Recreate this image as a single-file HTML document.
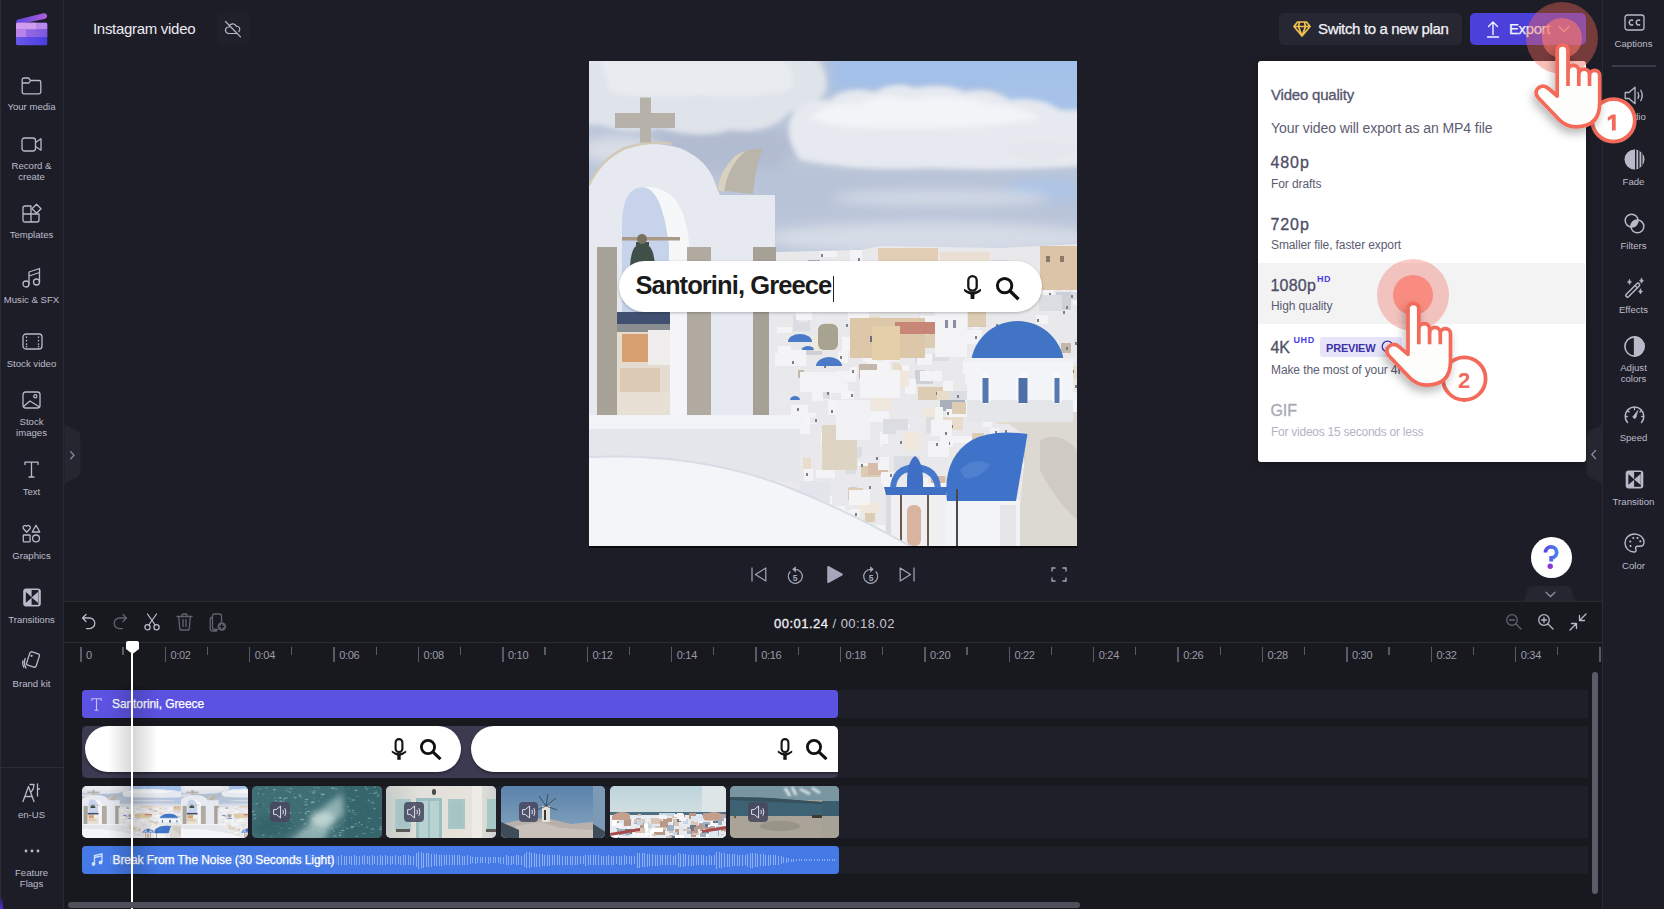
<!DOCTYPE html>
<html><head><meta charset="utf-8">
<style>
*{margin:0;padding:0;box-sizing:border-box}
html,body{width:1664px;height:909px;overflow:hidden}
body{background:#1d1d27;font-family:"Liberation Sans",sans-serif;position:relative;color:#fff}
.a{position:absolute}
.lbl{position:absolute;left:0;width:63px;text-align:center;font-size:9.6px;line-height:10.5px;color:#bcbccb;white-space:nowrap}
.rlbl{position:absolute;left:1603px;width:61px;text-align:center;font-size:9.6px;line-height:10.5px;color:#bcbccb;white-space:nowrap}
svg{position:absolute;overflow:visible}
.ic{fill:none;stroke:#b9b9c9;stroke-width:1.3;stroke-linecap:round;stroke-linejoin:round}
.tick{position:absolute;width:1px;background:#5a5a66}
.wv i{position:absolute;width:1.1px;background:rgba(190,212,255,0.6)}
.rl{position:absolute;top:647px;font-size:11px;color:#9a9aa8;letter-spacing:-0.3px;line-height:13px}
</style></head><body>

<!-- LEFT SIDEBAR -->
<div class="a" style="left:0;top:0;width:1px;height:909px;background:#2c2c38;z-index:1"></div>
<div class="a" style="left:0;top:896px;width:3px;height:13px;background:linear-gradient(180deg,rgba(80,40,220,0),#5028d8);z-index:1"></div>
<div class="a" style="left:0;top:0;width:64px;height:909px;background:#1d1d27;border-right:1px solid #2a2a36"></div>
<div class="a" style="left:0;top:767px;width:63px;height:1px;background:#2c2c38"></div>

<!-- RIGHT SIDEBAR -->
<div class="a" style="left:1602px;top:0;width:62px;height:909px;background:#1d1d27;border-left:1px solid #2a2a36"></div>
<div class="a" style="left:1612px;top:65px;width:44px;height:2px;background:#3a3a48"></div>

<!-- TIMELINE PANEL -->
<div class="a" style="left:64px;top:601px;width:1538px;height:308px;background:#18181f;border-top:1px solid #2b2b36"></div>
<div class="a" style="left:64px;top:642px;width:1538px;height:1px;background:#2b2b36"></div>



<!-- LEFT SIDEBAR ITEMS -->
<svg style="left:21px;top:77px" width="21" height="18" viewBox="0 0 21 18" class="ic">
  <path d="M1.2 3 Q1.2 1 3 1 H7.5 L9.5 3.5 H18 Q19.8 3.5 19.8 5.3 V15 Q19.8 16.8 18 16.8 H3 Q1.2 16.8 1.2 15 Z M1.2 6 H8 L9.5 3.5"/>
</svg>
<div class="lbl" style="top:102.4px">Your media</div>

<svg style="left:21px;top:137px" width="21" height="15" viewBox="0 0 21 15" class="ic">
  <rect x="1" y="1" width="13.5" height="13" rx="2.5"/>
  <path d="M14.5 5.5 L20 1.8 V13.2 L14.5 9.5"/>
</svg>
<div class="lbl" style="top:161px">Record &amp;<br>create</div>

<svg style="left:22px;top:203px" width="20" height="20" viewBox="0 0 20 20" class="ic">
  <path d="M1 5 Q1 3 3 3 H9 V19 H3 Q1 19 1 17 Z M1 11 H17 V17 Q17 19 15 19 H9"/>
  <path d="M14.5 1.2 L19 5.7 L14.5 10.2 L10 5.7 Z"/>
</svg>
<div class="lbl" style="top:230.4px">Templates</div>

<svg style="left:22px;top:267px" width="19" height="21" viewBox="0 0 19 21" class="ic">
  <circle cx="4" cy="17" r="3"/><circle cx="14.5" cy="15" r="3"/>
  <path d="M7 17 V5 L17.5 1.5 V15 M7 9 L17.5 5.5"/>
</svg>
<div class="lbl" style="top:294.7px">Music &amp; SFX</div>

<svg style="left:21.5px;top:333px" width="21" height="17" viewBox="0 0 21 17" class="ic">
  <rect x="1" y="1" width="19" height="15" rx="3"/>
  <path d="M4.5 4 V4.2 M4.5 7.5 V7.7 M4.5 11 V11.2 M4.5 13.5 V13.7 M16.5 4 V4.2 M16.5 7.5 V7.7 M16.5 11 V11.2 M16.5 13.5 V13.7" style="stroke-width:1.5"/>
</svg>
<div class="lbl" style="top:358.5px">Stock video</div>

<svg style="left:22px;top:391px" width="19" height="18" viewBox="0 0 19 18" class="ic">
  <rect x="1" y="1" width="17" height="16" rx="2.5"/>
  <path d="M1.5 15.5 L8 10 L17.5 16"/><circle cx="13.3" cy="5.3" r="1.6"/>
</svg>
<div class="lbl" style="top:417.4px">Stock<br>images</div>

<svg style="left:24px;top:461px" width="15" height="17" viewBox="0 0 15 17" class="ic">
  <path d="M1 3.5 V1.2 H14 V3.5 M7.5 1.2 V16 M5 16 H10"/>
</svg>
<div class="lbl" style="top:486.6px">Text</div>

<svg style="left:22px;top:524px" width="19" height="19" viewBox="0 0 19 19" class="ic">
  <path d="M4.7 8.2 L1.5 4.8 A1.9 1.9 0 0 1 4.7 2.3 A1.9 1.9 0 0 1 7.9 4.8 Z"/>
  <path d="M14 1.2 L17.8 8 H10.2 Z"/>
  <rect x="1.3" y="11" width="6.8" height="6.8" rx="0.6"/>
  <circle cx="14" cy="14.4" r="3.4"/>
</svg>
<div class="lbl" style="top:550.5px">Graphics</div>

<svg style="left:22.5px;top:588px" width="18" height="19" viewBox="0 0 18 19">
  <rect x="0.2" y="0.4" width="17.6" height="18" rx="3" fill="#b9b9c9"/>
  <path d="M2.8 4 L9 9.4 L2.8 14.8 Z" fill="#1d1d27"/>
  <path d="M9 9.4 L15.2 4 V14.8 Z" fill="#1d1d27" opacity="0.35"/>
  <rect x="8.6" y="2" width="6.8" height="14.8" fill="#1d1d27"/>
  <path d="M8.6 9.4 L15.2 3.8 V15 Z" fill="#b9b9c9"/>
</svg>
<div class="lbl" style="top:614.7px">Transitions</div>

<svg style="left:21px;top:651px" width="20" height="20" viewBox="0 0 20 20" class="ic">
  <rect x="7" y="1.5" width="10" height="14" rx="1.8" transform="rotate(18 12 8.5)"/>
  <path d="M4.2 7.5 Q2.2 12 5 17 M1.8 10 Q1 13 2.8 16.3"/>
  <circle cx="10.6" cy="4.8" r="0.5" style="fill:#b9b9c9"/>
</svg>
<div class="lbl" style="top:678.7px">Brand kit</div>

<svg style="left:22px;top:783px" width="19" height="20" viewBox="0 0 19 20" class="ic">
  <path d="M1 18.5 L6.5 3.5 L12 18.5 M3 13.5 H10"/>
  <path d="M8 1.5 H12 Q12 6 9.5 8.5 M15.5 0.8 V13 M15.5 6 H17.5"/>
</svg>
<div class="lbl" style="top:809.5px">en-US</div>

<svg style="left:24px;top:849px" width="16" height="4" viewBox="0 0 16 4">
  <circle cx="2" cy="2" r="1.4" fill="#b9b9c9"/><circle cx="8" cy="2" r="1.4" fill="#b9b9c9"/><circle cx="14" cy="2" r="1.4" fill="#b9b9c9"/>
</svg>
<div class="lbl" style="top:868.1px">Feature<br>Flags</div>

<!-- RIGHT SIDEBAR ITEMS -->
<svg style="left:1624px;top:13.5px" width="21" height="17" viewBox="0 0 21 17" class="ic">
  <rect x="1" y="1" width="19" height="15" rx="2.5"/>
  <path d="M8.6 6.3 A2.4 2.4 0 1 0 8.6 10.7 M15.6 6.3 A2.4 2.4 0 1 0 15.6 10.7" style="stroke-width:1.5"/>
</svg>
<div class="rlbl" style="top:38.9px">Captions</div>

<svg style="left:1624px;top:86px" width="21" height="19" viewBox="0 0 21 19" class="ic">
  <path d="M1.2 6.5 H5 L11 1.3 V17.7 L5 12.5 H1.2 Z"/>
  <path d="M14 6.5 Q15.5 9.5 14 12.5 M16.8 4.2 Q19.6 9.5 16.8 14.8"/>
</svg>
<div class="rlbl" style="top:112.2px">Audio</div>

<svg style="left:1624px;top:149px" width="21" height="21" viewBox="0 0 21 21">
  <defs><clipPath id="fc"><circle cx="10.5" cy="10.5" r="10"/></clipPath></defs>
  <circle cx="10.5" cy="10.5" r="10" fill="#b9b9c9"/>
  <g clip-path="url(#fc)">
   <rect x="11" y="0" width="1.4" height="21" fill="#1d1d27"/>
   <rect x="14.2" y="0" width="1.3" height="21" fill="#1d1d27"/>
   <rect x="17.3" y="0" width="1.2" height="21" fill="#1d1d27"/>
  </g>
</svg>
<div class="rlbl" style="top:176.6px">Fade</div>

<svg style="left:1624px;top:213px" width="21" height="21" viewBox="0 0 21 21" class="ic">
  <defs><clipPath id="fl1"><circle cx="7.6" cy="7.6" r="6.4"/></clipPath></defs>
  <circle cx="13.4" cy="13.4" r="6.4" clip-path="url(#fl1)" style="fill:#b9b9c9;stroke:none"/>
  <circle cx="7.6" cy="7.6" r="6.4" style="stroke-width:1.5"/><circle cx="13.4" cy="13.4" r="6.4" style="stroke-width:1.5"/>
</svg>
<div class="rlbl" style="top:240.5px">Filters</div>

<svg style="left:1624px;top:278px" width="21" height="20" viewBox="0 0 21 20" class="ic">
  <path d="M2.3 16.2 L12.8 5.7 Q14 4.5 15.2 5.7 Q16.4 6.9 15.2 8.1 L4.7 18.6 Q3.5 19.8 2.3 18.6 Q1.1 17.4 2.3 16.2 Z" style="stroke-width:1.4"/>
  <path d="M11 7.5 L13.4 9.9" style="stroke-width:1.3"/>
  <path d="M5.5 1.5 Q5.9 3.6 7.6 4 Q5.9 4.4 5.5 6.5 Q5.1 4.4 3.4 4 Q5.1 3.6 5.5 1.5 Z M17.5 0.3 Q17.9 2.4 19.6 2.8 Q17.9 3.2 17.5 5.3 Q17.1 3.2 15.4 2.8 Q17.1 2.4 17.5 0.3 Z M16.5 11 Q16.9 13.1 18.6 13.5 Q16.9 13.9 16.5 16 Q16.1 13.9 14.4 13.5 Q16.1 13.1 16.5 11 Z" style="fill:#b9b9c9;stroke-width:0.6"/>
</svg>
<div class="rlbl" style="top:304.7px">Effects</div>

<svg style="left:1624px;top:335.5px" width="21" height="21" viewBox="0 0 21 21" class="ic">
  <circle cx="10.5" cy="10.5" r="9.6" style="stroke-width:1.6"/>
  <path d="M10.5 0.9 A9.6 9.6 0 0 1 10.5 20.1 Z" style="fill:#b9b9c9"/>
</svg>
<div class="rlbl" style="top:363.2px">Adjust<br>colors</div>

<svg style="left:1624px;top:405px" width="21" height="19" viewBox="0 0 21 19" class="ic">
  <path d="M3.5 17.5 A9.3 9.3 0 1 1 17.5 17.5" style="stroke-width:1.5"/>
  <path d="M10.5 3 V4.5 M4 6 L5 7 M17 6 L16 7 M2 11.5 H3.3 M19 11.5 H17.7" style="stroke-width:1.3"/>
  <path d="M9.2 11.5 L13.8 5.5 L11.8 12.8 Q10.5 14 9.4 12.8 Q8.8 12.1 9.2 11.5 Z" style="fill:#b9b9c9;stroke-width:0.8"/>
</svg>
<div class="rlbl" style="top:432.6px">Speed</div>

<svg style="left:1625px;top:470px" width="19" height="19" viewBox="0 0 18 19">
  <rect x="0.2" y="0.4" width="17.6" height="18" rx="3" fill="#b9b9c9"/>
  <rect x="8.6" y="2" width="6.8" height="14.8" fill="#1d1d27"/>
  <path d="M2.8 4 L9 9.4 L2.8 14.8 Z" fill="#1d1d27"/>
  <path d="M8.6 9.4 L15.2 3.8 V15 Z" fill="#b9b9c9"/>
</svg>
<div class="rlbl" style="top:496.8px">Transition</div>

<svg style="left:1624px;top:533px" width="21" height="20" viewBox="0 0 21 20" class="ic">
  <path d="M10.5 1 C4.5 1 1 5.5 1 10 C1 15 5 19 10 19 C12 19 12.5 17.5 11.8 16.2 C11 14.8 12 13.2 13.6 13.2 H16 C18.5 13.2 20 11.5 20 9.2 C20 4.5 15.5 1 10.5 1 Z" style="stroke-width:1.4"/>
  <circle cx="6.3" cy="8.5" r="1.1" style="fill:#b9b9c9;stroke:none"/>
  <circle cx="9.3" cy="5" r="1.1" style="fill:#b9b9c9;stroke:none"/>
  <circle cx="13.5" cy="5" r="1.1" style="fill:#b9b9c9;stroke:none"/>
  <circle cx="16.3" cy="8.3" r="1.1" style="fill:#b9b9c9;stroke:none"/>
  <circle cx="6.5" cy="13" r="1.1" style="fill:#b9b9c9;stroke:none"/>
</svg>
<div class="rlbl" style="top:560.7px">Color</div>

<!-- HEADER -->
<svg style="left:16px;top:13px" width="32" height="33" viewBox="0 0 32 33">
  <defs>
    <linearGradient id="lg1" x1="0" y1="0" x2="1" y2="0"><stop offset="0" stop-color="#5a44dc"/><stop offset="1" stop-color="#b060dc"/></linearGradient>
    <linearGradient id="lg3" x1="0" y1="0" x2="1" y2="0"><stop offset="0" stop-color="#6a58e8"/><stop offset="1" stop-color="#4a3ce2"/></linearGradient>
    <linearGradient id="lg4" x1="0" y1="0" x2="1" y2="0"><stop offset="0" stop-color="#a070e6"/><stop offset="1" stop-color="#7c58e0"/></linearGradient>
    <clipPath id="lc"><rect x="0" y="9.5" width="31.5" height="23" rx="2"/></clipPath>
  </defs>
  <path d="M1.8 6.5 L27.5 0.2 Q30.5 -0.3 31 2.6 Q31.4 5.2 28.6 5.9 L2 11.5 Q0 11.5 0 9.5 Q0 7 1.8 6.5 Z" fill="url(#lg1)"/>
  <g clip-path="url(#lc)">
    <rect x="0" y="9.5" width="31.5" height="23" fill="url(#lg3)"/>
    <rect x="0" y="9.5" width="31.5" height="7" fill="#b888ea"/>
    <rect x="0" y="9.5" width="20" height="7" fill="#d09cee"/>
    <rect x="0" y="16.5" width="31.5" height="7.5" fill="url(#lg4)"/>
    <rect x="0" y="16.5" width="10" height="7.5" fill="#b884ea"/>
  </g>
</svg>
<div class="a" style="left:93px;top:19px;font-size:15px;line-height:20px;color:#ececf2;letter-spacing:-0.3px;white-space:nowrap">Instagram video</div>
<div class="a" style="left:217px;top:13px;width:32px;height:32px;border-radius:4px;background:#20202a"></div>
<svg style="left:224px;top:20px" width="18" height="18" viewBox="0 0 18 18" class="ic">
  <path d="M5 7.2 A3.8 3.8 0 0 1 12.3 6.3 A3 3 0 0 1 14.8 11.5 M12.6 13.5 H4.5 A3.2 3.2 0 0 1 3.6 7.3" class="ic" style="stroke-width:1.2"/>
  <path d="M1.5 1.5 L16.5 16.8" class="ic" style="stroke-width:1.2"/>
</svg>

<div class="a" style="left:1279px;top:13px;width:183px;height:32px;border-radius:5px;background:#272734"></div>
<svg style="left:1293px;top:21px" width="18" height="16" viewBox="0 0 18 16">
  <path d="M4.5 1 H13.5 L17 5.5 L9 15 L1 5.5 Z M1 5.5 H17 M6.5 1 L5.5 5.5 L9 15 L12.5 5.5 L11.5 1" fill="none" stroke="#f2c14e" stroke-width="1.7" stroke-linejoin="round"/>
</svg>
<div class="a" style="left:1318px;top:19px;font-size:15px;line-height:20px;color:#f2f2f6;-webkit-text-stroke:0.25px #f2f2f6;letter-spacing:-0.35px;white-space:nowrap">Switch to a new plan</div>

<div class="a" style="left:1470px;top:13px;width:116px;height:32px;border-radius:5px;background:#4b40d9"></div>
<svg style="left:1485px;top:20px" width="16" height="18" viewBox="0 0 16 18">
  <path d="M8 14.5 V2 M3.5 6.5 L8 2 L12.5 6.5 M2.5 17 H13.5" fill="none" stroke="#f4f4ff" stroke-width="1.4" stroke-linecap="round" stroke-linejoin="round"/>
</svg>
<div class="a" style="left:1509px;top:19px;font-size:15px;line-height:20px;color:#f4f4ff;-webkit-text-stroke:0.25px #f4f4ff;letter-spacing:-0.4px;white-space:nowrap">Export</div>
<svg style="left:1558px;top:25px" width="12" height="8" viewBox="0 0 12 8">
  <path d="M1 1.5 L6 6.5 L11 1.5" fill="none" stroke="#dcdcf5" stroke-width="1.3" stroke-linecap="round" stroke-linejoin="round"/>
</svg>


<!-- TIMELINE TOOLBAR -->
<svg style="left:1518px;top:585px" width="63" height="17" viewBox="0 0 63 17"><path d="M0 16.5 Q7 16.5 8 11 L9 5 Q10 1 15 1 H48 Q53 1 54 5 L55 11 Q56 16.5 63 16.5 Z" fill="#262631"/></svg>
<svg style="left:1545px;top:591px" width="11" height="7" viewBox="0 0 11 7"><path d="M1 1.2 L5.5 5.5 L10 1.2" fill="none" stroke="#8c8ca2" stroke-width="1.3" stroke-linecap="round"/></svg>
<svg style="left:81px;top:613px" width="15" height="17" viewBox="0 0 15 17" class="ic">
  <path d="M5 1.5 L1.5 5 L5 8.5 M1.5 5 H8.5 A5.3 5.3 0 0 1 8.5 15.6 H5.5"/>
</svg>
<svg style="left:113px;top:613px" width="15" height="17" viewBox="0 0 15 17" class="ic" style="stroke:#6c6c7c">
  <path d="M10 1.5 L13.5 5 L10 8.5 M13.5 5 H6.5 A5.3 5.3 0 0 0 6.5 15.6 H9.5" style="stroke:#62626f"/>
</svg>
<svg style="left:144px;top:613px" width="16" height="18" viewBox="0 0 16 18" class="ic">
  <circle cx="3.5" cy="14.3" r="2.6"/><circle cx="12.5" cy="14.3" r="2.6"/>
  <path d="M4.8 12 L12.5 1 M11.2 12 L3.5 1"/>
</svg>
<svg style="left:175.5px;top:613px" width="17" height="18" viewBox="0 0 17 18" class="ic">
  <path d="M1 3.5 H16 M6 3.5 V2 Q6 1 7 1 H10 Q11 1 11 2 V3.5 M2.6 3.5 L3.8 16 Q4 17 5 17 H12 Q13 17 13.2 16 L14.4 3.5 M7 6.5 V13.5 M10 6.5 V13.5" style="stroke:#62626f"/>
</svg>
<svg style="left:209px;top:613px" width="18" height="19" viewBox="0 0 18 19">
  <path d="M5.5 1 H10.5 Q12.5 1 12.5 3 V9 M9 16.5 H5.5 Q3.5 16.5 3.5 14.5 V3 Q3.5 1 5.5 1 M3.5 4 Q1.2 4.5 1.2 6.5 V15.5 Q1.2 18 3.7 18 H8" fill="none" stroke="#62626f" stroke-width="1.3"/>
  <circle cx="12.8" cy="13.5" r="4.3" fill="#62626f"/>
  <path d="M12.8 11 V16 M10.3 13.5 H15.3" stroke="#18181f" stroke-width="1.3"/>
</svg>

<div class="a" style="left:774px;top:617px;font-size:13px;line-height:13px;color:#f0f0f5;letter-spacing:0.47px;white-space:nowrap"><span style="-webkit-text-stroke:0.3px #f0f0f5">00:01.24</span> <span style="color:#c8c8d4">/ 00:18.02</span></div>

<svg style="left:1506px;top:614px" width="16" height="16" viewBox="0 0 16 16" class="ic" >
  <circle cx="6" cy="6" r="5.3" style="stroke:#62626f"/><path d="M3.5 6 H8.5 M10 10 L15 15" style="stroke:#62626f"/>
</svg>
<svg style="left:1538px;top:614px" width="16" height="16" viewBox="0 0 16 16" class="ic">
  <circle cx="6" cy="6" r="5.3"/><path d="M3.5 6 H8.5 M6 3.5 V8.5 M10 10 L15 15"/>
</svg>
<svg style="left:1569px;top:613px" width="18" height="18" viewBox="0 0 18 18" class="ic">
  <path d="M17 1 L10.5 7.5 M10.5 2.5 V7.5 H15.5 M1 17 L7.5 10.5 M2.5 10.5 H7.5 V15.5"/>
</svg>

<!-- RULER -->
<div class="tick" style="left:80.1px;top:647px;height:15px;width:1.5px"></div>
<div class="tick" style="left:122.4px;top:647px;height:7.5px;width:1.3px"></div>
<div class="rl" style="left:86.0px;top:648.9px">0</div>
<div class="tick" style="left:164.5px;top:647px;height:15px;width:1.5px"></div>
<div class="tick" style="left:206.8px;top:647px;height:7.5px;width:1.3px"></div>
<div class="rl" style="left:170.4px;top:648.9px">0:02</div>
<div class="tick" style="left:248.9px;top:647px;height:15px;width:1.5px"></div>
<div class="tick" style="left:291.2px;top:647px;height:7.5px;width:1.3px"></div>
<div class="rl" style="left:254.8px;top:648.9px">0:04</div>
<div class="tick" style="left:333.3px;top:647px;height:15px;width:1.5px"></div>
<div class="tick" style="left:375.6px;top:647px;height:7.5px;width:1.3px"></div>
<div class="rl" style="left:339.2px;top:648.9px">0:06</div>
<div class="tick" style="left:417.7px;top:647px;height:15px;width:1.5px"></div>
<div class="tick" style="left:460.0px;top:647px;height:7.5px;width:1.3px"></div>
<div class="rl" style="left:423.6px;top:648.9px">0:08</div>
<div class="tick" style="left:502.1px;top:647px;height:15px;width:1.5px"></div>
<div class="tick" style="left:544.4px;top:647px;height:7.5px;width:1.3px"></div>
<div class="rl" style="left:508.0px;top:648.9px">0:10</div>
<div class="tick" style="left:586.5px;top:647px;height:15px;width:1.5px"></div>
<div class="tick" style="left:628.8px;top:647px;height:7.5px;width:1.3px"></div>
<div class="rl" style="left:592.4px;top:648.9px">0:12</div>
<div class="tick" style="left:670.9px;top:647px;height:15px;width:1.5px"></div>
<div class="tick" style="left:713.2px;top:647px;height:7.5px;width:1.3px"></div>
<div class="rl" style="left:676.8px;top:648.9px">0:14</div>
<div class="tick" style="left:755.3px;top:647px;height:15px;width:1.5px"></div>
<div class="tick" style="left:797.6px;top:647px;height:7.5px;width:1.3px"></div>
<div class="rl" style="left:761.2px;top:648.9px">0:16</div>
<div class="tick" style="left:839.7px;top:647px;height:15px;width:1.5px"></div>
<div class="tick" style="left:882.0px;top:647px;height:7.5px;width:1.3px"></div>
<div class="rl" style="left:845.6px;top:648.9px">0:18</div>
<div class="tick" style="left:924.1px;top:647px;height:15px;width:1.5px"></div>
<div class="tick" style="left:966.4px;top:647px;height:7.5px;width:1.3px"></div>
<div class="rl" style="left:930.0px;top:648.9px">0:20</div>
<div class="tick" style="left:1008.5px;top:647px;height:15px;width:1.5px"></div>
<div class="tick" style="left:1050.8px;top:647px;height:7.5px;width:1.3px"></div>
<div class="rl" style="left:1014.4px;top:648.9px">0:22</div>
<div class="tick" style="left:1092.9px;top:647px;height:15px;width:1.5px"></div>
<div class="tick" style="left:1135.2px;top:647px;height:7.5px;width:1.3px"></div>
<div class="rl" style="left:1098.8px;top:648.9px">0:24</div>
<div class="tick" style="left:1177.3px;top:647px;height:15px;width:1.5px"></div>
<div class="tick" style="left:1219.6px;top:647px;height:7.5px;width:1.3px"></div>
<div class="rl" style="left:1183.2px;top:648.9px">0:26</div>
<div class="tick" style="left:1261.7px;top:647px;height:15px;width:1.5px"></div>
<div class="tick" style="left:1304.0px;top:647px;height:7.5px;width:1.3px"></div>
<div class="rl" style="left:1267.6px;top:648.9px">0:28</div>
<div class="tick" style="left:1346.1px;top:647px;height:15px;width:1.5px"></div>
<div class="tick" style="left:1388.4px;top:647px;height:7.5px;width:1.3px"></div>
<div class="rl" style="left:1352.0px;top:648.9px">0:30</div>
<div class="tick" style="left:1430.5px;top:647px;height:15px;width:1.5px"></div>
<div class="tick" style="left:1472.8px;top:647px;height:7.5px;width:1.3px"></div>
<div class="rl" style="left:1436.4px;top:648.9px">0:32</div>
<div class="tick" style="left:1514.9px;top:647px;height:15px;width:1.5px"></div>
<div class="tick" style="left:1557.2px;top:647px;height:7.5px;width:1.3px"></div>
<div class="rl" style="left:1520.8px;top:648.9px">0:34</div>
<div class="tick" style="left:1599.3px;top:647px;height:15px;width:1.5px"></div>

<!-- TRACK ROWS -->
<div class="a" style="left:82px;top:690px;width:1506px;height:28px;background:#1f1f29"></div>
<div class="a" style="left:82px;top:726px;width:1506px;height:52px;background:#1f1f29"></div>
<div class="a" style="left:82px;top:786px;width:1506px;height:52px;background:#1f1f29"></div>
<div class="a" style="left:82px;top:846px;width:1506px;height:28px;background:#1f1f29"></div>

<!-- TEXT CLIP -->
<div class="a" style="left:82px;top:690px;width:756px;height:28px;background:#5c52e2;border-radius:4px"></div>
<svg style="left:91px;top:697.5px" width="11" height="13" viewBox="0 0 11 13"><path d="M0.8 2.8 V0.8 H10.2 V2.8 M5.5 0.8 V12.2 M3.5 12.2 H7.5" fill="none" stroke="#c7c2f5" stroke-width="1.1"/></svg>
<div class="a" style="left:112px;top:697px;font-size:12px;line-height:15px;color:#fff;-webkit-text-stroke:0.25px #fff;letter-spacing:-0.08px;white-space:nowrap">Santorini, Greece</div>

<!-- SHAPES CLIP -->
<div class="a" style="left:82px;top:726px;width:756px;height:52px;background:#3c3a50;border-radius:5px;overflow:hidden">
  <div class="a" style="left:3px;top:0;width:376px;height:46px;background:#fff;border-radius:23px;box-shadow:0 1.5px 2.5px rgba(0,0,0,0.4)"></div>
  <div class="a" style="left:389px;top:0;width:400px;height:46px;background:#fff;border-radius:23px;box-shadow:0 1.5px 2.5px rgba(0,0,0,0.4)"></div>
</div>
<svg style="left:391px;top:738px" width="16" height="23" viewBox="0 0 16 23">
  <rect x="4.6" y="1.1" width="6.8" height="13" rx="3.4" fill="none" stroke="#151515" stroke-width="2.1"/>
  <path d="M0.8 12.6 Q8 17.8 15.2 12.6 L15.2 14.6 Q8 21 0.8 14.6 Z" fill="#151515"/>
  <rect x="6.3" y="17" width="3.4" height="4.8" fill="#151515"/>
</svg>
<svg style="left:419px;top:738px" width="24" height="23" viewBox="0 0 24 23">
  <circle cx="9" cy="9" r="6.6" fill="none" stroke="#111" stroke-width="2.8"/>
  <path d="M13.8 13.8 L21.5 21.2" stroke="#111" stroke-width="3" stroke-linecap="butt"/>
</svg>
<svg style="left:777px;top:738px" width="16" height="23" viewBox="0 0 16 23">
  <rect x="4.6" y="1.1" width="6.8" height="13" rx="3.4" fill="none" stroke="#151515" stroke-width="2.1"/>
  <path d="M0.8 12.6 Q8 17.8 15.2 12.6 L15.2 14.6 Q8 21 0.8 14.6 Z" fill="#151515"/>
  <rect x="6.3" y="17" width="3.4" height="4.8" fill="#151515"/>
</svg>
<svg style="left:805px;top:738px" width="24" height="23" viewBox="0 0 24 23">
  <circle cx="9" cy="9" r="6.6" fill="none" stroke="#111" stroke-width="2.8"/>
  <path d="M13.8 13.8 L21.5 21.2" stroke="#111" stroke-width="3" stroke-linecap="butt"/>
</svg>

<!-- VIDEO CLIPS -->

<div class="a" style="left:82px;top:786px;width:165.5px;height:52px;border-radius:5px;overflow:hidden;background:#dfe3ea"><div class="a" style="left:0px;top:0;width:488px;height:485px;transform-origin:0 0;transform:scale(0.2029,0.1072);overflow:hidden;background:linear-gradient(180deg,#c2cfe4 0%,#c9d4e6 40%,#d6dde9 60%)">
  <svg class="a" style="left:0;top:0" width="488" height="200" viewBox="589 61 488 200">
    <defs><filter id="bl" x="-30%" y="-30%" width="160%" height="160%"><feGaussianBlur stdDeviation="6"/></filter>
    <filter id="bl2" x="-30%" y="-30%" width="160%" height="160%"><feGaussianBlur stdDeviation="2.5"/></filter></defs>
    <rect x="589" y="61" width="488" height="200" fill="#bac5d9"/>
    <g filter="url(#bl)">
      <rect x="830" y="30" width="280" height="62" fill="#a3c0e8"/>
      <rect x="1000" y="80" width="100" height="36" fill="#a6c2e8"/>
      <ellipse cx="720" cy="150" rx="110" ry="22" fill="#b2bcd0"/>
      <ellipse cx="620" cy="150" rx="40" ry="14" fill="#d8dde6"/>
      <ellipse cx="940" cy="160" rx="160" ry="14" fill="#bcc6d8"/>
      <rect x="760" y="175" width="330" height="35" fill="#b7c3d7"/>
      <ellipse cx="1045" cy="190" rx="40" ry="12" fill="#aec5e6"/>
      <ellipse cx="940" cy="198" rx="110" ry="8" fill="#d2d9e6"/>
      <ellipse cx="930" cy="238" rx="170" ry="16" fill="#d6dce6"/>
      <ellipse cx="700" cy="238" rx="80" ry="14" fill="#cad3e2"/>
    </g>
    <g filter="url(#bl2)">
      <path d="M570 50 H800 Q830 60 826 90 Q815 110 790 112 Q770 135 730 130 Q700 140 660 128 Q630 135 600 125 L570 125 Z" fill="#dfe3ea"/>
      <path d="M600 60 H780 Q800 70 790 90 Q740 100 700 95 Q650 100 610 92 Z" fill="#e8ebf0"/>
      <path d="M790 120 Q800 98 830 100 Q845 85 875 92 Q895 80 915 88 Q945 82 965 92 Q990 86 1010 100 Q1040 96 1060 110 L1090 110 L1090 165 Q1000 172 930 168 Q860 172 800 160 Q785 140 790 120 Z" fill="#e6e9ef"/>
      <path d="M810 118 Q830 100 860 104 Q880 92 910 100 Q950 92 990 104 Q1020 106 1040 118 Q980 130 900 128 Q840 130 810 118 Z" fill="#f2f4f7"/>
      <ellipse cx="1040" cy="150" rx="40" ry="10" fill="#e4e8ee"/>
    </g>
  </svg>
  <svg class="a" style="left:0;top:0" width="488" height="485" viewBox="589 61 488 485">
  <defs><clipPath id="dc1"><rect x="960" y="300" width="120" height="61"/></clipPath><clipPath id="dc2"><rect x="930" y="420" width="110" height="81.5"/></clipPath><filter id="tb"><feGaussianBlur stdDeviation="0.6"/></filter></defs>
  <path d="M775 252 L860 250 L880 246 L1000 248 L1040 246 L1077 244 L1077 546 L775 546 Z" fill="#e9e8ea"/>
  <g filter="url(#tb)">
   <rect x="910" y="414" width="24" height="11" fill="#eaeaee"/>
   <rect x="828" y="400" width="19" height="15" fill="#f4f4f6"/>
   <rect x="831" y="410" width="2" height="3" fill="#7c8088"/>
   <rect x="983" y="260" width="26" height="18" fill="#dcdde2"/>
   <rect x="820" y="251" width="17" height="6" fill="#f4f4f6"/>
   <rect x="821" y="254" width="2" height="3" fill="#7c8088"/>
   <rect x="906" y="499" width="16" height="13" fill="#eaeaee"/>
   <rect x="911" y="330" width="26" height="18" fill="#dcccb4"/>
   <rect x="868" y="316" width="12" height="6" fill="#e8dccb"/>
   <rect x="1030" y="363" width="25" height="16" fill="#f4f4f6"/>
   <rect x="1050" y="369" width="2" height="3" fill="#7c8088"/>
   <rect x="1071" y="366" width="7" height="13" fill="#e8dccb"/>
   <rect x="1072" y="370" width="2" height="3" fill="#7c8088"/>
   <rect x="1066" y="474" width="8" height="8" fill="#f4f4f6"/>
   <rect x="1071" y="476" width="2" height="3" fill="#7c8088"/>
   <rect x="943" y="381" width="10" height="15" fill="#f4f4f6"/>
   <rect x="808" y="373" width="10" height="9" fill="#c4b8aa"/>
   <rect x="865" y="512" width="10" height="10" fill="#dcccb4"/>
   <rect x="803" y="543" width="10" height="8" fill="#e8dccb"/>
   <rect x="805" y="545" width="2" height="3" fill="#7c8088"/>
   <rect x="799" y="421" width="11" height="13" fill="#f4f4f6"/>
   <rect x="1065" y="392" width="17" height="16" fill="#f4f4f6"/>
   <rect x="1078" y="402" width="2" height="3" fill="#7c8088"/>
   <rect x="848" y="304" width="21" height="17" fill="#f4f4f6"/>
   <rect x="1041" y="427" width="14" height="6" fill="#f4f4f6"/>
   <rect x="845" y="458" width="11" height="16" fill="#dcdde2"/>
   <rect x="847" y="467" width="2" height="3" fill="#7c8088"/>
   <rect x="793" y="315" width="17" height="16" fill="#dcdde2"/>
   <rect x="806" y="319" width="2" height="3" fill="#7c8088"/>
   <rect x="777" y="327" width="15" height="6" fill="#f4f4f6"/>
   <rect x="947" y="286" width="13" height="17" fill="#c4b8aa"/>
   <rect x="983" y="422" width="9" height="5" fill="#f4f4f6"/>
   <rect x="986" y="535" width="6" height="13" fill="#eaeaee"/>
   <rect x="869" y="546" width="8" height="12" fill="#cdd0d6"/>
   <rect x="997" y="457" width="22" height="17" fill="#f4f4f6"/>
   <rect x="1047" y="507" width="14" height="15" fill="#dcccb4"/>
   <rect x="963" y="361" width="18" height="13" fill="#f4f4f6"/>
   <rect x="1075" y="510" width="21" height="10" fill="#cdd0d6"/>
   <rect x="906" y="498" width="8" height="15" fill="#f4f4f6"/>
   <rect x="919" y="316" width="20" height="11" fill="#dcdde2"/>
   <rect x="850" y="250" width="12" height="14" fill="#f4f4f6"/>
   <rect x="858" y="258" width="2" height="3" fill="#7c8088"/>
   <rect x="907" y="514" width="13" height="14" fill="#f4f4f6"/>
   <rect x="1018" y="520" width="24" height="10" fill="#eaeaee"/>
   <rect x="1021" y="524" width="2" height="3" fill="#7c8088"/>
   <rect x="1027" y="501" width="20" height="17" fill="#f4f4f6"/>
   <rect x="1036" y="506" width="2" height="3" fill="#7c8088"/>
   <rect x="837" y="371" width="19" height="11" fill="#f4f4f6"/>
   <rect x="1072" y="382" width="7" height="5" fill="#f0e8dc"/>
   <rect x="1075" y="385" width="2" height="3" fill="#7c8088"/>
   <rect x="866" y="484" width="6" height="7" fill="#eaeaee"/>
   <rect x="869" y="486" width="2" height="3" fill="#7c8088"/>
   <rect x="815" y="261" width="19" height="11" fill="#dcdde2"/>
   <rect x="1018" y="534" width="20" height="8" fill="#eaeaee"/>
   <rect x="1019" y="536" width="2" height="3" fill="#7c8088"/>
   <rect x="990" y="301" width="11" height="9" fill="#dcdde2"/>
   <rect x="959" y="473" width="14" height="15" fill="#f0e8dc"/>
   <rect x="970" y="482" width="2" height="3" fill="#7c8088"/>
   <rect x="812" y="383" width="19" height="17" fill="#f4f4f6"/>
   <rect x="1040" y="485" width="25" height="11" fill="#dcdde2"/>
   <rect x="1056" y="491" width="2" height="3" fill="#7c8088"/>
   <rect x="968" y="462" width="10" height="17" fill="#c4b8aa"/>
   <rect x="936" y="483" width="12" height="17" fill="#dcccb4"/>
   <rect x="937" y="490" width="2" height="3" fill="#7c8088"/>
   <rect x="940" y="477" width="16" height="5" fill="#e8dccb"/>
   <rect x="950" y="479" width="2" height="3" fill="#7c8088"/>
   <rect x="874" y="483" width="9" height="7" fill="#eaeaee"/>
   <rect x="1028" y="453" width="25" height="11" fill="#f0e8dc"/>
   <rect x="1034" y="458" width="2" height="3" fill="#7c8088"/>
   <rect x="861" y="465" width="19" height="12" fill="#dcccb4"/>
   <rect x="867" y="361" width="23" height="17" fill="#f4f4f6"/>
   <rect x="1067" y="404" width="17" height="8" fill="#eaeaee"/>
   <rect x="957" y="255" width="25" height="12" fill="#eaeaee"/>
   <rect x="944" y="394" width="20" height="6" fill="#eaeaee"/>
   <rect x="1064" y="523" width="11" height="11" fill="#f4f4f6"/>
   <rect x="1021" y="516" width="16" height="9" fill="#f4f4f6"/>
   <rect x="1054" y="286" width="22" height="5" fill="#f4f4f6"/>
   <rect x="1067" y="288" width="2" height="3" fill="#7c8088"/>
   <rect x="880" y="432" width="8" height="15" fill="#f4f4f6"/>
   <rect x="848" y="306" width="17" height="11" fill="#f4f4f6"/>
   <rect x="933" y="295" width="10" height="13" fill="#dcdde2"/>
   <rect x="1032" y="430" width="23" height="8" fill="#cdd0d6"/>
   <rect x="1047" y="341" width="12" height="17" fill="#f4f4f6"/>
   <rect x="1043" y="287" width="11" height="14" fill="#f4f4f6"/>
   <rect x="1049" y="293" width="2" height="3" fill="#7c8088"/>
   <rect x="1013" y="285" width="14" height="14" fill="#f4f4f6"/>
   <rect x="1021" y="294" width="2" height="3" fill="#7c8088"/>
   <rect x="1067" y="282" width="16" height="15" fill="#eaeaee"/>
   <rect x="830" y="268" width="8" height="5" fill="#eaeaee"/>
   <rect x="945" y="291" width="10" height="8" fill="#dcccb4"/>
   <rect x="1055" y="275" width="7" height="17" fill="#eaeaee"/>
   <rect x="872" y="387" width="16" height="11" fill="#dcdde2"/>
   <rect x="881" y="392" width="2" height="3" fill="#7c8088"/>
   <rect x="827" y="383" width="21" height="10" fill="#f4f4f6"/>
   <rect x="837" y="385" width="2" height="3" fill="#7c8088"/>
   <rect x="1044" y="487" width="20" height="16" fill="#dcdde2"/>
   <rect x="955" y="398" width="26" height="15" fill="#f4f4f6"/>
   <rect x="999" y="480" width="22" height="10" fill="#f0e8dc"/>
   <rect x="984" y="476" width="21" height="10" fill="#cdd0d6"/>
   <rect x="991" y="480" width="2" height="3" fill="#7c8088"/>
   <rect x="775" y="353" width="19" height="13" fill="#f4f4f6"/>
   <rect x="975" y="348" width="19" height="12" fill="#eaeaee"/>
   <rect x="1077" y="439" width="20" height="15" fill="#c4b8aa"/>
   <rect x="1088" y="448" width="2" height="3" fill="#7c8088"/>
   <rect x="850" y="367" width="7" height="8" fill="#f4f4f6"/>
   <rect x="852" y="370" width="2" height="3" fill="#7c8088"/>
   <rect x="940" y="399" width="25" height="12" fill="#aab0ba"/>
   <rect x="1019" y="270" width="18" height="15" fill="#f4f4f6"/>
   <rect x="821" y="388" width="9" height="11" fill="#dcdde2"/>
   <rect x="827" y="392" width="2" height="3" fill="#7c8088"/>
   <rect x="933" y="426" width="13" height="9" fill="#dcdde2"/>
   <rect x="858" y="461" width="12" height="5" fill="#f4f4f6"/>
   <rect x="861" y="464" width="2" height="3" fill="#7c8088"/>
   <rect x="891" y="515" width="21" height="6" fill="#c4b8aa"/>
   <rect x="794" y="518" width="15" height="11" fill="#c4b8aa"/>
   <rect x="801" y="525" width="2" height="3" fill="#7c8088"/>
   <rect x="992" y="387" width="26" height="16" fill="#dcdde2"/>
   <rect x="1007" y="393" width="2" height="3" fill="#7c8088"/>
   <rect x="834" y="263" width="17" height="7" fill="#eaeaee"/>
   <rect x="911" y="325" width="18" height="10" fill="#e8dccb"/>
   <rect x="1076" y="532" width="21" height="8" fill="#f4f4f6"/>
   <rect x="1011" y="434" width="13" height="9" fill="#dcdde2"/>
   <rect x="952" y="436" width="21" height="7" fill="#f4f4f6"/>
   <rect x="1051" y="510" width="7" height="6" fill="#f4f4f6"/>
   <rect x="962" y="278" width="17" height="6" fill="#f4f4f6"/>
   <rect x="940" y="436" width="13" height="11" fill="#f4f4f6"/>
   <rect x="948" y="442" width="2" height="3" fill="#7c8088"/>
   <rect x="795" y="283" width="22" height="13" fill="#e8dccb"/>
   <rect x="803" y="287" width="2" height="3" fill="#7c8088"/>
   <rect x="1019" y="357" width="19" height="18" fill="#f4f4f6"/>
   <rect x="1000" y="522" width="15" height="10" fill="#f4f4f6"/>
   <rect x="796" y="272" width="17" height="11" fill="#dcdde2"/>
   <rect x="807" y="274" width="2" height="3" fill="#7c8088"/>
   <rect x="837" y="445" width="8" height="9" fill="#cdd0d6"/>
   <rect x="858" y="290" width="13" height="14" fill="#f4f4f6"/>
   <rect x="866" y="297" width="2" height="3" fill="#7c8088"/>
   <rect x="1052" y="528" width="24" height="11" fill="#e8dccb"/>
   <rect x="1060" y="532" width="2" height="3" fill="#7c8088"/>
   <rect x="1057" y="515" width="11" height="10" fill="#f4f4f6"/>
   <rect x="893" y="363" width="10" height="12" fill="#e8dccb"/>
   <rect x="1027" y="415" width="10" height="15" fill="#f0e8dc"/>
   <rect x="1028" y="422" width="2" height="3" fill="#7c8088"/>
   <rect x="938" y="417" width="25" height="13" fill="#e8dccb"/>
   <rect x="951" y="425" width="2" height="3" fill="#7c8088"/>
   <rect x="798" y="271" width="21" height="17" fill="#f4f4f6"/>
   <rect x="816" y="470" width="19" height="8" fill="#f4f4f6"/>
   <rect x="931" y="476" width="14" height="9" fill="#d8bca8"/>
   <rect x="923" y="408" width="20" height="14" fill="#f0e8dc"/>
   <rect x="1024" y="446" width="23" height="15" fill="#dcccb4"/>
   <rect x="1064" y="438" width="16" height="14" fill="#e8dccb"/>
   <rect x="900" y="291" width="21" height="18" fill="#f4f4f6"/>
   <rect x="905" y="298" width="2" height="3" fill="#7c8088"/>
   <rect x="861" y="537" width="7" height="9" fill="#f4f4f6"/>
   <rect x="1009" y="301" width="7" height="11" fill="#eaeaee"/>
   <rect x="783" y="279" width="10" height="8" fill="#f4f4f6"/>
   <rect x="953" y="314" width="10" height="9" fill="#f4f4f6"/>
   <rect x="867" y="411" width="22" height="11" fill="#f4f4f6"/>
   <rect x="1051" y="349" width="17" height="17" fill="#eaeaee"/>
   <rect x="1052" y="362" width="2" height="3" fill="#7c8088"/>
   <rect x="1016" y="362" width="17" height="12" fill="#f4f4f6"/>
   <rect x="973" y="318" width="6" height="11" fill="#f4f4f6"/>
   <rect x="990" y="428" width="9" height="7" fill="#f4f4f6"/>
   <rect x="995" y="431" width="2" height="3" fill="#7c8088"/>
   <rect x="966" y="544" width="11" height="12" fill="#f4f4f6"/>
   <rect x="772" y="493" width="23" height="16" fill="#f4f4f6"/>
   <rect x="787" y="496" width="2" height="3" fill="#7c8088"/>
   <rect x="918" y="387" width="25" height="13" fill="#dcccb4"/>
   <rect x="936" y="392" width="2" height="3" fill="#7c8088"/>
   <rect x="1052" y="274" width="23" height="8" fill="#eaeaee"/>
   <rect x="820" y="496" width="12" height="9" fill="#f4f4f6"/>
   <rect x="825" y="500" width="2" height="3" fill="#7c8088"/>
   <rect x="882" y="452" width="8" height="10" fill="#eaeaee"/>
   <rect x="1025" y="443" width="6" height="10" fill="#dcdde2"/>
   <rect x="1027" y="446" width="2" height="3" fill="#7c8088"/>
   <rect x="775" y="543" width="22" height="8" fill="#dcdde2"/>
   <rect x="783" y="546" width="2" height="3" fill="#7c8088"/>
   <rect x="863" y="348" width="14" height="14" fill="#f4f4f6"/>
   <rect x="871" y="352" width="2" height="3" fill="#7c8088"/>
   <rect x="1060" y="415" width="20" height="9" fill="#e8dccb"/>
   <rect x="1064" y="418" width="2" height="3" fill="#7c8088"/>
   <rect x="979" y="459" width="10" height="10" fill="#dcccb4"/>
   <rect x="799" y="315" width="9" height="7" fill="#eaeaee"/>
   <rect x="805" y="317" width="2" height="3" fill="#7c8088"/>
   <rect x="928" y="441" width="21" height="16" fill="#f4f4f6"/>
   <rect x="936" y="443" width="2" height="3" fill="#7c8088"/>
   <rect x="894" y="456" width="26" height="15" fill="#dcdde2"/>
   <rect x="778" y="346" width="13" height="13" fill="#f4f4f6"/>
   <rect x="927" y="483" width="23" height="13" fill="#f4f4f6"/>
   <rect x="1047" y="411" width="13" height="12" fill="#f4f4f6"/>
   <rect x="1073" y="401" width="20" height="16" fill="#f4f4f6"/>
   <rect x="963" y="306" width="8" height="8" fill="#eaeaee"/>
   <rect x="872" y="525" width="13" height="11" fill="#f4f4f6"/>
   <rect x="813" y="517" width="17" height="12" fill="#eaeaee"/>
   <rect x="826" y="526" width="2" height="3" fill="#7c8088"/>
   <rect x="1021" y="427" width="8" height="16" fill="#f4f4f6"/>
   <rect x="845" y="419" width="23" height="7" fill="#eaeaee"/>
   <rect x="847" y="421" width="2" height="3" fill="#7c8088"/>
   <rect x="1073" y="528" width="19" height="9" fill="#dcdde2"/>
   <rect x="888" y="424" width="22" height="5" fill="#f4f4f6"/>
   <rect x="816" y="363" width="17" height="7" fill="#eaeaee"/>
   <rect x="824" y="365" width="2" height="3" fill="#7c8088"/>
   <rect x="968" y="258" width="19" height="7" fill="#d8bca8"/>
   <rect x="915" y="370" width="18" height="14" fill="#cdd0d6"/>
   <rect x="920" y="544" width="23" height="16" fill="#eaeaee"/>
   <rect x="945" y="518" width="17" height="12" fill="#eaeaee"/>
   <rect x="870" y="263" width="21" height="17" fill="#cdd0d6"/>
   <rect x="1001" y="338" width="18" height="6" fill="#f4f4f6"/>
   <rect x="925" y="366" width="7" height="14" fill="#eaeaee"/>
   <rect x="927" y="371" width="2" height="3" fill="#7c8088"/>
   <rect x="844" y="267" width="24" height="18" fill="#dcdde2"/>
   <rect x="901" y="488" width="10" height="15" fill="#eaeaee"/>
   <rect x="802" y="484" width="8" height="12" fill="#d8bca8"/>
   <rect x="804" y="488" width="2" height="3" fill="#7c8088"/>
   <rect x="871" y="266" width="24" height="16" fill="#eaeaee"/>
   <rect x="951" y="261" width="7" height="17" fill="#f4f4f6"/>
   <rect x="1057" y="539" width="15" height="8" fill="#f4f4f6"/>
   <rect x="1046" y="305" width="23" height="10" fill="#eaeaee"/>
   <rect x="1063" y="311" width="2" height="3" fill="#7c8088"/>
   <rect x="834" y="436" width="10" height="16" fill="#f4f4f6"/>
   <rect x="839" y="441" width="2" height="3" fill="#7c8088"/>
   <rect x="1047" y="507" width="20" height="7" fill="#dcdde2"/>
   <rect x="908" y="271" width="10" height="9" fill="#dcdde2"/>
   <rect x="910" y="273" width="2" height="3" fill="#7c8088"/>
   <rect x="975" y="483" width="13" height="14" fill="#f0e8dc"/>
   <rect x="842" y="337" width="25" height="14" fill="#f4f4f6"/>
   <rect x="799" y="541" width="15" height="12" fill="#eaeaee"/>
   <rect x="807" y="545" width="2" height="3" fill="#7c8088"/>
   <rect x="849" y="487" width="8" height="9" fill="#cdd0d6"/>
   <rect x="851" y="491" width="2" height="3" fill="#7c8088"/>
   <rect x="829" y="515" width="26" height="5" fill="#eaeaee"/>
   <rect x="889" y="525" width="16" height="7" fill="#eaeaee"/>
   <rect x="882" y="444" width="22" height="12" fill="#eaeaee"/>
   <rect x="981" y="403" width="25" height="7" fill="#e8dccb"/>
   <rect x="994" y="405" width="2" height="3" fill="#7c8088"/>
   <rect x="906" y="478" width="22" height="15" fill="#f4f4f6"/>
   <rect x="839" y="420" width="16" height="5" fill="#dcdde2"/>
   <rect x="947" y="508" width="10" height="7" fill="#f4f4f6"/>
   <rect x="905" y="379" width="11" height="15" fill="#f4f4f6"/>
   <rect x="946" y="409" width="22" height="8" fill="#f4f4f6"/>
   <rect x="947" y="412" width="2" height="3" fill="#7c8088"/>
   <rect x="961" y="404" width="11" height="13" fill="#f4f4f6"/>
   <rect x="824" y="323" width="9" height="14" fill="#e8dccb"/>
   <rect x="791" y="370" width="13" height="8" fill="#c4b8aa"/>
   <rect x="796" y="373" width="2" height="3" fill="#7c8088"/>
   <rect x="1073" y="290" width="15" height="15" fill="#f4f4f6"/>
   <rect x="1084" y="293" width="2" height="3" fill="#7c8088"/>
   <rect x="892" y="336" width="14" height="6" fill="#f4f4f6"/>
   <rect x="1005" y="466" width="11" height="8" fill="#eaeaee"/>
   <rect x="1009" y="471" width="2" height="3" fill="#7c8088"/>
   <rect x="883" y="348" width="26" height="13" fill="#f4f4f6"/>
   <rect x="970" y="264" width="13" height="14" fill="#dcccb4"/>
   <rect x="1042" y="385" width="14" height="16" fill="#f4f4f6"/>
   <rect x="838" y="351" width="10" height="12" fill="#f4f4f6"/>
   <rect x="840" y="356" width="2" height="3" fill="#7c8088"/>
   <rect x="866" y="381" width="26" height="14" fill="#dcccb4"/>
   <rect x="875" y="383" width="2" height="3" fill="#7c8088"/>
   <rect x="983" y="355" width="11" height="5" fill="#f4f4f6"/>
   <rect x="987" y="358" width="2" height="3" fill="#7c8088"/>
   <rect x="990" y="327" width="13" height="7" fill="#f0e8dc"/>
   <rect x="1006" y="463" width="24" height="5" fill="#f4f4f6"/>
   <rect x="797" y="511" width="13" height="15" fill="#eaeaee"/>
   <rect x="802" y="515" width="2" height="3" fill="#7c8088"/>
   <rect x="784" y="292" width="18" height="5" fill="#f4f4f6"/>
   <rect x="938" y="288" width="20" height="8" fill="#cdd0d6"/>
   <rect x="817" y="308" width="12" height="14" fill="#eaeaee"/>
   <rect x="1036" y="315" width="12" height="9" fill="#f4f4f6"/>
   <rect x="1037" y="319" width="2" height="3" fill="#7c8088"/>
   <rect x="945" y="489" width="26" height="9" fill="#dcdde2"/>
   <rect x="838" y="453" width="19" height="17" fill="#dcccb4"/>
   <rect x="849" y="456" width="2" height="3" fill="#7c8088"/>
   <rect x="902" y="364" width="7" height="10" fill="#f4f4f6"/>
   <rect x="857" y="294" width="14" height="11" fill="#f4f4f6"/>
   <rect x="845" y="275" width="13" height="10" fill="#f4f4f6"/>
   <rect x="986" y="412" width="20" height="5" fill="#f4f4f6"/>
   <rect x="791" y="368" width="7" height="11" fill="#eaeaee"/>
   <rect x="871" y="323" width="6" height="10" fill="#f0e8dc"/>
   <rect x="852" y="447" width="10" height="11" fill="#dcdde2"/>
   <rect x="883" y="419" width="25" height="15" fill="#dcdde2"/>
   <rect x="897" y="371" width="12" height="16" fill="#f0e8dc"/>
   <rect x="1049" y="258" width="9" height="12" fill="#f4f4f6"/>
   <rect x="1070" y="292" width="10" height="8" fill="#dcdde2"/>
   <rect x="1071" y="295" width="2" height="3" fill="#7c8088"/>
   <rect x="892" y="319" width="16" height="13" fill="#eaeaee"/>
   <rect x="943" y="495" width="25" height="9" fill="#f4f4f6"/>
   <rect x="868" y="461" width="20" height="14" fill="#d8bca8"/>
   <rect x="821" y="433" width="16" height="12" fill="#f4f4f6"/>
   <rect x="830" y="438" width="2" height="3" fill="#7c8088"/>
   <rect x="844" y="322" width="12" height="7" fill="#eaeaee"/>
   <rect x="846" y="324" width="2" height="3" fill="#7c8088"/>
   <rect x="803" y="458" width="8" height="11" fill="#e8dccb"/>
   <rect x="822" y="506" width="23" height="6" fill="#f4f4f6"/>
   <rect x="1015" y="364" width="20" height="8" fill="#cdd0d6"/>
   <rect x="1021" y="368" width="2" height="3" fill="#7c8088"/>
   <rect x="1029" y="495" width="17" height="10" fill="#dcdde2"/>
   <rect x="1025" y="487" width="9" height="10" fill="#dcdde2"/>
   <rect x="1027" y="489" width="2" height="3" fill="#7c8088"/>
   <rect x="951" y="528" width="25" height="7" fill="#dcdde2"/>
   <rect x="965" y="366" width="25" height="18" fill="#f4f4f6"/>
   <rect x="808" y="260" width="12" height="15" fill="#aab0ba"/>
   <rect x="812" y="262" width="2" height="3" fill="#7c8088"/>
   <rect x="937" y="391" width="13" height="9" fill="#e8dccb"/>
   <rect x="859" y="364" width="18" height="15" fill="#c4b8aa"/>
   <rect x="984" y="410" width="22" height="7" fill="#f4f4f6"/>
   <rect x="1001" y="412" width="2" height="3" fill="#7c8088"/>
   <rect x="921" y="283" width="12" height="5" fill="#eaeaee"/>
   <rect x="927" y="285" width="2" height="3" fill="#7c8088"/>
   <rect x="841" y="391" width="13" height="8" fill="#f4f4f6"/>
   <rect x="851" y="394" width="2" height="3" fill="#7c8088"/>
   <rect x="796" y="302" width="16" height="18" fill="#f4f4f6"/>
   <rect x="920" y="371" width="22" height="10" fill="#f4f4f6"/>
   <rect x="972" y="433" width="12" height="17" fill="#dcccb4"/>
   <rect x="907" y="496" width="20" height="7" fill="#f4f4f6"/>
   <rect x="910" y="498" width="2" height="3" fill="#7c8088"/>
   <rect x="881" y="472" width="12" height="12" fill="#f4f4f6"/>
   <rect x="890" y="474" width="2" height="3" fill="#7c8088"/>
   <rect x="933" y="489" width="22" height="15" fill="#eaeaee"/>
   <rect x="1024" y="477" width="26" height="6" fill="#f0e8dc"/>
   <rect x="987" y="322" width="24" height="5" fill="#eaeaee"/>
   <rect x="996" y="324" width="2" height="3" fill="#7c8088"/>
   <rect x="972" y="489" width="13" height="13" fill="#f4f4f6"/>
   <rect x="982" y="494" width="2" height="3" fill="#7c8088"/>
   <rect x="801" y="347" width="21" height="8" fill="#cdd0d6"/>
   <rect x="979" y="300" width="8" height="7" fill="#f4f4f6"/>
   <rect x="775" y="397" width="14" height="9" fill="#eaeaee"/>
   <rect x="834" y="510" width="12" height="15" fill="#f4f4f6"/>
   <rect x="903" y="535" width="10" height="10" fill="#dcdde2"/>
   <rect x="906" y="540" width="2" height="3" fill="#7c8088"/>
   <rect x="1061" y="343" width="10" height="10" fill="#c4b8aa"/>
   <rect x="1066" y="347" width="2" height="3" fill="#7c8088"/>
   <rect x="968" y="310" width="18" height="17" fill="#dcccb4"/>
   <rect x="926" y="417" width="8" height="16" fill="#dcdde2"/>
   <rect x="975" y="372" width="14" height="8" fill="#dcdde2"/>
   <rect x="929" y="257" width="19" height="11" fill="#eaeaee"/>
   <rect x="1056" y="292" width="15" height="18" fill="#cdd0d6"/>
   <rect x="1066" y="306" width="2" height="3" fill="#7c8088"/>
   <rect x="895" y="506" width="9" height="18" fill="#eaeaee"/>
   <rect x="899" y="516" width="2" height="3" fill="#7c8088"/>
   <rect x="1058" y="495" width="22" height="12" fill="#aab0ba"/>
   <rect x="1075" y="501" width="2" height="3" fill="#7c8088"/>
   <rect x="848" y="488" width="15" height="12" fill="#dcccb4"/>
   <rect x="853" y="494" width="2" height="3" fill="#7c8088"/>
   <rect x="794" y="413" width="22" height="11" fill="#f4f4f6"/>
   <rect x="1033" y="477" width="17" height="17" fill="#e8dccb"/>
   <rect x="1039" y="481" width="2" height="3" fill="#7c8088"/>
   <rect x="783" y="350" width="23" height="16" fill="#f4f4f6"/>
   <rect x="792" y="361" width="2" height="3" fill="#7c8088"/>
   <rect x="960" y="517" width="7" height="18" fill="#f4f4f6"/>
   <rect x="1039" y="465" width="10" height="14" fill="#eaeaee"/>
   <rect x="1042" y="469" width="2" height="3" fill="#7c8088"/>
   <rect x="964" y="330" width="18" height="14" fill="#f4f4f6"/>
   <rect x="975" y="336" width="2" height="3" fill="#7c8088"/>
   <rect x="811" y="282" width="25" height="13" fill="#f4f4f6"/>
   <rect x="833" y="288" width="2" height="3" fill="#7c8088"/>
   <rect x="997" y="355" width="12" height="10" fill="#f4f4f6"/>
   <rect x="902" y="492" width="14" height="11" fill="#eaeaee"/>
   <rect x="878" y="457" width="11" height="13" fill="#f4f4f6"/>
   <rect x="859" y="502" width="20" height="11" fill="#f0e8dc"/>
   <rect x="999" y="427" width="15" height="6" fill="#eaeaee"/>
   <rect x="1005" y="430" width="2" height="3" fill="#7c8088"/>
   <rect x="861" y="455" width="19" height="8" fill="#eaeaee"/>
   <rect x="876" y="457" width="2" height="3" fill="#7c8088"/>
   <rect x="900" y="349" width="22" height="16" fill="#eaeaee"/>
   <rect x="802" y="515" width="8" height="10" fill="#f4f4f6"/>
   <rect x="976" y="350" width="24" height="17" fill="#f4f4f6"/>
   <rect x="915" y="355" width="15" height="9" fill="#dcdde2"/>
   <rect x="1068" y="539" width="26" height="10" fill="#e8dccb"/>
   <rect x="986" y="545" width="7" height="11" fill="#eaeaee"/>
   <rect x="839" y="543" width="10" height="10" fill="#f4f4f6"/>
   <rect x="998" y="272" width="9" height="13" fill="#dcdde2"/>
   <rect x="849" y="490" width="21" height="15" fill="#f4f4f6"/>
   <rect x="777" y="504" width="25" height="17" fill="#f4f4f6"/>
   <rect x="935" y="407" width="8" height="15" fill="#f4f4f6"/>
   <rect x="810" y="417" width="9" height="6" fill="#eaeaee"/>
   <rect x="815" y="419" width="2" height="3" fill="#7c8088"/>
   <rect x="898" y="263" width="10" height="11" fill="#eaeaee"/>
   <rect x="1031" y="278" width="23" height="7" fill="#c4b8aa"/>
   <rect x="896" y="430" width="23" height="18" fill="#eaeaee"/>
   <rect x="900" y="441" width="2" height="3" fill="#7c8088"/>
   <rect x="996" y="460" width="9" height="12" fill="#f4f4f6"/>
   <rect x="999" y="468" width="2" height="3" fill="#7c8088"/>
   <rect x="968" y="500" width="7" height="10" fill="#f4f4f6"/>
   <rect x="969" y="507" width="2" height="3" fill="#7c8088"/>
   <rect x="872" y="393" width="19" height="17" fill="#f0e8dc"/>
   <rect x="925" y="517" width="14" height="9" fill="#cdd0d6"/>
   <rect x="929" y="520" width="2" height="3" fill="#7c8088"/>
   <rect x="917" y="354" width="15" height="11" fill="#f4f4f6"/>
   <rect x="791" y="405" width="17" height="10" fill="#f4f4f6"/>
   <rect x="797" y="408" width="2" height="3" fill="#7c8088"/>
   <rect x="920" y="316" width="21" height="11" fill="#f4f4f6"/>
   <rect x="1067" y="249" width="18" height="17" fill="#f4f4f6"/>
   <rect x="885" y="337" width="18" height="13" fill="#f4f4f6"/>
   <rect x="929" y="472" width="7" height="6" fill="#f4f4f6"/>
   <rect x="933" y="475" width="2" height="3" fill="#7c8088"/>
   <rect x="1034" y="367" width="12" height="14" fill="#f4f4f6"/>
   <rect x="1026" y="345" width="12" height="16" fill="#e8dccb"/>
   <rect x="789" y="475" width="7" height="13" fill="#eaeaee"/>
   <rect x="967" y="254" width="25" height="15" fill="#eaeaee"/>
   <rect x="983" y="259" width="2" height="3" fill="#7c8088"/>
   <rect x="979" y="541" width="24" height="6" fill="#e8dccb"/>
   <rect x="1001" y="360" width="15" height="11" fill="#f4f4f6"/>
   <rect x="1010" y="362" width="2" height="3" fill="#7c8088"/>
   <rect x="807" y="496" width="19" height="12" fill="#f4f4f6"/>
   <rect x="813" y="504" width="2" height="3" fill="#7c8088"/>
   <rect x="943" y="523" width="10" height="10" fill="#eaeaee"/>
   <rect x="810" y="508" width="15" height="5" fill="#eaeaee"/>
   <rect x="978" y="525" width="16" height="14" fill="#f4f4f6"/>
   <rect x="804" y="469" width="9" height="13" fill="#f4f4f6"/>
   <rect x="806" y="473" width="2" height="3" fill="#7c8088"/>
   <rect x="952" y="402" width="14" height="12" fill="#dcccb4"/>
   <rect x="950" y="391" width="26" height="9" fill="#dcdde2"/>
   <rect x="957" y="395" width="2" height="3" fill="#7c8088"/>
   <rect x="947" y="324" width="7" height="16" fill="#f4f4f6"/>
   <rect x="904" y="432" width="17" height="18" fill="#f0e8dc"/>
   <rect x="920" y="316" width="21" height="6" fill="#f4f4f6"/>
   <rect x="783" y="456" width="17" height="12" fill="#f4f4f6"/>
   <rect x="796" y="463" width="2" height="3" fill="#7c8088"/>
   <rect x="1018" y="276" width="22" height="8" fill="#f4f4f6"/>
   <rect x="958" y="283" width="21" height="13" fill="#f0e8dc"/>
   <rect x="982" y="356" width="25" height="14" fill="#f4f4f6"/>
   <rect x="994" y="326" width="11" height="5" fill="#eaeaee"/>
   <rect x="997" y="328" width="2" height="3" fill="#7c8088"/>
   <rect x="812" y="392" width="11" height="9" fill="#f4f4f6"/>
   <rect x="1039" y="295" width="23" height="16" fill="#dcdde2"/>
   <rect x="996" y="407" width="19" height="17" fill="#e8dccb"/>
   <rect x="998" y="419" width="2" height="3" fill="#7c8088"/>
   <rect x="883" y="482" width="11" height="11" fill="#f4f4f6"/>
   <rect x="1060" y="398" width="17" height="10" fill="#f4f4f6"/>
   <rect x="806" y="528" width="19" height="6" fill="#f0e8dc"/>
   <rect x="815" y="530" width="2" height="3" fill="#7c8088"/>
   <rect x="1074" y="339" width="23" height="6" fill="#dcdde2"/>
   <rect x="1075" y="342" width="2" height="3" fill="#7c8088"/>
   <rect x="1072" y="452" width="23" height="15" fill="#eaeaee"/>
   <rect x="1083" y="456" width="2" height="3" fill="#7c8088"/>
   <rect x="933" y="353" width="16" height="8" fill="#dcdde2"/>
   <rect x="920" y="271" width="16" height="12" fill="#c4b8aa"/>
   <rect x="813" y="337" width="13" height="14" fill="#f0e8dc"/>
   <rect x="1062" y="524" width="23" height="17" fill="#f4f4f6"/>
   <rect x="952" y="452" width="18" height="13" fill="#f0e8dc"/>
   <rect x="961" y="461" width="2" height="3" fill="#7c8088"/>
   <rect x="782" y="280" width="23" height="17" fill="#f4f4f6"/>
   <rect x="799" y="290" width="2" height="3" fill="#7c8088"/>
   <rect x="931" y="420" width="21" height="16" fill="#f4f4f6"/>
   <rect x="945" y="432" width="2" height="3" fill="#7c8088"/>
   <rect x="1026" y="369" width="13" height="10" fill="#f4f4f6"/>
   <rect x="852" y="422" width="17" height="9" fill="#dcdde2"/>
   <rect x="843" y="511" width="10" height="7" fill="#f4f4f6"/>
   <rect x="1011" y="347" width="11" height="14" fill="#f4f4f6"/>
   <rect x="850" y="509" width="10" height="8" fill="#f4f4f6"/>
   <rect x="855" y="513" width="2" height="3" fill="#7c8088"/>
   <rect x="1013" y="408" width="8" height="15" fill="#f4f4f6"/>
   <rect x="1016" y="419" width="2" height="3" fill="#7c8088"/>
  </g>
  <rect x="878" y="248" width="60" height="14" fill="#e2ceb4"/><rect x="940" y="252" width="50" height="12" fill="#eadfd2"/>
  <rect x="1040" y="246" width="37" height="44" fill="#dcc4a8"/><rect x="1046" y="256" width="4" height="6" fill="#8a7a68"/><rect x="1060" y="256" width="4" height="6" fill="#8a7a68"/>
  <rect x="850" y="318" width="75" height="40" fill="#dcc8a8"/><rect x="895" y="322" width="45" height="12" fill="#c88676"/><rect x="870" y="336" width="4" height="6" fill="#6a6e78"/>
  <rect x="935" y="312" width="32" height="45" fill="#f3f3f5"/><rect x="945" y="320" width="3" height="8" fill="#8890a0"/><rect x="953" y="320" width="3" height="8" fill="#8890a0"/>
  <rect x="800" y="372" width="45" height="20" fill="#f3f3f5"/><rect x="860" y="370" width="40" height="28" fill="#f4f4f6"/>
  <rect x="822" y="425" width="35" height="45" fill="#ddd4c4"/><rect x="800" y="481" width="30" height="22" fill="#e2e5ec"/><rect x="836" y="400" width="34" height="40" fill="#f2f2f4"/>
  <path d="M788 342 A12 8 0 0 1 812 342 Z" fill="#4a7ac8"/>
  <path d="M816 366 A13 9 0 0 1 842 366 Z" fill="#4a7ac8"/>
  <path d="M802 350 A6 4 0 0 1 814 350 Z" fill="#4a7ac8"/>
  <path d="M790 400 A5 4 0 0 1 800 400 Z" fill="#4a7ac8"/>
  <path d="M1000 418 L1077 412 L1077 546 L1016 546 L1027 436 Z" fill="#dcd8d2"/>
  <path d="M1040 440 Q1060 430 1077 450 L1077 520 Q1055 500 1040 470 Z" fill="#cfcac3"/>
  <rect x="967" y="360" width="106" height="62" fill="#f3f4f7"/><rect x="967" y="400" width="106" height="22" fill="#e4e6ea"/>
  <circle cx="1017.5" cy="368" r="47" fill="#4274c6" clip-path="url(#dc1)"/>
  <rect x="965" y="358" width="110" height="4" fill="#eef0f4"/>
  <rect x="980" y="373" width="11" height="31" rx="5.5" fill="#f8f8fa"/><rect x="982.5" y="378" width="6" height="25" fill="#5678b0"/>
  <rect x="1016" y="373" width="13" height="31" rx="6.5" fill="#f8f8fa"/><rect x="1018.5" y="378" width="9" height="25" fill="#4e70a8"/>
  <rect x="1052" y="373" width="10" height="31" rx="5" fill="#f8f8fa"/><rect x="1054.5" y="378" width="5" height="25" fill="#5678b0"/>
  <rect x="818" y="324" width="20" height="26" rx="6" fill="#a8a290"/><rect x="872" y="326" width="28" height="34" fill="#e4d0a8"/>
  <rect x="944" y="500" width="76" height="46" fill="#f2f3f5"/><rect x="1000" y="505" width="16" height="41" fill="#e6e6ea"/>
  <path d="M947 501 Q942 458 972 440 Q992 429 1027.5 434 L1016 501 Z" fill="#3f73ca"/>
  <path d="M960 470 Q975 455 990 465 Q980 480 965 478 Z" fill="#5a88d4" opacity="0.6"/>
  <rect x="956" y="489" width="2" height="57" fill="#4a4a4a"/>
  <rect x="886" y="494" width="60" height="52" fill="#f0f0f2"/><rect x="886" y="494" width="5" height="52" fill="#dcdce0"/>
  <rect x="907" y="505" width="14" height="41" rx="6" fill="#d8b4a0"/>
  <rect x="900" y="494" width="2" height="52" fill="#6a5a50"/><rect x="927" y="494" width="2" height="52" fill="#6a5a50"/>
  <path d="M884 487 L948 487 L946 495 L886 495 Z" fill="#3f70c4"/>
  <path d="M890 488 Q892 465 915 464 Q939 465 941 488 L935 488 Q933 472 915 471 Q897 472 896 488 Z" fill="#4678cc"/>
  <path d="M907 488 Q906 462 915 456 Q924 462 923 488 Z" fill="#3f6ec4"/>
    <path d="M589 186 Q600 160 625 148 Q650 140 680 148 Q708 160 715 183 L720 195 L775 195 L775 420 L589 420 Z" fill="#e6e9ef"/>
    <path d="M589 185 Q600 160 625 148 Q650 140 672 144" fill="none" stroke="#d2cab8" stroke-width="2.5"/>
    <path d="M717 190 Q720 170 735 156 Q748 147 763 149 Q756 162 753 194 Z" fill="#bab5ab"/>
    <path d="M717 190 Q720 170 735 156 Q741 152 746 151 Q728 165 724 192 Z" fill="#d8d0c0"/>
    <path d="M622 420 L622 225 Q622 188 643 187 Q662 188 669 245 L669 420 Z" fill="#c6d3ea"/>
    <path d="M643 187 Q662 188 669 245 L669 262 L690 262 Q690 215 672 196 Q660 186 643 187 Z" fill="#f6f7f9"/>
    <rect x="670" y="260" width="18" height="162" fill="#f4f5f8"/>
    <rect x="622" y="237" width="58" height="3.5" fill="#a89a86"/>
    <path d="M630 266 Q631 250 636 246 L636 242 L649 242 L649 246 Q654 250 655 266 Z" fill="#3e5048"/>
    <ellipse cx="642" cy="239" rx="5" ry="5" fill="#7a7060"/>
    <rect x="640" y="97.5" width="11" height="45" fill="#b6b2aa"/>
    <rect x="615" y="113" width="60" height="15" fill="#b6b2aa"/>
    <rect x="597" y="247" width="20" height="180" fill="#a8a298"/>
    <rect x="687" y="247" width="24" height="176" fill="#b0aaa0"/>
    <rect x="753" y="247" width="16" height="176" fill="#a6a096"/><rect x="755" y="247" width="21" height="16" fill="#a6a096"/>
    <rect x="617" y="312" width="53" height="104" fill="#e4dcd0"/>
    <rect x="617" y="312" width="53" height="12" fill="#405070"/>
    <rect x="617" y="324" width="53" height="8" fill="#8a8e90"/>
    <rect x="622" y="334" width="26" height="28" fill="#d8a070"/>
    <rect x="648" y="330" width="22" height="35" fill="#f0eeec"/>
    <rect x="620" y="368" width="40" height="24" fill="#dccab4"/>
    <rect x="617" y="392" width="53" height="24" fill="#e8e0d4"/>
    <rect x="589" y="415" width="215" height="15" fill="#f2f3f6"/>
    <rect x="589" y="429" width="211" height="52" fill="#e4e6ec"/>
    <path d="M589 457 Q700 452 790 488 Q850 512 910 546 L589 546 Z" fill="#f4f5f8"/>
    <path d="M589 457 Q700 452 790 488 Q850 512 910 546" fill="none" stroke="#d8dce4" stroke-width="2"/>
  </svg>
</div><div class="a" style="left:99px;top:0;width:488px;height:485px;transform-origin:0 0;transform:scale(0.2029,0.1072);overflow:hidden;background:linear-gradient(180deg,#c2cfe4 0%,#c9d4e6 40%,#d6dde9 60%)">
  <svg class="a" style="left:0;top:0" width="488" height="200" viewBox="589 61 488 200">
    <defs><filter id="bl" x="-30%" y="-30%" width="160%" height="160%"><feGaussianBlur stdDeviation="6"/></filter>
    <filter id="bl2" x="-30%" y="-30%" width="160%" height="160%"><feGaussianBlur stdDeviation="2.5"/></filter></defs>
    <rect x="589" y="61" width="488" height="200" fill="#bac5d9"/>
    <g filter="url(#bl)">
      <rect x="830" y="30" width="280" height="62" fill="#a3c0e8"/>
      <rect x="1000" y="80" width="100" height="36" fill="#a6c2e8"/>
      <ellipse cx="720" cy="150" rx="110" ry="22" fill="#b2bcd0"/>
      <ellipse cx="620" cy="150" rx="40" ry="14" fill="#d8dde6"/>
      <ellipse cx="940" cy="160" rx="160" ry="14" fill="#bcc6d8"/>
      <rect x="760" y="175" width="330" height="35" fill="#b7c3d7"/>
      <ellipse cx="1045" cy="190" rx="40" ry="12" fill="#aec5e6"/>
      <ellipse cx="940" cy="198" rx="110" ry="8" fill="#d2d9e6"/>
      <ellipse cx="930" cy="238" rx="170" ry="16" fill="#d6dce6"/>
      <ellipse cx="700" cy="238" rx="80" ry="14" fill="#cad3e2"/>
    </g>
    <g filter="url(#bl2)">
      <path d="M570 50 H800 Q830 60 826 90 Q815 110 790 112 Q770 135 730 130 Q700 140 660 128 Q630 135 600 125 L570 125 Z" fill="#dfe3ea"/>
      <path d="M600 60 H780 Q800 70 790 90 Q740 100 700 95 Q650 100 610 92 Z" fill="#e8ebf0"/>
      <path d="M790 120 Q800 98 830 100 Q845 85 875 92 Q895 80 915 88 Q945 82 965 92 Q990 86 1010 100 Q1040 96 1060 110 L1090 110 L1090 165 Q1000 172 930 168 Q860 172 800 160 Q785 140 790 120 Z" fill="#e6e9ef"/>
      <path d="M810 118 Q830 100 860 104 Q880 92 910 100 Q950 92 990 104 Q1020 106 1040 118 Q980 130 900 128 Q840 130 810 118 Z" fill="#f2f4f7"/>
      <ellipse cx="1040" cy="150" rx="40" ry="10" fill="#e4e8ee"/>
    </g>
  </svg>
  <svg class="a" style="left:0;top:0" width="488" height="485" viewBox="589 61 488 485">
  <defs><clipPath id="dc1"><rect x="960" y="300" width="120" height="61"/></clipPath><clipPath id="dc2"><rect x="930" y="420" width="110" height="81.5"/></clipPath><filter id="tb"><feGaussianBlur stdDeviation="0.6"/></filter></defs>
  <path d="M775 252 L860 250 L880 246 L1000 248 L1040 246 L1077 244 L1077 546 L775 546 Z" fill="#e9e8ea"/>
  <g filter="url(#tb)">
   <rect x="910" y="414" width="24" height="11" fill="#eaeaee"/>
   <rect x="828" y="400" width="19" height="15" fill="#f4f4f6"/>
   <rect x="831" y="410" width="2" height="3" fill="#7c8088"/>
   <rect x="983" y="260" width="26" height="18" fill="#dcdde2"/>
   <rect x="820" y="251" width="17" height="6" fill="#f4f4f6"/>
   <rect x="821" y="254" width="2" height="3" fill="#7c8088"/>
   <rect x="906" y="499" width="16" height="13" fill="#eaeaee"/>
   <rect x="911" y="330" width="26" height="18" fill="#dcccb4"/>
   <rect x="868" y="316" width="12" height="6" fill="#e8dccb"/>
   <rect x="1030" y="363" width="25" height="16" fill="#f4f4f6"/>
   <rect x="1050" y="369" width="2" height="3" fill="#7c8088"/>
   <rect x="1071" y="366" width="7" height="13" fill="#e8dccb"/>
   <rect x="1072" y="370" width="2" height="3" fill="#7c8088"/>
   <rect x="1066" y="474" width="8" height="8" fill="#f4f4f6"/>
   <rect x="1071" y="476" width="2" height="3" fill="#7c8088"/>
   <rect x="943" y="381" width="10" height="15" fill="#f4f4f6"/>
   <rect x="808" y="373" width="10" height="9" fill="#c4b8aa"/>
   <rect x="865" y="512" width="10" height="10" fill="#dcccb4"/>
   <rect x="803" y="543" width="10" height="8" fill="#e8dccb"/>
   <rect x="805" y="545" width="2" height="3" fill="#7c8088"/>
   <rect x="799" y="421" width="11" height="13" fill="#f4f4f6"/>
   <rect x="1065" y="392" width="17" height="16" fill="#f4f4f6"/>
   <rect x="1078" y="402" width="2" height="3" fill="#7c8088"/>
   <rect x="848" y="304" width="21" height="17" fill="#f4f4f6"/>
   <rect x="1041" y="427" width="14" height="6" fill="#f4f4f6"/>
   <rect x="845" y="458" width="11" height="16" fill="#dcdde2"/>
   <rect x="847" y="467" width="2" height="3" fill="#7c8088"/>
   <rect x="793" y="315" width="17" height="16" fill="#dcdde2"/>
   <rect x="806" y="319" width="2" height="3" fill="#7c8088"/>
   <rect x="777" y="327" width="15" height="6" fill="#f4f4f6"/>
   <rect x="947" y="286" width="13" height="17" fill="#c4b8aa"/>
   <rect x="983" y="422" width="9" height="5" fill="#f4f4f6"/>
   <rect x="986" y="535" width="6" height="13" fill="#eaeaee"/>
   <rect x="869" y="546" width="8" height="12" fill="#cdd0d6"/>
   <rect x="997" y="457" width="22" height="17" fill="#f4f4f6"/>
   <rect x="1047" y="507" width="14" height="15" fill="#dcccb4"/>
   <rect x="963" y="361" width="18" height="13" fill="#f4f4f6"/>
   <rect x="1075" y="510" width="21" height="10" fill="#cdd0d6"/>
   <rect x="906" y="498" width="8" height="15" fill="#f4f4f6"/>
   <rect x="919" y="316" width="20" height="11" fill="#dcdde2"/>
   <rect x="850" y="250" width="12" height="14" fill="#f4f4f6"/>
   <rect x="858" y="258" width="2" height="3" fill="#7c8088"/>
   <rect x="907" y="514" width="13" height="14" fill="#f4f4f6"/>
   <rect x="1018" y="520" width="24" height="10" fill="#eaeaee"/>
   <rect x="1021" y="524" width="2" height="3" fill="#7c8088"/>
   <rect x="1027" y="501" width="20" height="17" fill="#f4f4f6"/>
   <rect x="1036" y="506" width="2" height="3" fill="#7c8088"/>
   <rect x="837" y="371" width="19" height="11" fill="#f4f4f6"/>
   <rect x="1072" y="382" width="7" height="5" fill="#f0e8dc"/>
   <rect x="1075" y="385" width="2" height="3" fill="#7c8088"/>
   <rect x="866" y="484" width="6" height="7" fill="#eaeaee"/>
   <rect x="869" y="486" width="2" height="3" fill="#7c8088"/>
   <rect x="815" y="261" width="19" height="11" fill="#dcdde2"/>
   <rect x="1018" y="534" width="20" height="8" fill="#eaeaee"/>
   <rect x="1019" y="536" width="2" height="3" fill="#7c8088"/>
   <rect x="990" y="301" width="11" height="9" fill="#dcdde2"/>
   <rect x="959" y="473" width="14" height="15" fill="#f0e8dc"/>
   <rect x="970" y="482" width="2" height="3" fill="#7c8088"/>
   <rect x="812" y="383" width="19" height="17" fill="#f4f4f6"/>
   <rect x="1040" y="485" width="25" height="11" fill="#dcdde2"/>
   <rect x="1056" y="491" width="2" height="3" fill="#7c8088"/>
   <rect x="968" y="462" width="10" height="17" fill="#c4b8aa"/>
   <rect x="936" y="483" width="12" height="17" fill="#dcccb4"/>
   <rect x="937" y="490" width="2" height="3" fill="#7c8088"/>
   <rect x="940" y="477" width="16" height="5" fill="#e8dccb"/>
   <rect x="950" y="479" width="2" height="3" fill="#7c8088"/>
   <rect x="874" y="483" width="9" height="7" fill="#eaeaee"/>
   <rect x="1028" y="453" width="25" height="11" fill="#f0e8dc"/>
   <rect x="1034" y="458" width="2" height="3" fill="#7c8088"/>
   <rect x="861" y="465" width="19" height="12" fill="#dcccb4"/>
   <rect x="867" y="361" width="23" height="17" fill="#f4f4f6"/>
   <rect x="1067" y="404" width="17" height="8" fill="#eaeaee"/>
   <rect x="957" y="255" width="25" height="12" fill="#eaeaee"/>
   <rect x="944" y="394" width="20" height="6" fill="#eaeaee"/>
   <rect x="1064" y="523" width="11" height="11" fill="#f4f4f6"/>
   <rect x="1021" y="516" width="16" height="9" fill="#f4f4f6"/>
   <rect x="1054" y="286" width="22" height="5" fill="#f4f4f6"/>
   <rect x="1067" y="288" width="2" height="3" fill="#7c8088"/>
   <rect x="880" y="432" width="8" height="15" fill="#f4f4f6"/>
   <rect x="848" y="306" width="17" height="11" fill="#f4f4f6"/>
   <rect x="933" y="295" width="10" height="13" fill="#dcdde2"/>
   <rect x="1032" y="430" width="23" height="8" fill="#cdd0d6"/>
   <rect x="1047" y="341" width="12" height="17" fill="#f4f4f6"/>
   <rect x="1043" y="287" width="11" height="14" fill="#f4f4f6"/>
   <rect x="1049" y="293" width="2" height="3" fill="#7c8088"/>
   <rect x="1013" y="285" width="14" height="14" fill="#f4f4f6"/>
   <rect x="1021" y="294" width="2" height="3" fill="#7c8088"/>
   <rect x="1067" y="282" width="16" height="15" fill="#eaeaee"/>
   <rect x="830" y="268" width="8" height="5" fill="#eaeaee"/>
   <rect x="945" y="291" width="10" height="8" fill="#dcccb4"/>
   <rect x="1055" y="275" width="7" height="17" fill="#eaeaee"/>
   <rect x="872" y="387" width="16" height="11" fill="#dcdde2"/>
   <rect x="881" y="392" width="2" height="3" fill="#7c8088"/>
   <rect x="827" y="383" width="21" height="10" fill="#f4f4f6"/>
   <rect x="837" y="385" width="2" height="3" fill="#7c8088"/>
   <rect x="1044" y="487" width="20" height="16" fill="#dcdde2"/>
   <rect x="955" y="398" width="26" height="15" fill="#f4f4f6"/>
   <rect x="999" y="480" width="22" height="10" fill="#f0e8dc"/>
   <rect x="984" y="476" width="21" height="10" fill="#cdd0d6"/>
   <rect x="991" y="480" width="2" height="3" fill="#7c8088"/>
   <rect x="775" y="353" width="19" height="13" fill="#f4f4f6"/>
   <rect x="975" y="348" width="19" height="12" fill="#eaeaee"/>
   <rect x="1077" y="439" width="20" height="15" fill="#c4b8aa"/>
   <rect x="1088" y="448" width="2" height="3" fill="#7c8088"/>
   <rect x="850" y="367" width="7" height="8" fill="#f4f4f6"/>
   <rect x="852" y="370" width="2" height="3" fill="#7c8088"/>
   <rect x="940" y="399" width="25" height="12" fill="#aab0ba"/>
   <rect x="1019" y="270" width="18" height="15" fill="#f4f4f6"/>
   <rect x="821" y="388" width="9" height="11" fill="#dcdde2"/>
   <rect x="827" y="392" width="2" height="3" fill="#7c8088"/>
   <rect x="933" y="426" width="13" height="9" fill="#dcdde2"/>
   <rect x="858" y="461" width="12" height="5" fill="#f4f4f6"/>
   <rect x="861" y="464" width="2" height="3" fill="#7c8088"/>
   <rect x="891" y="515" width="21" height="6" fill="#c4b8aa"/>
   <rect x="794" y="518" width="15" height="11" fill="#c4b8aa"/>
   <rect x="801" y="525" width="2" height="3" fill="#7c8088"/>
   <rect x="992" y="387" width="26" height="16" fill="#dcdde2"/>
   <rect x="1007" y="393" width="2" height="3" fill="#7c8088"/>
   <rect x="834" y="263" width="17" height="7" fill="#eaeaee"/>
   <rect x="911" y="325" width="18" height="10" fill="#e8dccb"/>
   <rect x="1076" y="532" width="21" height="8" fill="#f4f4f6"/>
   <rect x="1011" y="434" width="13" height="9" fill="#dcdde2"/>
   <rect x="952" y="436" width="21" height="7" fill="#f4f4f6"/>
   <rect x="1051" y="510" width="7" height="6" fill="#f4f4f6"/>
   <rect x="962" y="278" width="17" height="6" fill="#f4f4f6"/>
   <rect x="940" y="436" width="13" height="11" fill="#f4f4f6"/>
   <rect x="948" y="442" width="2" height="3" fill="#7c8088"/>
   <rect x="795" y="283" width="22" height="13" fill="#e8dccb"/>
   <rect x="803" y="287" width="2" height="3" fill="#7c8088"/>
   <rect x="1019" y="357" width="19" height="18" fill="#f4f4f6"/>
   <rect x="1000" y="522" width="15" height="10" fill="#f4f4f6"/>
   <rect x="796" y="272" width="17" height="11" fill="#dcdde2"/>
   <rect x="807" y="274" width="2" height="3" fill="#7c8088"/>
   <rect x="837" y="445" width="8" height="9" fill="#cdd0d6"/>
   <rect x="858" y="290" width="13" height="14" fill="#f4f4f6"/>
   <rect x="866" y="297" width="2" height="3" fill="#7c8088"/>
   <rect x="1052" y="528" width="24" height="11" fill="#e8dccb"/>
   <rect x="1060" y="532" width="2" height="3" fill="#7c8088"/>
   <rect x="1057" y="515" width="11" height="10" fill="#f4f4f6"/>
   <rect x="893" y="363" width="10" height="12" fill="#e8dccb"/>
   <rect x="1027" y="415" width="10" height="15" fill="#f0e8dc"/>
   <rect x="1028" y="422" width="2" height="3" fill="#7c8088"/>
   <rect x="938" y="417" width="25" height="13" fill="#e8dccb"/>
   <rect x="951" y="425" width="2" height="3" fill="#7c8088"/>
   <rect x="798" y="271" width="21" height="17" fill="#f4f4f6"/>
   <rect x="816" y="470" width="19" height="8" fill="#f4f4f6"/>
   <rect x="931" y="476" width="14" height="9" fill="#d8bca8"/>
   <rect x="923" y="408" width="20" height="14" fill="#f0e8dc"/>
   <rect x="1024" y="446" width="23" height="15" fill="#dcccb4"/>
   <rect x="1064" y="438" width="16" height="14" fill="#e8dccb"/>
   <rect x="900" y="291" width="21" height="18" fill="#f4f4f6"/>
   <rect x="905" y="298" width="2" height="3" fill="#7c8088"/>
   <rect x="861" y="537" width="7" height="9" fill="#f4f4f6"/>
   <rect x="1009" y="301" width="7" height="11" fill="#eaeaee"/>
   <rect x="783" y="279" width="10" height="8" fill="#f4f4f6"/>
   <rect x="953" y="314" width="10" height="9" fill="#f4f4f6"/>
   <rect x="867" y="411" width="22" height="11" fill="#f4f4f6"/>
   <rect x="1051" y="349" width="17" height="17" fill="#eaeaee"/>
   <rect x="1052" y="362" width="2" height="3" fill="#7c8088"/>
   <rect x="1016" y="362" width="17" height="12" fill="#f4f4f6"/>
   <rect x="973" y="318" width="6" height="11" fill="#f4f4f6"/>
   <rect x="990" y="428" width="9" height="7" fill="#f4f4f6"/>
   <rect x="995" y="431" width="2" height="3" fill="#7c8088"/>
   <rect x="966" y="544" width="11" height="12" fill="#f4f4f6"/>
   <rect x="772" y="493" width="23" height="16" fill="#f4f4f6"/>
   <rect x="787" y="496" width="2" height="3" fill="#7c8088"/>
   <rect x="918" y="387" width="25" height="13" fill="#dcccb4"/>
   <rect x="936" y="392" width="2" height="3" fill="#7c8088"/>
   <rect x="1052" y="274" width="23" height="8" fill="#eaeaee"/>
   <rect x="820" y="496" width="12" height="9" fill="#f4f4f6"/>
   <rect x="825" y="500" width="2" height="3" fill="#7c8088"/>
   <rect x="882" y="452" width="8" height="10" fill="#eaeaee"/>
   <rect x="1025" y="443" width="6" height="10" fill="#dcdde2"/>
   <rect x="1027" y="446" width="2" height="3" fill="#7c8088"/>
   <rect x="775" y="543" width="22" height="8" fill="#dcdde2"/>
   <rect x="783" y="546" width="2" height="3" fill="#7c8088"/>
   <rect x="863" y="348" width="14" height="14" fill="#f4f4f6"/>
   <rect x="871" y="352" width="2" height="3" fill="#7c8088"/>
   <rect x="1060" y="415" width="20" height="9" fill="#e8dccb"/>
   <rect x="1064" y="418" width="2" height="3" fill="#7c8088"/>
   <rect x="979" y="459" width="10" height="10" fill="#dcccb4"/>
   <rect x="799" y="315" width="9" height="7" fill="#eaeaee"/>
   <rect x="805" y="317" width="2" height="3" fill="#7c8088"/>
   <rect x="928" y="441" width="21" height="16" fill="#f4f4f6"/>
   <rect x="936" y="443" width="2" height="3" fill="#7c8088"/>
   <rect x="894" y="456" width="26" height="15" fill="#dcdde2"/>
   <rect x="778" y="346" width="13" height="13" fill="#f4f4f6"/>
   <rect x="927" y="483" width="23" height="13" fill="#f4f4f6"/>
   <rect x="1047" y="411" width="13" height="12" fill="#f4f4f6"/>
   <rect x="1073" y="401" width="20" height="16" fill="#f4f4f6"/>
   <rect x="963" y="306" width="8" height="8" fill="#eaeaee"/>
   <rect x="872" y="525" width="13" height="11" fill="#f4f4f6"/>
   <rect x="813" y="517" width="17" height="12" fill="#eaeaee"/>
   <rect x="826" y="526" width="2" height="3" fill="#7c8088"/>
   <rect x="1021" y="427" width="8" height="16" fill="#f4f4f6"/>
   <rect x="845" y="419" width="23" height="7" fill="#eaeaee"/>
   <rect x="847" y="421" width="2" height="3" fill="#7c8088"/>
   <rect x="1073" y="528" width="19" height="9" fill="#dcdde2"/>
   <rect x="888" y="424" width="22" height="5" fill="#f4f4f6"/>
   <rect x="816" y="363" width="17" height="7" fill="#eaeaee"/>
   <rect x="824" y="365" width="2" height="3" fill="#7c8088"/>
   <rect x="968" y="258" width="19" height="7" fill="#d8bca8"/>
   <rect x="915" y="370" width="18" height="14" fill="#cdd0d6"/>
   <rect x="920" y="544" width="23" height="16" fill="#eaeaee"/>
   <rect x="945" y="518" width="17" height="12" fill="#eaeaee"/>
   <rect x="870" y="263" width="21" height="17" fill="#cdd0d6"/>
   <rect x="1001" y="338" width="18" height="6" fill="#f4f4f6"/>
   <rect x="925" y="366" width="7" height="14" fill="#eaeaee"/>
   <rect x="927" y="371" width="2" height="3" fill="#7c8088"/>
   <rect x="844" y="267" width="24" height="18" fill="#dcdde2"/>
   <rect x="901" y="488" width="10" height="15" fill="#eaeaee"/>
   <rect x="802" y="484" width="8" height="12" fill="#d8bca8"/>
   <rect x="804" y="488" width="2" height="3" fill="#7c8088"/>
   <rect x="871" y="266" width="24" height="16" fill="#eaeaee"/>
   <rect x="951" y="261" width="7" height="17" fill="#f4f4f6"/>
   <rect x="1057" y="539" width="15" height="8" fill="#f4f4f6"/>
   <rect x="1046" y="305" width="23" height="10" fill="#eaeaee"/>
   <rect x="1063" y="311" width="2" height="3" fill="#7c8088"/>
   <rect x="834" y="436" width="10" height="16" fill="#f4f4f6"/>
   <rect x="839" y="441" width="2" height="3" fill="#7c8088"/>
   <rect x="1047" y="507" width="20" height="7" fill="#dcdde2"/>
   <rect x="908" y="271" width="10" height="9" fill="#dcdde2"/>
   <rect x="910" y="273" width="2" height="3" fill="#7c8088"/>
   <rect x="975" y="483" width="13" height="14" fill="#f0e8dc"/>
   <rect x="842" y="337" width="25" height="14" fill="#f4f4f6"/>
   <rect x="799" y="541" width="15" height="12" fill="#eaeaee"/>
   <rect x="807" y="545" width="2" height="3" fill="#7c8088"/>
   <rect x="849" y="487" width="8" height="9" fill="#cdd0d6"/>
   <rect x="851" y="491" width="2" height="3" fill="#7c8088"/>
   <rect x="829" y="515" width="26" height="5" fill="#eaeaee"/>
   <rect x="889" y="525" width="16" height="7" fill="#eaeaee"/>
   <rect x="882" y="444" width="22" height="12" fill="#eaeaee"/>
   <rect x="981" y="403" width="25" height="7" fill="#e8dccb"/>
   <rect x="994" y="405" width="2" height="3" fill="#7c8088"/>
   <rect x="906" y="478" width="22" height="15" fill="#f4f4f6"/>
   <rect x="839" y="420" width="16" height="5" fill="#dcdde2"/>
   <rect x="947" y="508" width="10" height="7" fill="#f4f4f6"/>
   <rect x="905" y="379" width="11" height="15" fill="#f4f4f6"/>
   <rect x="946" y="409" width="22" height="8" fill="#f4f4f6"/>
   <rect x="947" y="412" width="2" height="3" fill="#7c8088"/>
   <rect x="961" y="404" width="11" height="13" fill="#f4f4f6"/>
   <rect x="824" y="323" width="9" height="14" fill="#e8dccb"/>
   <rect x="791" y="370" width="13" height="8" fill="#c4b8aa"/>
   <rect x="796" y="373" width="2" height="3" fill="#7c8088"/>
   <rect x="1073" y="290" width="15" height="15" fill="#f4f4f6"/>
   <rect x="1084" y="293" width="2" height="3" fill="#7c8088"/>
   <rect x="892" y="336" width="14" height="6" fill="#f4f4f6"/>
   <rect x="1005" y="466" width="11" height="8" fill="#eaeaee"/>
   <rect x="1009" y="471" width="2" height="3" fill="#7c8088"/>
   <rect x="883" y="348" width="26" height="13" fill="#f4f4f6"/>
   <rect x="970" y="264" width="13" height="14" fill="#dcccb4"/>
   <rect x="1042" y="385" width="14" height="16" fill="#f4f4f6"/>
   <rect x="838" y="351" width="10" height="12" fill="#f4f4f6"/>
   <rect x="840" y="356" width="2" height="3" fill="#7c8088"/>
   <rect x="866" y="381" width="26" height="14" fill="#dcccb4"/>
   <rect x="875" y="383" width="2" height="3" fill="#7c8088"/>
   <rect x="983" y="355" width="11" height="5" fill="#f4f4f6"/>
   <rect x="987" y="358" width="2" height="3" fill="#7c8088"/>
   <rect x="990" y="327" width="13" height="7" fill="#f0e8dc"/>
   <rect x="1006" y="463" width="24" height="5" fill="#f4f4f6"/>
   <rect x="797" y="511" width="13" height="15" fill="#eaeaee"/>
   <rect x="802" y="515" width="2" height="3" fill="#7c8088"/>
   <rect x="784" y="292" width="18" height="5" fill="#f4f4f6"/>
   <rect x="938" y="288" width="20" height="8" fill="#cdd0d6"/>
   <rect x="817" y="308" width="12" height="14" fill="#eaeaee"/>
   <rect x="1036" y="315" width="12" height="9" fill="#f4f4f6"/>
   <rect x="1037" y="319" width="2" height="3" fill="#7c8088"/>
   <rect x="945" y="489" width="26" height="9" fill="#dcdde2"/>
   <rect x="838" y="453" width="19" height="17" fill="#dcccb4"/>
   <rect x="849" y="456" width="2" height="3" fill="#7c8088"/>
   <rect x="902" y="364" width="7" height="10" fill="#f4f4f6"/>
   <rect x="857" y="294" width="14" height="11" fill="#f4f4f6"/>
   <rect x="845" y="275" width="13" height="10" fill="#f4f4f6"/>
   <rect x="986" y="412" width="20" height="5" fill="#f4f4f6"/>
   <rect x="791" y="368" width="7" height="11" fill="#eaeaee"/>
   <rect x="871" y="323" width="6" height="10" fill="#f0e8dc"/>
   <rect x="852" y="447" width="10" height="11" fill="#dcdde2"/>
   <rect x="883" y="419" width="25" height="15" fill="#dcdde2"/>
   <rect x="897" y="371" width="12" height="16" fill="#f0e8dc"/>
   <rect x="1049" y="258" width="9" height="12" fill="#f4f4f6"/>
   <rect x="1070" y="292" width="10" height="8" fill="#dcdde2"/>
   <rect x="1071" y="295" width="2" height="3" fill="#7c8088"/>
   <rect x="892" y="319" width="16" height="13" fill="#eaeaee"/>
   <rect x="943" y="495" width="25" height="9" fill="#f4f4f6"/>
   <rect x="868" y="461" width="20" height="14" fill="#d8bca8"/>
   <rect x="821" y="433" width="16" height="12" fill="#f4f4f6"/>
   <rect x="830" y="438" width="2" height="3" fill="#7c8088"/>
   <rect x="844" y="322" width="12" height="7" fill="#eaeaee"/>
   <rect x="846" y="324" width="2" height="3" fill="#7c8088"/>
   <rect x="803" y="458" width="8" height="11" fill="#e8dccb"/>
   <rect x="822" y="506" width="23" height="6" fill="#f4f4f6"/>
   <rect x="1015" y="364" width="20" height="8" fill="#cdd0d6"/>
   <rect x="1021" y="368" width="2" height="3" fill="#7c8088"/>
   <rect x="1029" y="495" width="17" height="10" fill="#dcdde2"/>
   <rect x="1025" y="487" width="9" height="10" fill="#dcdde2"/>
   <rect x="1027" y="489" width="2" height="3" fill="#7c8088"/>
   <rect x="951" y="528" width="25" height="7" fill="#dcdde2"/>
   <rect x="965" y="366" width="25" height="18" fill="#f4f4f6"/>
   <rect x="808" y="260" width="12" height="15" fill="#aab0ba"/>
   <rect x="812" y="262" width="2" height="3" fill="#7c8088"/>
   <rect x="937" y="391" width="13" height="9" fill="#e8dccb"/>
   <rect x="859" y="364" width="18" height="15" fill="#c4b8aa"/>
   <rect x="984" y="410" width="22" height="7" fill="#f4f4f6"/>
   <rect x="1001" y="412" width="2" height="3" fill="#7c8088"/>
   <rect x="921" y="283" width="12" height="5" fill="#eaeaee"/>
   <rect x="927" y="285" width="2" height="3" fill="#7c8088"/>
   <rect x="841" y="391" width="13" height="8" fill="#f4f4f6"/>
   <rect x="851" y="394" width="2" height="3" fill="#7c8088"/>
   <rect x="796" y="302" width="16" height="18" fill="#f4f4f6"/>
   <rect x="920" y="371" width="22" height="10" fill="#f4f4f6"/>
   <rect x="972" y="433" width="12" height="17" fill="#dcccb4"/>
   <rect x="907" y="496" width="20" height="7" fill="#f4f4f6"/>
   <rect x="910" y="498" width="2" height="3" fill="#7c8088"/>
   <rect x="881" y="472" width="12" height="12" fill="#f4f4f6"/>
   <rect x="890" y="474" width="2" height="3" fill="#7c8088"/>
   <rect x="933" y="489" width="22" height="15" fill="#eaeaee"/>
   <rect x="1024" y="477" width="26" height="6" fill="#f0e8dc"/>
   <rect x="987" y="322" width="24" height="5" fill="#eaeaee"/>
   <rect x="996" y="324" width="2" height="3" fill="#7c8088"/>
   <rect x="972" y="489" width="13" height="13" fill="#f4f4f6"/>
   <rect x="982" y="494" width="2" height="3" fill="#7c8088"/>
   <rect x="801" y="347" width="21" height="8" fill="#cdd0d6"/>
   <rect x="979" y="300" width="8" height="7" fill="#f4f4f6"/>
   <rect x="775" y="397" width="14" height="9" fill="#eaeaee"/>
   <rect x="834" y="510" width="12" height="15" fill="#f4f4f6"/>
   <rect x="903" y="535" width="10" height="10" fill="#dcdde2"/>
   <rect x="906" y="540" width="2" height="3" fill="#7c8088"/>
   <rect x="1061" y="343" width="10" height="10" fill="#c4b8aa"/>
   <rect x="1066" y="347" width="2" height="3" fill="#7c8088"/>
   <rect x="968" y="310" width="18" height="17" fill="#dcccb4"/>
   <rect x="926" y="417" width="8" height="16" fill="#dcdde2"/>
   <rect x="975" y="372" width="14" height="8" fill="#dcdde2"/>
   <rect x="929" y="257" width="19" height="11" fill="#eaeaee"/>
   <rect x="1056" y="292" width="15" height="18" fill="#cdd0d6"/>
   <rect x="1066" y="306" width="2" height="3" fill="#7c8088"/>
   <rect x="895" y="506" width="9" height="18" fill="#eaeaee"/>
   <rect x="899" y="516" width="2" height="3" fill="#7c8088"/>
   <rect x="1058" y="495" width="22" height="12" fill="#aab0ba"/>
   <rect x="1075" y="501" width="2" height="3" fill="#7c8088"/>
   <rect x="848" y="488" width="15" height="12" fill="#dcccb4"/>
   <rect x="853" y="494" width="2" height="3" fill="#7c8088"/>
   <rect x="794" y="413" width="22" height="11" fill="#f4f4f6"/>
   <rect x="1033" y="477" width="17" height="17" fill="#e8dccb"/>
   <rect x="1039" y="481" width="2" height="3" fill="#7c8088"/>
   <rect x="783" y="350" width="23" height="16" fill="#f4f4f6"/>
   <rect x="792" y="361" width="2" height="3" fill="#7c8088"/>
   <rect x="960" y="517" width="7" height="18" fill="#f4f4f6"/>
   <rect x="1039" y="465" width="10" height="14" fill="#eaeaee"/>
   <rect x="1042" y="469" width="2" height="3" fill="#7c8088"/>
   <rect x="964" y="330" width="18" height="14" fill="#f4f4f6"/>
   <rect x="975" y="336" width="2" height="3" fill="#7c8088"/>
   <rect x="811" y="282" width="25" height="13" fill="#f4f4f6"/>
   <rect x="833" y="288" width="2" height="3" fill="#7c8088"/>
   <rect x="997" y="355" width="12" height="10" fill="#f4f4f6"/>
   <rect x="902" y="492" width="14" height="11" fill="#eaeaee"/>
   <rect x="878" y="457" width="11" height="13" fill="#f4f4f6"/>
   <rect x="859" y="502" width="20" height="11" fill="#f0e8dc"/>
   <rect x="999" y="427" width="15" height="6" fill="#eaeaee"/>
   <rect x="1005" y="430" width="2" height="3" fill="#7c8088"/>
   <rect x="861" y="455" width="19" height="8" fill="#eaeaee"/>
   <rect x="876" y="457" width="2" height="3" fill="#7c8088"/>
   <rect x="900" y="349" width="22" height="16" fill="#eaeaee"/>
   <rect x="802" y="515" width="8" height="10" fill="#f4f4f6"/>
   <rect x="976" y="350" width="24" height="17" fill="#f4f4f6"/>
   <rect x="915" y="355" width="15" height="9" fill="#dcdde2"/>
   <rect x="1068" y="539" width="26" height="10" fill="#e8dccb"/>
   <rect x="986" y="545" width="7" height="11" fill="#eaeaee"/>
   <rect x="839" y="543" width="10" height="10" fill="#f4f4f6"/>
   <rect x="998" y="272" width="9" height="13" fill="#dcdde2"/>
   <rect x="849" y="490" width="21" height="15" fill="#f4f4f6"/>
   <rect x="777" y="504" width="25" height="17" fill="#f4f4f6"/>
   <rect x="935" y="407" width="8" height="15" fill="#f4f4f6"/>
   <rect x="810" y="417" width="9" height="6" fill="#eaeaee"/>
   <rect x="815" y="419" width="2" height="3" fill="#7c8088"/>
   <rect x="898" y="263" width="10" height="11" fill="#eaeaee"/>
   <rect x="1031" y="278" width="23" height="7" fill="#c4b8aa"/>
   <rect x="896" y="430" width="23" height="18" fill="#eaeaee"/>
   <rect x="900" y="441" width="2" height="3" fill="#7c8088"/>
   <rect x="996" y="460" width="9" height="12" fill="#f4f4f6"/>
   <rect x="999" y="468" width="2" height="3" fill="#7c8088"/>
   <rect x="968" y="500" width="7" height="10" fill="#f4f4f6"/>
   <rect x="969" y="507" width="2" height="3" fill="#7c8088"/>
   <rect x="872" y="393" width="19" height="17" fill="#f0e8dc"/>
   <rect x="925" y="517" width="14" height="9" fill="#cdd0d6"/>
   <rect x="929" y="520" width="2" height="3" fill="#7c8088"/>
   <rect x="917" y="354" width="15" height="11" fill="#f4f4f6"/>
   <rect x="791" y="405" width="17" height="10" fill="#f4f4f6"/>
   <rect x="797" y="408" width="2" height="3" fill="#7c8088"/>
   <rect x="920" y="316" width="21" height="11" fill="#f4f4f6"/>
   <rect x="1067" y="249" width="18" height="17" fill="#f4f4f6"/>
   <rect x="885" y="337" width="18" height="13" fill="#f4f4f6"/>
   <rect x="929" y="472" width="7" height="6" fill="#f4f4f6"/>
   <rect x="933" y="475" width="2" height="3" fill="#7c8088"/>
   <rect x="1034" y="367" width="12" height="14" fill="#f4f4f6"/>
   <rect x="1026" y="345" width="12" height="16" fill="#e8dccb"/>
   <rect x="789" y="475" width="7" height="13" fill="#eaeaee"/>
   <rect x="967" y="254" width="25" height="15" fill="#eaeaee"/>
   <rect x="983" y="259" width="2" height="3" fill="#7c8088"/>
   <rect x="979" y="541" width="24" height="6" fill="#e8dccb"/>
   <rect x="1001" y="360" width="15" height="11" fill="#f4f4f6"/>
   <rect x="1010" y="362" width="2" height="3" fill="#7c8088"/>
   <rect x="807" y="496" width="19" height="12" fill="#f4f4f6"/>
   <rect x="813" y="504" width="2" height="3" fill="#7c8088"/>
   <rect x="943" y="523" width="10" height="10" fill="#eaeaee"/>
   <rect x="810" y="508" width="15" height="5" fill="#eaeaee"/>
   <rect x="978" y="525" width="16" height="14" fill="#f4f4f6"/>
   <rect x="804" y="469" width="9" height="13" fill="#f4f4f6"/>
   <rect x="806" y="473" width="2" height="3" fill="#7c8088"/>
   <rect x="952" y="402" width="14" height="12" fill="#dcccb4"/>
   <rect x="950" y="391" width="26" height="9" fill="#dcdde2"/>
   <rect x="957" y="395" width="2" height="3" fill="#7c8088"/>
   <rect x="947" y="324" width="7" height="16" fill="#f4f4f6"/>
   <rect x="904" y="432" width="17" height="18" fill="#f0e8dc"/>
   <rect x="920" y="316" width="21" height="6" fill="#f4f4f6"/>
   <rect x="783" y="456" width="17" height="12" fill="#f4f4f6"/>
   <rect x="796" y="463" width="2" height="3" fill="#7c8088"/>
   <rect x="1018" y="276" width="22" height="8" fill="#f4f4f6"/>
   <rect x="958" y="283" width="21" height="13" fill="#f0e8dc"/>
   <rect x="982" y="356" width="25" height="14" fill="#f4f4f6"/>
   <rect x="994" y="326" width="11" height="5" fill="#eaeaee"/>
   <rect x="997" y="328" width="2" height="3" fill="#7c8088"/>
   <rect x="812" y="392" width="11" height="9" fill="#f4f4f6"/>
   <rect x="1039" y="295" width="23" height="16" fill="#dcdde2"/>
   <rect x="996" y="407" width="19" height="17" fill="#e8dccb"/>
   <rect x="998" y="419" width="2" height="3" fill="#7c8088"/>
   <rect x="883" y="482" width="11" height="11" fill="#f4f4f6"/>
   <rect x="1060" y="398" width="17" height="10" fill="#f4f4f6"/>
   <rect x="806" y="528" width="19" height="6" fill="#f0e8dc"/>
   <rect x="815" y="530" width="2" height="3" fill="#7c8088"/>
   <rect x="1074" y="339" width="23" height="6" fill="#dcdde2"/>
   <rect x="1075" y="342" width="2" height="3" fill="#7c8088"/>
   <rect x="1072" y="452" width="23" height="15" fill="#eaeaee"/>
   <rect x="1083" y="456" width="2" height="3" fill="#7c8088"/>
   <rect x="933" y="353" width="16" height="8" fill="#dcdde2"/>
   <rect x="920" y="271" width="16" height="12" fill="#c4b8aa"/>
   <rect x="813" y="337" width="13" height="14" fill="#f0e8dc"/>
   <rect x="1062" y="524" width="23" height="17" fill="#f4f4f6"/>
   <rect x="952" y="452" width="18" height="13" fill="#f0e8dc"/>
   <rect x="961" y="461" width="2" height="3" fill="#7c8088"/>
   <rect x="782" y="280" width="23" height="17" fill="#f4f4f6"/>
   <rect x="799" y="290" width="2" height="3" fill="#7c8088"/>
   <rect x="931" y="420" width="21" height="16" fill="#f4f4f6"/>
   <rect x="945" y="432" width="2" height="3" fill="#7c8088"/>
   <rect x="1026" y="369" width="13" height="10" fill="#f4f4f6"/>
   <rect x="852" y="422" width="17" height="9" fill="#dcdde2"/>
   <rect x="843" y="511" width="10" height="7" fill="#f4f4f6"/>
   <rect x="1011" y="347" width="11" height="14" fill="#f4f4f6"/>
   <rect x="850" y="509" width="10" height="8" fill="#f4f4f6"/>
   <rect x="855" y="513" width="2" height="3" fill="#7c8088"/>
   <rect x="1013" y="408" width="8" height="15" fill="#f4f4f6"/>
   <rect x="1016" y="419" width="2" height="3" fill="#7c8088"/>
  </g>
  <rect x="878" y="248" width="60" height="14" fill="#e2ceb4"/><rect x="940" y="252" width="50" height="12" fill="#eadfd2"/>
  <rect x="1040" y="246" width="37" height="44" fill="#dcc4a8"/><rect x="1046" y="256" width="4" height="6" fill="#8a7a68"/><rect x="1060" y="256" width="4" height="6" fill="#8a7a68"/>
  <rect x="850" y="318" width="75" height="40" fill="#dcc8a8"/><rect x="895" y="322" width="45" height="12" fill="#c88676"/><rect x="870" y="336" width="4" height="6" fill="#6a6e78"/>
  <rect x="935" y="312" width="32" height="45" fill="#f3f3f5"/><rect x="945" y="320" width="3" height="8" fill="#8890a0"/><rect x="953" y="320" width="3" height="8" fill="#8890a0"/>
  <rect x="800" y="372" width="45" height="20" fill="#f3f3f5"/><rect x="860" y="370" width="40" height="28" fill="#f4f4f6"/>
  <rect x="822" y="425" width="35" height="45" fill="#ddd4c4"/><rect x="800" y="481" width="30" height="22" fill="#e2e5ec"/><rect x="836" y="400" width="34" height="40" fill="#f2f2f4"/>
  <path d="M788 342 A12 8 0 0 1 812 342 Z" fill="#4a7ac8"/>
  <path d="M816 366 A13 9 0 0 1 842 366 Z" fill="#4a7ac8"/>
  <path d="M802 350 A6 4 0 0 1 814 350 Z" fill="#4a7ac8"/>
  <path d="M790 400 A5 4 0 0 1 800 400 Z" fill="#4a7ac8"/>
  <path d="M1000 418 L1077 412 L1077 546 L1016 546 L1027 436 Z" fill="#dcd8d2"/>
  <path d="M1040 440 Q1060 430 1077 450 L1077 520 Q1055 500 1040 470 Z" fill="#cfcac3"/>
  <rect x="967" y="360" width="106" height="62" fill="#f3f4f7"/><rect x="967" y="400" width="106" height="22" fill="#e4e6ea"/>
  <circle cx="1017.5" cy="368" r="47" fill="#4274c6" clip-path="url(#dc1)"/>
  <rect x="965" y="358" width="110" height="4" fill="#eef0f4"/>
  <rect x="980" y="373" width="11" height="31" rx="5.5" fill="#f8f8fa"/><rect x="982.5" y="378" width="6" height="25" fill="#5678b0"/>
  <rect x="1016" y="373" width="13" height="31" rx="6.5" fill="#f8f8fa"/><rect x="1018.5" y="378" width="9" height="25" fill="#4e70a8"/>
  <rect x="1052" y="373" width="10" height="31" rx="5" fill="#f8f8fa"/><rect x="1054.5" y="378" width="5" height="25" fill="#5678b0"/>
  <rect x="818" y="324" width="20" height="26" rx="6" fill="#a8a290"/><rect x="872" y="326" width="28" height="34" fill="#e4d0a8"/>
  <rect x="944" y="500" width="76" height="46" fill="#f2f3f5"/><rect x="1000" y="505" width="16" height="41" fill="#e6e6ea"/>
  <path d="M947 501 Q942 458 972 440 Q992 429 1027.5 434 L1016 501 Z" fill="#3f73ca"/>
  <path d="M960 470 Q975 455 990 465 Q980 480 965 478 Z" fill="#5a88d4" opacity="0.6"/>
  <rect x="956" y="489" width="2" height="57" fill="#4a4a4a"/>
  <rect x="886" y="494" width="60" height="52" fill="#f0f0f2"/><rect x="886" y="494" width="5" height="52" fill="#dcdce0"/>
  <rect x="907" y="505" width="14" height="41" rx="6" fill="#d8b4a0"/>
  <rect x="900" y="494" width="2" height="52" fill="#6a5a50"/><rect x="927" y="494" width="2" height="52" fill="#6a5a50"/>
  <path d="M884 487 L948 487 L946 495 L886 495 Z" fill="#3f70c4"/>
  <path d="M890 488 Q892 465 915 464 Q939 465 941 488 L935 488 Q933 472 915 471 Q897 472 896 488 Z" fill="#4678cc"/>
  <path d="M907 488 Q906 462 915 456 Q924 462 923 488 Z" fill="#3f6ec4"/>
    <path d="M589 186 Q600 160 625 148 Q650 140 680 148 Q708 160 715 183 L720 195 L775 195 L775 420 L589 420 Z" fill="#e6e9ef"/>
    <path d="M589 185 Q600 160 625 148 Q650 140 672 144" fill="none" stroke="#d2cab8" stroke-width="2.5"/>
    <path d="M717 190 Q720 170 735 156 Q748 147 763 149 Q756 162 753 194 Z" fill="#bab5ab"/>
    <path d="M717 190 Q720 170 735 156 Q741 152 746 151 Q728 165 724 192 Z" fill="#d8d0c0"/>
    <path d="M622 420 L622 225 Q622 188 643 187 Q662 188 669 245 L669 420 Z" fill="#c6d3ea"/>
    <path d="M643 187 Q662 188 669 245 L669 262 L690 262 Q690 215 672 196 Q660 186 643 187 Z" fill="#f6f7f9"/>
    <rect x="670" y="260" width="18" height="162" fill="#f4f5f8"/>
    <rect x="622" y="237" width="58" height="3.5" fill="#a89a86"/>
    <path d="M630 266 Q631 250 636 246 L636 242 L649 242 L649 246 Q654 250 655 266 Z" fill="#3e5048"/>
    <ellipse cx="642" cy="239" rx="5" ry="5" fill="#7a7060"/>
    <rect x="640" y="97.5" width="11" height="45" fill="#b6b2aa"/>
    <rect x="615" y="113" width="60" height="15" fill="#b6b2aa"/>
    <rect x="597" y="247" width="20" height="180" fill="#a8a298"/>
    <rect x="687" y="247" width="24" height="176" fill="#b0aaa0"/>
    <rect x="753" y="247" width="16" height="176" fill="#a6a096"/><rect x="755" y="247" width="21" height="16" fill="#a6a096"/>
    <rect x="617" y="312" width="53" height="104" fill="#e4dcd0"/>
    <rect x="617" y="312" width="53" height="12" fill="#405070"/>
    <rect x="617" y="324" width="53" height="8" fill="#8a8e90"/>
    <rect x="622" y="334" width="26" height="28" fill="#d8a070"/>
    <rect x="648" y="330" width="22" height="35" fill="#f0eeec"/>
    <rect x="620" y="368" width="40" height="24" fill="#dccab4"/>
    <rect x="617" y="392" width="53" height="24" fill="#e8e0d4"/>
    <rect x="589" y="415" width="215" height="15" fill="#f2f3f6"/>
    <rect x="589" y="429" width="211" height="52" fill="#e4e6ec"/>
    <path d="M589 457 Q700 452 790 488 Q850 512 910 546 L589 546 Z" fill="#f4f5f8"/>
    <path d="M589 457 Q700 452 790 488 Q850 512 910 546" fill="none" stroke="#d8dce4" stroke-width="2"/>
  </svg>
</div></div>
<div class="a" style="left:251.5px;top:786px;width:130px;height:52px;border-radius:5px;overflow:hidden;background:#3d6c72">
 <svg class="a" style="left:0;top:0" width="130" height="52" viewBox="0 0 130 52">
  <defs><filter id="fb"><feGaussianBlur stdDeviation="3"/></filter><filter id="fb1"><feGaussianBlur stdDeviation="0.4"/></filter></defs>
  <rect width="130" height="52" fill="#3f6e74"/>
  <rect x="92.5" width="38" height="52" fill="#36666c"/>
  <g filter="url(#fb1)"><ellipse cx="42.1" cy="7.8" rx="0.9" ry="0.7" fill="#5a8e92" opacity="0.7"/><ellipse cx="47.5" cy="3.0" rx="1.1" ry="0.4" fill="#4a7e84" opacity="0.7"/><ellipse cx="54.4" cy="12.5" rx="1.4" ry="0.8" fill="#4a7e84" opacity="0.7"/><ellipse cx="16.1" cy="11.6" rx="2.1" ry="0.7" fill="#4a7e84" opacity="0.7"/><ellipse cx="51.6" cy="50.8" rx="1.6" ry="0.5" fill="#5a8e92" opacity="0.7"/><ellipse cx="54.5" cy="28.1" rx="1.2" ry="0.8" fill="#4a7e84" opacity="0.7"/><ellipse cx="23.5" cy="30.2" rx="1.3" ry="0.7" fill="#7aa8aa" opacity="0.7"/><ellipse cx="8.2" cy="3.1" rx="1.5" ry="0.7" fill="#7aa8aa" opacity="0.7"/><ellipse cx="101.0" cy="24.2" rx="1.3" ry="0.5" fill="#94bcbc" opacity="0.7"/><ellipse cx="23.4" cy="40.6" rx="1.6" ry="0.7" fill="#5a8e92" opacity="0.7"/><ellipse cx="113.8" cy="37.9" rx="1.7" ry="0.4" fill="#30626a" opacity="0.7"/><ellipse cx="66.6" cy="8.6" rx="1.0" ry="0.6" fill="#30626a" opacity="0.7"/><ellipse cx="5.1" cy="34.7" rx="1.6" ry="0.8" fill="#4a7e84" opacity="0.7"/><ellipse cx="40.8" cy="36.2" rx="1.5" ry="0.8" fill="#4a7e84" opacity="0.7"/><ellipse cx="8.9" cy="4.9" rx="1.5" ry="0.7" fill="#30626a" opacity="0.7"/><ellipse cx="7.9" cy="36.5" rx="2.2" ry="0.8" fill="#4a7e84" opacity="0.7"/><ellipse cx="37.0" cy="20.1" rx="0.8" ry="0.6" fill="#30626a" opacity="0.7"/><ellipse cx="21.8" cy="6.1" rx="1.1" ry="0.5" fill="#5a8e92" opacity="0.7"/><ellipse cx="96.0" cy="20.7" rx="0.9" ry="0.6" fill="#94bcbc" opacity="0.7"/><ellipse cx="71.4" cy="45.9" rx="2.0" ry="0.5" fill="#94bcbc" opacity="0.7"/><ellipse cx="54.0" cy="18.7" rx="2.1" ry="0.5" fill="#94bcbc" opacity="0.7"/><ellipse cx="22.9" cy="12.1" rx="0.8" ry="0.8" fill="#7aa8aa" opacity="0.7"/><ellipse cx="23.7" cy="14.7" rx="1.4" ry="0.6" fill="#7aa8aa" opacity="0.7"/><ellipse cx="73.6" cy="49.6" rx="2.1" ry="0.7" fill="#4a7e84" opacity="0.7"/><ellipse cx="96.2" cy="23.7" rx="1.3" ry="0.6" fill="#4a7e84" opacity="0.7"/><ellipse cx="13.5" cy="33.0" rx="1.1" ry="0.9" fill="#5a8e92" opacity="0.7"/><ellipse cx="57.3" cy="5.7" rx="0.9" ry="0.4" fill="#4a7e84" opacity="0.7"/><ellipse cx="19.7" cy="5.3" rx="1.7" ry="0.4" fill="#30626a" opacity="0.7"/><ellipse cx="27.0" cy="19.6" rx="2.1" ry="0.7" fill="#30626a" opacity="0.7"/><ellipse cx="61.6" cy="6.0" rx="2.2" ry="0.6" fill="#94bcbc" opacity="0.7"/><ellipse cx="62.9" cy="4.5" rx="1.8" ry="0.8" fill="#5a8e92" opacity="0.7"/><ellipse cx="62.2" cy="36.0" rx="0.8" ry="0.9" fill="#4a7e84" opacity="0.7"/><ellipse cx="68.7" cy="7.6" rx="2.1" ry="0.8" fill="#4a7e84" opacity="0.7"/><ellipse cx="38.8" cy="33.4" rx="1.8" ry="0.5" fill="#5a8e92" opacity="0.7"/><ellipse cx="47.7" cy="8.7" rx="1.5" ry="0.8" fill="#7aa8aa" opacity="0.7"/><ellipse cx="42.9" cy="11.6" rx="1.9" ry="0.8" fill="#7aa8aa" opacity="0.7"/><ellipse cx="96.2" cy="11.8" rx="1.5" ry="0.8" fill="#4a7e84" opacity="0.7"/><ellipse cx="128.6" cy="41.1" rx="1.2" ry="0.7" fill="#94bcbc" opacity="0.7"/><ellipse cx="124.3" cy="23.3" rx="2.1" ry="0.6" fill="#30626a" opacity="0.7"/><ellipse cx="28.7" cy="11.8" rx="1.3" ry="0.6" fill="#7aa8aa" opacity="0.7"/><ellipse cx="128.1" cy="31.7" rx="1.5" ry="0.7" fill="#5a8e92" opacity="0.7"/><ellipse cx="104.0" cy="4.4" rx="2.1" ry="0.8" fill="#5a8e92" opacity="0.7"/><ellipse cx="97.5" cy="24.9" rx="1.4" ry="0.7" fill="#7aa8aa" opacity="0.7"/><ellipse cx="11.3" cy="49.2" rx="1.4" ry="0.8" fill="#94bcbc" opacity="0.7"/><ellipse cx="11.0" cy="8.3" rx="0.8" ry="0.7" fill="#7aa8aa" opacity="0.7"/><ellipse cx="60.5" cy="34.1" rx="2.0" ry="0.9" fill="#4a7e84" opacity="0.7"/><ellipse cx="85.4" cy="18.2" rx="1.6" ry="0.4" fill="#4a7e84" opacity="0.7"/><ellipse cx="103.9" cy="37.8" rx="1.5" ry="0.9" fill="#5a8e92" opacity="0.7"/><ellipse cx="56.4" cy="45.3" rx="0.8" ry="0.5" fill="#7aa8aa" opacity="0.7"/><ellipse cx="65.2" cy="39.7" rx="1.2" ry="0.6" fill="#30626a" opacity="0.7"/><ellipse cx="17.0" cy="47.3" rx="2.1" ry="0.7" fill="#30626a" opacity="0.7"/><ellipse cx="106.0" cy="26.9" rx="1.0" ry="0.5" fill="#4a7e84" opacity="0.7"/><ellipse cx="66.4" cy="45.4" rx="1.7" ry="0.8" fill="#7aa8aa" opacity="0.7"/><ellipse cx="19.5" cy="7.4" rx="1.8" ry="0.7" fill="#4a7e84" opacity="0.7"/><ellipse cx="42.4" cy="27.0" rx="1.5" ry="0.8" fill="#4a7e84" opacity="0.7"/><ellipse cx="114.8" cy="3.0" rx="1.2" ry="0.8" fill="#7aa8aa" opacity="0.7"/><ellipse cx="66.0" cy="29.2" rx="1.4" ry="0.7" fill="#5a8e92" opacity="0.7"/><ellipse cx="65.7" cy="26.6" rx="1.4" ry="0.7" fill="#30626a" opacity="0.7"/><ellipse cx="62.1" cy="49.0" rx="2.0" ry="0.9" fill="#4a7e84" opacity="0.7"/><ellipse cx="33.7" cy="29.1" rx="2.0" ry="0.5" fill="#7aa8aa" opacity="0.7"/><ellipse cx="15.8" cy="23.0" rx="1.7" ry="0.6" fill="#5a8e92" opacity="0.7"/><ellipse cx="27.6" cy="15.7" rx="2.1" ry="0.5" fill="#5a8e92" opacity="0.7"/><ellipse cx="93.1" cy="34.3" rx="1.2" ry="0.5" fill="#7aa8aa" opacity="0.7"/><ellipse cx="60.8" cy="38.8" rx="1.4" ry="0.6" fill="#5a8e92" opacity="0.7"/><ellipse cx="128.7" cy="43.3" rx="1.8" ry="0.9" fill="#7aa8aa" opacity="0.7"/><ellipse cx="52.5" cy="21.9" rx="1.2" ry="0.8" fill="#30626a" opacity="0.7"/><ellipse cx="2.5" cy="28.8" rx="1.8" ry="0.6" fill="#94bcbc" opacity="0.7"/><ellipse cx="67.3" cy="15.4" rx="1.0" ry="0.9" fill="#5a8e92" opacity="0.7"/><ellipse cx="29.7" cy="45.6" rx="1.2" ry="0.4" fill="#5a8e92" opacity="0.7"/><ellipse cx="101.3" cy="14.1" rx="1.9" ry="0.8" fill="#7aa8aa" opacity="0.7"/><ellipse cx="87.9" cy="49.2" rx="1.0" ry="0.9" fill="#94bcbc" opacity="0.7"/><ellipse cx="74.2" cy="36.4" rx="1.2" ry="0.8" fill="#5a8e92" opacity="0.7"/><ellipse cx="23.8" cy="46.6" rx="2.1" ry="0.7" fill="#30626a" opacity="0.7"/><ellipse cx="104.2" cy="4.4" rx="0.9" ry="0.8" fill="#7aa8aa" opacity="0.7"/><ellipse cx="59.0" cy="17.6" rx="1.4" ry="0.9" fill="#4a7e84" opacity="0.7"/><ellipse cx="80.8" cy="2.2" rx="2.1" ry="0.9" fill="#7aa8aa" opacity="0.7"/><ellipse cx="34.0" cy="9.4" rx="1.7" ry="0.7" fill="#30626a" opacity="0.7"/><ellipse cx="26.8" cy="23.2" rx="1.2" ry="0.8" fill="#7aa8aa" opacity="0.7"/><ellipse cx="129.3" cy="1.9" rx="1.8" ry="0.7" fill="#5a8e92" opacity="0.7"/><ellipse cx="24.6" cy="24.7" rx="0.9" ry="0.8" fill="#94bcbc" opacity="0.7"/><ellipse cx="56.2" cy="25.7" rx="2.2" ry="0.6" fill="#94bcbc" opacity="0.7"/><ellipse cx="28.0" cy="11.9" rx="2.0" ry="0.8" fill="#7aa8aa" opacity="0.7"/><ellipse cx="82.7" cy="21.0" rx="2.2" ry="0.8" fill="#30626a" opacity="0.7"/><ellipse cx="1.9" cy="32.5" rx="1.4" ry="0.4" fill="#30626a" opacity="0.7"/><ellipse cx="86.5" cy="19.8" rx="1.7" ry="0.5" fill="#4a7e84" opacity="0.7"/><ellipse cx="31.5" cy="15.2" rx="1.1" ry="0.5" fill="#94bcbc" opacity="0.7"/><ellipse cx="0.5" cy="18.9" rx="2.2" ry="0.7" fill="#30626a" opacity="0.7"/><ellipse cx="31.8" cy="50.2" rx="1.1" ry="0.5" fill="#30626a" opacity="0.7"/><ellipse cx="43.6" cy="4.4" rx="1.5" ry="0.5" fill="#30626a" opacity="0.7"/><ellipse cx="65.6" cy="0.3" rx="1.9" ry="0.5" fill="#30626a" opacity="0.7"/><ellipse cx="76.3" cy="20.5" rx="1.2" ry="0.5" fill="#30626a" opacity="0.7"/><ellipse cx="76.1" cy="27.5" rx="1.7" ry="0.8" fill="#7aa8aa" opacity="0.7"/><ellipse cx="114.3" cy="20.3" rx="1.8" ry="0.6" fill="#30626a" opacity="0.7"/><ellipse cx="36.9" cy="32.2" rx="0.9" ry="0.8" fill="#7aa8aa" opacity="0.7"/><ellipse cx="116.0" cy="32.6" rx="1.0" ry="0.7" fill="#4a7e84" opacity="0.7"/><ellipse cx="65.6" cy="43.4" rx="2.0" ry="0.7" fill="#5a8e92" opacity="0.7"/><ellipse cx="116.1" cy="35.5" rx="0.9" ry="0.4" fill="#7aa8aa" opacity="0.7"/><ellipse cx="82.8" cy="49.9" rx="2.0" ry="0.7" fill="#94bcbc" opacity="0.7"/><ellipse cx="81.6" cy="32.6" rx="1.5" ry="0.4" fill="#7aa8aa" opacity="0.7"/><ellipse cx="103.7" cy="38.9" rx="2.1" ry="0.4" fill="#4a7e84" opacity="0.7"/><ellipse cx="68.4" cy="38.8" rx="1.2" ry="0.4" fill="#94bcbc" opacity="0.7"/><ellipse cx="34.5" cy="37.9" rx="1.1" ry="0.7" fill="#7aa8aa" opacity="0.7"/><ellipse cx="59.8" cy="44.0" rx="1.5" ry="0.7" fill="#5a8e92" opacity="0.7"/><ellipse cx="99.7" cy="32.1" rx="0.9" ry="0.5" fill="#7aa8aa" opacity="0.7"/><ellipse cx="33.0" cy="38.6" rx="1.7" ry="0.5" fill="#30626a" opacity="0.7"/><ellipse cx="62.7" cy="25.3" rx="1.8" ry="0.7" fill="#5a8e92" opacity="0.7"/><ellipse cx="37.8" cy="26.9" rx="1.5" ry="0.8" fill="#94bcbc" opacity="0.7"/><ellipse cx="129.1" cy="28.6" rx="2.2" ry="0.9" fill="#30626a" opacity="0.7"/><ellipse cx="2.3" cy="23.9" rx="2.2" ry="0.6" fill="#4a7e84" opacity="0.7"/><ellipse cx="34.9" cy="10.9" rx="0.9" ry="0.4" fill="#7aa8aa" opacity="0.7"/><ellipse cx="97.2" cy="13.6" rx="1.0" ry="0.8" fill="#30626a" opacity="0.7"/><ellipse cx="66.1" cy="46.1" rx="1.1" ry="0.8" fill="#30626a" opacity="0.7"/><ellipse cx="63.2" cy="1.3" rx="2.1" ry="0.7" fill="#5a8e92" opacity="0.7"/><ellipse cx="52.7" cy="37.8" rx="1.3" ry="0.6" fill="#94bcbc" opacity="0.7"/><ellipse cx="109.2" cy="0.1" rx="2.0" ry="0.5" fill="#30626a" opacity="0.7"/><ellipse cx="120.4" cy="37.1" rx="1.2" ry="0.4" fill="#30626a" opacity="0.7"/><ellipse cx="50.7" cy="45.2" rx="1.3" ry="0.6" fill="#5a8e92" opacity="0.7"/><ellipse cx="35.8" cy="2.5" rx="0.9" ry="0.7" fill="#5a8e92" opacity="0.7"/><ellipse cx="82.5" cy="7.7" rx="1.4" ry="0.6" fill="#30626a" opacity="0.7"/><ellipse cx="100.5" cy="40.8" rx="2.0" ry="0.8" fill="#94bcbc" opacity="0.7"/><ellipse cx="82.0" cy="47.5" rx="1.6" ry="0.8" fill="#4a7e84" opacity="0.7"/><ellipse cx="6.4" cy="38.1" rx="1.7" ry="0.5" fill="#94bcbc" opacity="0.7"/><ellipse cx="113.0" cy="25.2" rx="1.0" ry="0.6" fill="#4a7e84" opacity="0.7"/><ellipse cx="44.7" cy="15.5" rx="1.4" ry="0.5" fill="#30626a" opacity="0.7"/><ellipse cx="62.8" cy="34.8" rx="1.0" ry="0.5" fill="#5a8e92" opacity="0.7"/><ellipse cx="27.0" cy="47.1" rx="1.6" ry="0.6" fill="#94bcbc" opacity="0.7"/><ellipse cx="43.3" cy="39.5" rx="1.0" ry="0.5" fill="#94bcbc" opacity="0.7"/><ellipse cx="11.8" cy="17.8" rx="1.2" ry="0.6" fill="#5a8e92" opacity="0.7"/><ellipse cx="105.2" cy="10.5" rx="1.8" ry="0.6" fill="#5a8e92" opacity="0.7"/><ellipse cx="53.8" cy="27.3" rx="1.2" ry="0.8" fill="#94bcbc" opacity="0.7"/><ellipse cx="64.8" cy="29.9" rx="1.0" ry="0.7" fill="#30626a" opacity="0.7"/><ellipse cx="81.9" cy="44.9" rx="0.9" ry="0.8" fill="#7aa8aa" opacity="0.7"/><ellipse cx="50.0" cy="33.6" rx="2.1" ry="0.8" fill="#94bcbc" opacity="0.7"/><ellipse cx="113.5" cy="1.1" rx="1.4" ry="0.8" fill="#5a8e92" opacity="0.7"/><ellipse cx="104.6" cy="50.4" rx="0.8" ry="0.6" fill="#94bcbc" opacity="0.7"/><ellipse cx="120.5" cy="42.9" rx="2.2" ry="0.5" fill="#94bcbc" opacity="0.7"/><ellipse cx="14.2" cy="8.0" rx="2.2" ry="0.5" fill="#4a7e84" opacity="0.7"/><ellipse cx="107.3" cy="36.5" rx="0.9" ry="0.8" fill="#94bcbc" opacity="0.7"/><ellipse cx="0.2" cy="6.5" rx="2.1" ry="0.7" fill="#4a7e84" opacity="0.7"/><ellipse cx="39.5" cy="6.7" rx="1.5" ry="0.6" fill="#30626a" opacity="0.7"/><ellipse cx="99.3" cy="5.2" rx="1.5" ry="0.7" fill="#30626a" opacity="0.7"/><ellipse cx="50.5" cy="11.6" rx="0.8" ry="0.7" fill="#4a7e84" opacity="0.7"/><ellipse cx="129.5" cy="14.5" rx="1.7" ry="0.8" fill="#30626a" opacity="0.7"/><ellipse cx="61.8" cy="12.2" rx="0.8" ry="0.6" fill="#7aa8aa" opacity="0.7"/><ellipse cx="84.5" cy="2.9" rx="1.5" ry="0.7" fill="#7aa8aa" opacity="0.7"/><ellipse cx="54.6" cy="13.4" rx="2.1" ry="0.5" fill="#94bcbc" opacity="0.7"/><ellipse cx="4.4" cy="17.6" rx="1.3" ry="0.6" fill="#94bcbc" opacity="0.7"/><ellipse cx="0.9" cy="15.2" rx="0.9" ry="0.6" fill="#4a7e84" opacity="0.7"/><ellipse cx="26.1" cy="39.8" rx="1.1" ry="0.5" fill="#7aa8aa" opacity="0.7"/><ellipse cx="98.9" cy="15.3" rx="1.5" ry="0.5" fill="#4a7e84" opacity="0.7"/><ellipse cx="29.0" cy="21.7" rx="2.1" ry="0.5" fill="#5a8e92" opacity="0.7"/><ellipse cx="51.1" cy="11.1" rx="1.0" ry="0.4" fill="#4a7e84" opacity="0.7"/><ellipse cx="7.8" cy="20.5" rx="1.8" ry="0.9" fill="#30626a" opacity="0.7"/><ellipse cx="121.1" cy="17.1" rx="1.7" ry="0.7" fill="#7aa8aa" opacity="0.7"/><ellipse cx="60.8" cy="16.2" rx="2.0" ry="0.9" fill="#94bcbc" opacity="0.7"/><ellipse cx="57.5" cy="5.7" rx="1.2" ry="0.6" fill="#5a8e92" opacity="0.7"/><ellipse cx="124.2" cy="6.4" rx="1.3" ry="0.8" fill="#7aa8aa" opacity="0.7"/><ellipse cx="40.1" cy="41.8" rx="0.9" ry="0.6" fill="#5a8e92" opacity="0.7"/><ellipse cx="48.5" cy="47.8" rx="1.3" ry="0.8" fill="#7aa8aa" opacity="0.7"/><ellipse cx="61.7" cy="32.8" rx="1.9" ry="0.8" fill="#7aa8aa" opacity="0.7"/><ellipse cx="5.3" cy="1.8" rx="1.9" ry="0.4" fill="#5a8e92" opacity="0.7"/><ellipse cx="25.3" cy="3.3" rx="1.3" ry="0.5" fill="#4a7e84" opacity="0.7"/><ellipse cx="124.5" cy="32.1" rx="1.8" ry="0.7" fill="#30626a" opacity="0.7"/><ellipse cx="120.1" cy="15.5" rx="2.1" ry="0.7" fill="#4a7e84" opacity="0.7"/><ellipse cx="122.6" cy="1.3" rx="1.0" ry="0.8" fill="#7aa8aa" opacity="0.7"/><ellipse cx="60.5" cy="40.4" rx="2.1" ry="0.8" fill="#30626a" opacity="0.7"/><ellipse cx="17.3" cy="25.8" rx="1.9" ry="0.8" fill="#5a8e92" opacity="0.7"/><ellipse cx="107.0" cy="40.2" rx="1.1" ry="0.8" fill="#4a7e84" opacity="0.7"/><ellipse cx="59.9" cy="40.8" rx="0.9" ry="0.5" fill="#4a7e84" opacity="0.7"/><ellipse cx="97.9" cy="12.9" rx="1.7" ry="0.6" fill="#5a8e92" opacity="0.7"/><ellipse cx="70.8" cy="8.4" rx="2.0" ry="0.9" fill="#94bcbc" opacity="0.7"/><ellipse cx="34.4" cy="4.4" rx="1.4" ry="0.9" fill="#5a8e92" opacity="0.7"/><ellipse cx="126.4" cy="9.0" rx="1.4" ry="0.7" fill="#7aa8aa" opacity="0.7"/><ellipse cx="87.6" cy="38.9" rx="1.9" ry="0.5" fill="#5a8e92" opacity="0.7"/><ellipse cx="36.3" cy="13.9" rx="1.8" ry="0.5" fill="#30626a" opacity="0.7"/><ellipse cx="32.2" cy="12.8" rx="1.2" ry="0.9" fill="#7aa8aa" opacity="0.7"/><ellipse cx="24.5" cy="3.4" rx="2.2" ry="0.7" fill="#30626a" opacity="0.7"/><ellipse cx="30.1" cy="42.0" rx="2.2" ry="0.5" fill="#94bcbc" opacity="0.7"/><ellipse cx="61.7" cy="42.6" rx="2.1" ry="0.4" fill="#94bcbc" opacity="0.7"/><ellipse cx="38.2" cy="6.2" rx="1.6" ry="0.8" fill="#7aa8aa" opacity="0.7"/><ellipse cx="25.2" cy="3.9" rx="2.0" ry="0.6" fill="#4a7e84" opacity="0.7"/><ellipse cx="33.8" cy="40.4" rx="0.9" ry="0.7" fill="#5a8e92" opacity="0.7"/><ellipse cx="80.6" cy="11.3" rx="1.3" ry="0.4" fill="#30626a" opacity="0.7"/><ellipse cx="130.0" cy="2.0" rx="1.9" ry="0.8" fill="#7aa8aa" opacity="0.7"/><ellipse cx="53.2" cy="19.3" rx="1.2" ry="0.5" fill="#4a7e84" opacity="0.7"/><ellipse cx="103.4" cy="28.5" rx="1.4" ry="0.8" fill="#5a8e92" opacity="0.7"/><ellipse cx="86.3" cy="8.0" rx="0.9" ry="0.5" fill="#4a7e84" opacity="0.7"/><ellipse cx="90.4" cy="21.3" rx="1.7" ry="0.6" fill="#30626a" opacity="0.7"/><ellipse cx="6.7" cy="38.8" rx="1.4" ry="0.4" fill="#30626a" opacity="0.7"/><ellipse cx="99.7" cy="41.7" rx="1.3" ry="0.6" fill="#7aa8aa" opacity="0.7"/><ellipse cx="122.5" cy="22.6" rx="1.4" ry="0.8" fill="#7aa8aa" opacity="0.7"/><ellipse cx="52.8" cy="45.9" rx="1.9" ry="0.5" fill="#94bcbc" opacity="0.7"/><ellipse cx="6.7" cy="7.4" rx="0.9" ry="0.7" fill="#94bcbc" opacity="0.7"/><ellipse cx="48.2" cy="26.2" rx="1.3" ry="0.5" fill="#7aa8aa" opacity="0.7"/><ellipse cx="22.3" cy="3.5" rx="1.5" ry="0.8" fill="#94bcbc" opacity="0.7"/><ellipse cx="125.7" cy="10.3" rx="2.0" ry="0.4" fill="#7aa8aa" opacity="0.7"/><ellipse cx="118.7" cy="16.4" rx="2.1" ry="0.6" fill="#4a7e84" opacity="0.7"/><ellipse cx="117.5" cy="32.3" rx="1.7" ry="0.8" fill="#7aa8aa" opacity="0.7"/><ellipse cx="80.7" cy="32.0" rx="2.0" ry="0.5" fill="#7aa8aa" opacity="0.7"/><ellipse cx="28.4" cy="20.8" rx="1.0" ry="0.6" fill="#4a7e84" opacity="0.7"/><ellipse cx="19.4" cy="50.5" rx="0.9" ry="0.7" fill="#7aa8aa" opacity="0.7"/><ellipse cx="98.5" cy="2.0" rx="1.0" ry="0.7" fill="#30626a" opacity="0.7"/><ellipse cx="71.5" cy="32.6" rx="1.7" ry="0.6" fill="#30626a" opacity="0.7"/><ellipse cx="32.4" cy="20.2" rx="1.4" ry="0.6" fill="#30626a" opacity="0.7"/><ellipse cx="3.0" cy="32.2" rx="1.5" ry="0.6" fill="#94bcbc" opacity="0.7"/><ellipse cx="80.4" cy="42.6" rx="1.9" ry="0.6" fill="#7aa8aa" opacity="0.7"/><ellipse cx="8.7" cy="18.6" rx="0.9" ry="0.6" fill="#30626a" opacity="0.7"/><ellipse cx="66.3" cy="2.1" rx="0.9" ry="0.8" fill="#7aa8aa" opacity="0.7"/><ellipse cx="101.1" cy="26.6" rx="1.9" ry="0.8" fill="#5a8e92" opacity="0.7"/><ellipse cx="84.9" cy="40.8" rx="2.0" ry="0.9" fill="#5a8e92" opacity="0.7"/><ellipse cx="95.2" cy="42.4" rx="1.0" ry="0.8" fill="#7aa8aa" opacity="0.7"/><ellipse cx="37.4" cy="42.2" rx="1.8" ry="0.8" fill="#7aa8aa" opacity="0.7"/><ellipse cx="28.7" cy="43.3" rx="1.9" ry="0.5" fill="#4a7e84" opacity="0.7"/><ellipse cx="116.5" cy="14.3" rx="1.0" ry="0.7" fill="#94bcbc" opacity="0.7"/><ellipse cx="119.6" cy="10.8" rx="1.7" ry="0.5" fill="#30626a" opacity="0.7"/><ellipse cx="48.4" cy="10.3" rx="1.0" ry="0.9" fill="#94bcbc" opacity="0.7"/><ellipse cx="88.4" cy="46.6" rx="1.9" ry="0.5" fill="#7aa8aa" opacity="0.7"/><ellipse cx="99.9" cy="2.5" rx="2.2" ry="0.6" fill="#30626a" opacity="0.7"/><ellipse cx="67.8" cy="35.8" rx="1.2" ry="0.7" fill="#5a8e92" opacity="0.7"/><ellipse cx="111.4" cy="38.4" rx="1.2" ry="0.9" fill="#30626a" opacity="0.7"/><ellipse cx="75.1" cy="18.7" rx="1.4" ry="0.5" fill="#5a8e92" opacity="0.7"/><ellipse cx="96.7" cy="2.5" rx="1.2" ry="0.7" fill="#4a7e84" opacity="0.7"/><ellipse cx="127.9" cy="30.5" rx="1.8" ry="0.8" fill="#30626a" opacity="0.7"/><ellipse cx="28.8" cy="15.1" rx="1.4" ry="0.6" fill="#94bcbc" opacity="0.7"/><ellipse cx="6.2" cy="25.4" rx="1.7" ry="0.4" fill="#4a7e84" opacity="0.7"/><ellipse cx="0.3" cy="18.5" rx="1.5" ry="0.7" fill="#5a8e92" opacity="0.7"/><ellipse cx="53.7" cy="15.7" rx="1.1" ry="0.7" fill="#7aa8aa" opacity="0.7"/><ellipse cx="61.7" cy="7.0" rx="1.8" ry="0.6" fill="#7aa8aa" opacity="0.7"/><ellipse cx="8.3" cy="7.5" rx="1.4" ry="0.5" fill="#30626a" opacity="0.7"/><ellipse cx="1.5" cy="33.5" rx="2.0" ry="0.7" fill="#4a7e84" opacity="0.7"/><ellipse cx="75.2" cy="31.3" rx="1.8" ry="0.5" fill="#4a7e84" opacity="0.7"/><ellipse cx="117.5" cy="2.3" rx="0.8" ry="0.5" fill="#4a7e84" opacity="0.7"/><ellipse cx="20.7" cy="47.4" rx="0.8" ry="0.7" fill="#5a8e92" opacity="0.7"/><ellipse cx="122.3" cy="7.4" rx="1.5" ry="0.7" fill="#7aa8aa" opacity="0.7"/><ellipse cx="84.2" cy="21.6" rx="1.0" ry="0.6" fill="#4a7e84" opacity="0.7"/><ellipse cx="39.0" cy="2.5" rx="1.8" ry="0.4" fill="#94bcbc" opacity="0.7"/><ellipse cx="109.8" cy="38.7" rx="0.9" ry="0.7" fill="#94bcbc" opacity="0.7"/><ellipse cx="22.8" cy="51.8" rx="1.1" ry="0.4" fill="#30626a" opacity="0.7"/><ellipse cx="43.6" cy="39.0" rx="1.8" ry="0.5" fill="#30626a" opacity="0.7"/><ellipse cx="72.0" cy="22.7" rx="2.2" ry="0.5" fill="#4a7e84" opacity="0.7"/><ellipse cx="120.7" cy="46.5" rx="2.0" ry="0.4" fill="#5a8e92" opacity="0.7"/><ellipse cx="33.8" cy="12.3" rx="2.1" ry="0.8" fill="#7aa8aa" opacity="0.7"/><ellipse cx="42.5" cy="45.8" rx="1.6" ry="0.6" fill="#30626a" opacity="0.7"/><ellipse cx="110.8" cy="47.9" rx="1.5" ry="0.8" fill="#4a7e84" opacity="0.7"/><ellipse cx="90.7" cy="44.6" rx="2.1" ry="0.5" fill="#94bcbc" opacity="0.7"/><ellipse cx="115.0" cy="41.0" rx="1.7" ry="0.4" fill="#94bcbc" opacity="0.7"/><ellipse cx="118.4" cy="7.5" rx="1.0" ry="0.7" fill="#5a8e92" opacity="0.7"/><ellipse cx="21.0" cy="50.8" rx="0.8" ry="0.5" fill="#5a8e92" opacity="0.7"/><ellipse cx="83.7" cy="2.2" rx="1.8" ry="0.4" fill="#5a8e92" opacity="0.7"/><ellipse cx="76.8" cy="18.9" rx="2.0" ry="0.4" fill="#4a7e84" opacity="0.7"/><ellipse cx="112.8" cy="47.5" rx="0.9" ry="0.5" fill="#94bcbc" opacity="0.7"/><ellipse cx="14.6" cy="1.8" rx="2.0" ry="0.7" fill="#5a8e92" opacity="0.7"/><ellipse cx="37.4" cy="5.2" rx="1.9" ry="0.7" fill="#5a8e92" opacity="0.7"/><ellipse cx="38.3" cy="17.5" rx="0.8" ry="0.5" fill="#30626a" opacity="0.7"/><ellipse cx="36.7" cy="37.2" rx="2.1" ry="0.8" fill="#30626a" opacity="0.7"/><ellipse cx="78.3" cy="24.8" rx="1.7" ry="0.4" fill="#30626a" opacity="0.7"/><ellipse cx="53.7" cy="22.7" rx="1.3" ry="0.8" fill="#5a8e92" opacity="0.7"/><ellipse cx="69.9" cy="11.3" rx="1.6" ry="0.5" fill="#5a8e92" opacity="0.7"/><ellipse cx="56.7" cy="27.2" rx="1.9" ry="0.9" fill="#30626a" opacity="0.7"/><ellipse cx="0.6" cy="25.5" rx="1.8" ry="0.8" fill="#94bcbc" opacity="0.7"/></g>
  <g filter="url(#fb)"><path d="M35 56 Q55 42 62 32 Q70 20 90 8 L92 28 Q76 40 72 56 Z" fill="#a8c6c6" opacity="0.75"/><ellipse cx="70" cy="33" rx="12" ry="8" fill="#c8dcda" opacity="0.8"/><ellipse cx="20" cy="40" rx="20" ry="10" fill="#2e5e64" opacity="0.6"/></g>
 </svg>
</div>
<div class="a" style="left:385.5px;top:786px;width:110.5px;height:52px;border-radius:5px;overflow:hidden;background:#dedbd4">
 <svg class="a" style="left:0;top:0" width="111" height="52" viewBox="0 0 111 52">
  <defs><linearGradient id="rg3" x1="0" x2="1"><stop offset="0" stop-color="#c4ccc8"/><stop offset="0.3" stop-color="#e2e0da"/><stop offset="0.8" stop-color="#e6e2dc"/><stop offset="1" stop-color="#ccd2d0"/></linearGradient></defs>
  <rect width="111" height="52" fill="url(#rg3)"/>
  <rect x="9" y="13" width="16" height="31" fill="#a8c8c8"/><rect x="12" y="16" width="10" height="25" fill="#a6c4c4"/>
  <rect x="30" y="12" width="26" height="40" fill="#9cc0c2"/><rect x="33" y="15" width="9" height="37" fill="#b8d2d2"/><rect x="44" y="15" width="9" height="37" fill="#b8d2d2"/>
  <rect x="62" y="13" width="17" height="30" fill="#a8c8c8"/><rect x="65" y="16" width="11" height="24" fill="#a6c4c4"/>
  <rect x="86" y="0" width="10" height="52" fill="#ecebe6"/>
  <rect x="101" y="13" width="10" height="30" fill="#a8c8c8"/>
  <rect x="46" y="3" width="4" height="6" rx="2" fill="#4a4a48"/>
  <rect x="10" y="43" width="14" height="3" fill="#5a5a58"/><rect x="100" y="43" width="10" height="3" fill="#5a5a58"/>
 </svg>
</div>
<div class="a" style="left:500.5px;top:786px;width:104.5px;height:52px;border-radius:5px;overflow:hidden;background:#6a90b6">
 <svg class="a" style="left:0;top:0" width="105" height="52" viewBox="0 0 105 52">
  <defs><linearGradient id="sk4" x1="0" y1="0" x2="0" y2="1"><stop offset="0" stop-color="#5a82aa"/><stop offset="1" stop-color="#88a6c0"/></linearGradient></defs>
  <rect width="105" height="52" fill="url(#sk4)"/>
  <path d="M0 38 L20 34 L45 32 L70 38 L92 36 L92 52 L0 52 Z" fill="#b8b0aa"/>
  <path d="M15 40 L40 36 L60 42 L92 44 L92 52 L10 52 Z" fill="#c8c0ba"/>
  <path d="M0 36 L18 44 L18 52 L0 52 Z" fill="#3e4c58"/>
  <rect x="41" y="20" width="8" height="16" fill="#e4e0dc"/><rect x="43" y="24" width="2" height="10" fill="#3a3a3a"/>
  <path d="M45 20 L38 10 M45 20 L55 12 M45 20 L56 24 M45 20 L36 24 M45 20 L47 8" stroke="#2a3440" stroke-width="0.7"/>
  <rect x="92" width="13" height="52" fill="#7c9ab6"/><path d="M92 38 L105 46 L105 52 L92 52 Z" fill="#3e4c58"/>
 </svg>
</div>
<div class="a" style="left:609.5px;top:786px;width:116px;height:52px;border-radius:5px;overflow:hidden;background:#d8e2e4">
 <svg class="a" style="left:0;top:0" width="116" height="52" viewBox="0 0 116 52">
  <defs><linearGradient id="sk5" x1="0" y1="0" x2="0" y2="1"><stop offset="0" stop-color="#bcd4dc"/><stop offset="1" stop-color="#e6e8e4"/></linearGradient><filter id="fb5"><feGaussianBlur stdDeviation="0.35"/></filter></defs>
  <rect width="116" height="52" fill="url(#sk5)"/>
  <rect x="92" y="0" width="24" height="27" fill="#dde5e6"/>
  <rect x="0" y="26" width="116" height="3" fill="#4e6e84"/>
  <rect x="0" y="29" width="116" height="23" fill="#e8eaee"/>
  <g filter="url(#fb5)"><rect x="54" y="36" width="4" height="6" fill="#f4f4f6"/><rect x="39" y="38" width="8" height="4" fill="#dfe6ee"/><rect x="81" y="44" width="5" height="7" fill="#b89888"/><rect x="18" y="32" width="4" height="5" fill="#dfe6ee"/><rect x="7" y="43" width="10" height="6" fill="#9fb0c4"/><rect x="24" y="32" width="10" height="6" fill="#9fb0c4"/><rect x="106" y="36" width="6" height="2" fill="#f4f4f6"/><rect x="102" y="28" width="6" height="4" fill="#f4f4f6"/><rect x="27" y="44" width="11" height="7" fill="#f4f4f6"/><rect x="14" y="40" width="11" height="3" fill="#f4f4f6"/><rect x="104" y="30" width="11" height="5" fill="#dfe6ee"/><rect x="58" y="48" width="7" height="4" fill="#f4f4f6"/><rect x="81" y="30" width="11" height="6" fill="#f4f4f6"/><rect x="6" y="40" width="8" height="3" fill="#9fb0c4"/><rect x="85" y="40" width="3" height="6" fill="#b89888"/><rect x="110" y="32" width="9" height="2" fill="#d8c4b4"/><rect x="98" y="39" width="8" height="5" fill="#d8c4b4"/><rect x="13" y="47" width="6" height="3" fill="#c8d4e0"/><rect x="114" y="40" width="3" height="6" fill="#d8c4b4"/><rect x="0" y="30" width="5" height="3" fill="#f4f4f6"/><rect x="36" y="34" width="8" height="2" fill="#b89888"/><rect x="91" y="46" width="7" height="6" fill="#c8d4e0"/><rect x="66" y="29" width="9" height="2" fill="#b89888"/><rect x="59" y="49" width="8" height="3" fill="#9fb0c4"/><rect x="20" y="46" width="5" height="2" fill="#e8ecf0"/><rect x="31" y="31" width="4" height="3" fill="#f4f4f6"/><rect x="7" y="32" width="6" height="5" fill="#d8c4b4"/><rect x="33" y="38" width="5" height="7" fill="#ffffff"/><rect x="34" y="30" width="7" height="3" fill="#ffffff"/><rect x="89" y="36" width="11" height="3" fill="#9fb0c4"/><rect x="90" y="47" width="7" height="2" fill="#f4f4f6"/><rect x="32" y="30" width="10" height="6" fill="#e8ecf0"/><rect x="90" y="32" width="3" height="3" fill="#6c7888"/><rect x="69" y="40" width="4" height="5" fill="#dfe6ee"/><rect x="110" y="39" width="11" height="2" fill="#dfe6ee"/><rect x="103" y="40" width="8" height="5" fill="#f4f4f6"/><rect x="102" y="40" width="12" height="2" fill="#c8d4e0"/><rect x="84" y="29" width="9" height="4" fill="#6c7888"/><rect x="103" y="44" width="9" height="2" fill="#c8d4e0"/><rect x="102" y="32" width="10" height="6" fill="#dfe6ee"/><rect x="58" y="33" width="9" height="2" fill="#f4f4f6"/><rect x="79" y="36" width="4" height="3" fill="#dfe6ee"/><rect x="87" y="29" width="3" height="5" fill="#ffffff"/><rect x="62" y="28" width="10" height="4" fill="#d8c4b4"/><rect x="1" y="49" width="8" height="7" fill="#6c7888"/><rect x="97" y="29" width="6" height="3" fill="#e8ecf0"/><rect x="22" y="32" width="4" height="3" fill="#f4f4f6"/><rect x="43" y="44" width="7" height="5" fill="#d8c4b4"/><rect x="101" y="29" width="3" height="6" fill="#c8d4e0"/><rect x="2" y="33" width="8" height="7" fill="#ffffff"/><rect x="93" y="28" width="5" height="6" fill="#dfe6ee"/><rect x="101" y="42" width="9" height="3" fill="#f4f4f6"/><rect x="93" y="49" width="10" height="7" fill="#f4f4f6"/><rect x="102" y="48" width="12" height="2" fill="#d8c4b4"/><rect x="51" y="37" width="6" height="5" fill="#b89888"/><rect x="50" y="29" width="6" height="4" fill="#dfe6ee"/><rect x="53" y="36" width="6" height="2" fill="#f4f4f6"/><rect x="20" y="40" width="5" height="6" fill="#e8ecf0"/><rect x="109" y="29" width="12" height="7" fill="#dfe6ee"/><rect x="88" y="47" width="10" height="3" fill="#ffffff"/><rect x="89" y="29" width="9" height="4" fill="#c8d4e0"/><rect x="101" y="34" width="11" height="5" fill="#f4f4f6"/><rect x="54" y="27" width="11" height="3" fill="#c8d4e0"/><rect x="1" y="48" width="3" height="3" fill="#e8ecf0"/><rect x="80" y="39" width="10" height="4" fill="#b89888"/><rect x="45" y="40" width="11" height="5" fill="#d8c4b4"/><rect x="42" y="33" width="6" height="4" fill="#e8ecf0"/><rect x="93" y="45" width="5" height="3" fill="#9fb0c4"/><rect x="79" y="27" width="7" height="6" fill="#b89888"/><rect x="105" y="44" width="5" height="3" fill="#6c7888"/><rect x="56" y="50" width="5" height="3" fill="#d8c4b4"/><rect x="86" y="28" width="6" height="4" fill="#dfe6ee"/><rect x="22" y="45" width="9" height="2" fill="#e8ecf0"/><rect x="40" y="44" width="4" height="4" fill="#ffffff"/><rect x="24" y="43" width="7" height="6" fill="#f4f4f6"/><rect x="109" y="43" width="7" height="2" fill="#b89888"/><rect x="103" y="37" width="10" height="3" fill="#f4f4f6"/><rect x="106" y="49" width="4" height="4" fill="#c8d4e0"/><rect x="89" y="49" width="5" height="5" fill="#ffffff"/><rect x="39" y="32" width="12" height="2" fill="#dfe6ee"/><rect x="67" y="32" width="10" height="3" fill="#e8ecf0"/><rect x="38" y="36" width="4" height="6" fill="#c8d4e0"/><rect x="53" y="49" width="3" height="3" fill="#e8ecf0"/><rect x="102" y="43" width="9" height="6" fill="#dfe6ee"/><rect x="44" y="44" width="11" height="5" fill="#b89888"/><rect x="4" y="50" width="4" height="4" fill="#e8ecf0"/><rect x="97" y="42" width="9" height="5" fill="#6c7888"/><rect x="60" y="33" width="9" height="7" fill="#d8c4b4"/><rect x="62" y="50" width="10" height="5" fill="#6c7888"/><rect x="36" y="47" width="5" height="2" fill="#6c7888"/><rect x="84" y="33" width="6" height="2" fill="#b89888"/><rect x="109" y="36" width="9" height="4" fill="#e8ecf0"/><rect x="64" y="28" width="10" height="3" fill="#f4f4f6"/><rect x="24" y="33" width="11" height="4" fill="#d8c4b4"/><rect x="65" y="43" width="4" height="6" fill="#b89888"/><rect x="109" y="28" width="8" height="5" fill="#b89888"/><rect x="42" y="42" width="11" height="4" fill="#ffffff"/><rect x="60" y="36" width="4" height="5" fill="#9fb0c4"/><rect x="53" y="34" width="10" height="5" fill="#f4f4f6"/><rect x="7" y="35" width="10" height="5" fill="#b89888"/><rect x="30" y="37" width="4" height="7" fill="#b89888"/><rect x="59" y="44" width="4" height="3" fill="#d8c4b4"/><rect x="49" y="27" width="7" height="4" fill="#c8d4e0"/><rect x="113" y="49" width="12" height="3" fill="#f4f4f6"/><rect x="28" y="43" width="8" height="5" fill="#f4f4f6"/><rect x="23" y="41" width="6" height="3" fill="#e8ecf0"/><rect x="113" y="29" width="8" height="4" fill="#b89888"/><rect x="103" y="32" width="7" height="5" fill="#6c7888"/><rect x="94" y="39" width="12" height="7" fill="#ffffff"/><rect x="90" y="38" width="8" height="5" fill="#6c7888"/><rect x="95" y="29" width="10" height="6" fill="#d8c4b4"/><rect x="9" y="38" width="8" height="5" fill="#e8ecf0"/><rect x="115" y="38" width="7" height="4" fill="#f4f4f6"/><rect x="67" y="27" width="6" height="6" fill="#f4f4f6"/><rect x="100" y="40" width="5" height="5" fill="#9fb0c4"/><rect x="1" y="47" width="8" height="4" fill="#ffffff"/><rect x="111" y="50" width="6" height="3" fill="#d8c4b4"/><rect x="81" y="34" width="7" height="6" fill="#d8c4b4"/><rect x="108" y="34" width="4" height="5" fill="#9fb0c4"/><rect x="92" y="41" width="10" height="2" fill="#b89888"/><rect x="27" y="34" width="6" height="5" fill="#c8d4e0"/><rect x="19" y="43" width="4" height="2" fill="#f4f4f6"/><rect x="90" y="47" width="6" height="4" fill="#9fb0c4"/><rect x="90" y="37" width="5" height="6" fill="#9fb0c4"/><rect x="105" y="29" width="10" height="6" fill="#9fb0c4"/><rect x="73" y="33" width="5" height="5" fill="#c8d4e0"/><rect x="57" y="39" width="7" height="6" fill="#9fb0c4"/><rect x="54" y="36" width="4" height="3" fill="#e8ecf0"/><rect x="84" y="31" width="3" height="5" fill="#e8ecf0"/><rect x="53" y="30" width="4" height="5" fill="#b89888"/><rect x="63" y="46" width="4" height="4" fill="#c8d4e0"/><rect x="42" y="48" width="4" height="2" fill="#d8c4b4"/><rect x="65" y="49" width="9" height="5" fill="#ffffff"/><rect x="104" y="49" width="9" height="3" fill="#dfe6ee"/><rect x="39" y="35" width="6" height="3" fill="#dfe6ee"/><rect x="19" y="46" width="4" height="3" fill="#e8ecf0"/><rect x="93" y="27" width="9" height="5" fill="#b89888"/><rect x="15" y="43" width="9" height="5" fill="#6c7888"/><rect x="9" y="30" width="4" height="5" fill="#e8ecf0"/><rect x="55" y="33" width="6" height="6" fill="#dfe6ee"/><rect x="67" y="33" width="4" height="3" fill="#6c7888"/><rect x="101" y="44" width="8" height="6" fill="#9fb0c4"/><rect x="23" y="43" width="9" height="6" fill="#f4f4f6"/><rect x="22" y="45" width="9" height="6" fill="#f4f4f6"/><rect x="99" y="43" width="3" height="6" fill="#c8d4e0"/><rect x="35" y="47" width="6" height="2" fill="#ffffff"/><rect x="114" y="32" width="11" height="3" fill="#f4f4f6"/><rect x="9" y="34" width="7" height="5" fill="#dfe6ee"/><rect x="77" y="41" width="4" height="7" fill="#9fb0c4"/><rect x="89" y="33" width="4" height="4" fill="#f4f4f6"/><rect x="99" y="45" width="9" height="7" fill="#dfe6ee"/><rect x="28" y="28" width="3" height="2" fill="#d8c4b4"/><rect x="81" y="30" width="12" height="5" fill="#dfe6ee"/><rect x="80" y="39" width="6" height="6" fill="#6c7888"/><rect x="69" y="32" width="7" height="3" fill="#f4f4f6"/><rect x="55" y="32" width="7" height="4" fill="#b89888"/><rect x="43" y="31" width="7" height="2" fill="#f4f4f6"/><rect x="16" y="46" width="4" height="3" fill="#9fb0c4"/><rect x="14" y="33" width="7" height="7" fill="#b89888"/><rect x="25" y="42" width="10" height="5" fill="#d8c4b4"/><rect x="41" y="32" width="11" height="6" fill="#d8c4b4"/><rect x="84" y="41" width="4" height="7" fill="#b89888"/><rect x="73" y="43" width="8" height="2" fill="#d8c4b4"/><rect x="21" y="44" width="7" height="2" fill="#f4f4f6"/><rect x="90" y="38" width="3" height="7" fill="#b89888"/><rect x="6" y="37" width="6" height="5" fill="#f4f4f6"/><rect x="49" y="29" width="8" height="4" fill="#f4f4f6"/><rect x="82" y="47" width="7" height="2" fill="#d8c4b4"/><rect x="50" y="35" width="8" height="6" fill="#b89888"/><rect x="40" y="49" width="3" height="3" fill="#f4f4f6"/></g>
  <path d="M2 30 Q10 23 20 28 L20 34 L2 34 Z" fill="#c4a08c"/>
  <path d="M0 47 L30 42 L30 45 L0 50 Z" fill="#a84a4a"/>
  <path d="M92 44 L116 40 L116 43 L92 47 Z" fill="#a84a4a"/>
  <path d="M94 30 Q102 23 112 28 L112 34 L94 34 Z" fill="#c4a08c"/>
 </svg>
</div>
<div class="a" style="left:729.5px;top:786px;width:109.5px;height:52px;border-radius:5px;overflow:hidden;background:#a8a496">
 <svg class="a" style="left:0;top:0" width="110" height="52" viewBox="0 0 110 52">
  <defs><filter id="fb6"><feGaussianBlur stdDeviation="1.2"/></filter></defs>
  <rect width="110" height="14" fill="#7896a2"/>
  <g filter="url(#fb6)"><path d="M55 2 L60 10 M62 1 L66 9 M70 3 L80 8 M82 2 L90 7" stroke="#e8eef0" stroke-width="2.5"/></g>
  <path d="M0 11 L40 12 L92 16 L92 30 L0 30 Z" fill="#3c6274"/>
  <path d="M0 11 L40 12 L92 16 L92 18 L0 14 Z" fill="#36505c"/>
  <rect x="0" y="30" width="110" height="22" fill="#a9a497"/>
  <ellipse cx="50" cy="40" rx="20" ry="5" fill="#989488"/>
  <rect x="82" y="29" width="10" height="3" fill="#3a3a36"/><circle cx="5" cy="31" r="1.2" fill="#6a5a30"/>
  <rect x="92" width="18" height="16" fill="#7a96a0"/><rect x="92" y="15" width="18" height="15" fill="#3a5e70"/><rect x="92" y="30" width="18" height="22" fill="#a6a295"/>
 </svg>
</div>
<div class="a" style="left:270px;top:802px;width:19.5px;height:20px;border-radius:4px;background:rgba(72,72,96,0.88)"></div>
<svg style="left:270px;top:802px" width="20" height="20" viewBox="0 0 20 20"><path d="M3.6 7.6 H6.2 L10.6 4 V16 L6.2 12.4 H3.6 Z M12.9 7.9 Q14 10 12.9 12.1 M14.9 6.2 Q16.8 10 14.9 13.8" fill="none" stroke="#e6e6f0" stroke-width="0.95" stroke-linejoin="round"/></svg><div class="a" style="left:404px;top:802px;width:19.5px;height:20px;border-radius:4px;background:rgba(72,72,96,0.88)"></div>
<svg style="left:404px;top:802px" width="20" height="20" viewBox="0 0 20 20"><path d="M3.6 7.6 H6.2 L10.6 4 V16 L6.2 12.4 H3.6 Z M12.9 7.9 Q14 10 12.9 12.1 M14.9 6.2 Q16.8 10 14.9 13.8" fill="none" stroke="#e6e6f0" stroke-width="0.95" stroke-linejoin="round"/></svg><div class="a" style="left:518.5px;top:802px;width:19.5px;height:20px;border-radius:4px;background:rgba(72,72,96,0.88)"></div>
<svg style="left:518.5px;top:802px" width="20" height="20" viewBox="0 0 20 20"><path d="M3.6 7.6 H6.2 L10.6 4 V16 L6.2 12.4 H3.6 Z M12.9 7.9 Q14 10 12.9 12.1 M14.9 6.2 Q16.8 10 14.9 13.8" fill="none" stroke="#e6e6f0" stroke-width="0.95" stroke-linejoin="round"/></svg><div class="a" style="left:748px;top:802px;width:19.5px;height:20px;border-radius:4px;background:rgba(72,72,96,0.88)"></div>
<svg style="left:748px;top:802px" width="20" height="20" viewBox="0 0 20 20"><path d="M3.6 7.6 H6.2 L10.6 4 V16 L6.2 12.4 H3.6 Z M12.9 7.9 Q14 10 12.9 12.1 M14.9 6.2 Q16.8 10 14.9 13.8" fill="none" stroke="#e6e6f0" stroke-width="0.95" stroke-linejoin="round"/></svg><!-- AUDIO CLIP -->
<div class="a wv" style="left:82px;top:846px;width:757px;height:28px;background:#4479e6;border-radius:4px;overflow:hidden">
<i style="left:27.7px;top:9.3px;height:9.8px;opacity:0.3"></i><i style="left:30.3px;top:10.1px;height:8.2px;opacity:0.3"></i><i style="left:32.8px;top:9.7px;height:8.9px;opacity:0.3"></i><i style="left:35.4px;top:10.0px;height:8.5px;opacity:0.3"></i><i style="left:38.0px;top:9.7px;height:9.1px;opacity:0.3"></i><i style="left:40.6px;top:9.6px;height:9.1px;opacity:0.3"></i><i style="left:43.1px;top:10.2px;height:8.0px;opacity:0.3"></i><i style="left:45.7px;top:10.0px;height:8.4px;opacity:0.3"></i><i style="left:48.3px;top:9.9px;height:8.6px;opacity:0.3"></i><i style="left:50.8px;top:9.3px;height:9.8px;opacity:0.3"></i><i style="left:53.4px;top:9.4px;height:9.5px;opacity:0.3"></i><i style="left:56.0px;top:10.0px;height:8.3px;opacity:0.3"></i><i style="left:58.5px;top:9.4px;height:9.6px;opacity:0.3"></i><i style="left:61.1px;top:10.1px;height:8.3px;opacity:0.3"></i><i style="left:63.7px;top:9.6px;height:9.2px;opacity:0.3"></i><i style="left:66.2px;top:10.1px;height:8.3px;opacity:0.3"></i><i style="left:68.8px;top:10.2px;height:8.0px;opacity:0.3"></i><i style="left:71.4px;top:9.3px;height:9.7px;opacity:0.3"></i><i style="left:74.0px;top:10.0px;height:8.4px;opacity:0.3"></i><i style="left:76.5px;top:10.0px;height:8.4px;opacity:0.3"></i><i style="left:79.1px;top:9.2px;height:10.0px;opacity:0.3"></i><i style="left:81.7px;top:9.3px;height:9.7px;opacity:0.3"></i><i style="left:84.2px;top:9.9px;height:8.6px;opacity:0.3"></i><i style="left:86.8px;top:9.2px;height:9.9px;opacity:0.3"></i><i style="left:89.4px;top:9.7px;height:9.1px;opacity:0.3"></i><i style="left:91.9px;top:9.5px;height:9.4px;opacity:0.3"></i><i style="left:94.5px;top:10.0px;height:8.4px;opacity:0.3"></i><i style="left:97.1px;top:9.3px;height:9.9px;opacity:0.3"></i><i style="left:99.7px;top:9.5px;height:9.4px;opacity:0.3"></i><i style="left:102.2px;top:9.2px;height:9.9px;opacity:0.3"></i><i style="left:104.8px;top:9.3px;height:9.8px;opacity:0.3"></i><i style="left:107.4px;top:8.8px;height:10.7px;opacity:0.3"></i><i style="left:109.9px;top:8.4px;height:11.6px;opacity:0.3"></i><i style="left:112.5px;top:8.6px;height:11.2px;opacity:0.3"></i><i style="left:115.1px;top:8.8px;height:10.8px;opacity:0.3"></i><i style="left:117.6px;top:9.0px;height:10.5px;opacity:0.3"></i><i style="left:120.2px;top:9.1px;height:10.2px;opacity:0.3"></i><i style="left:122.8px;top:9.2px;height:9.9px;opacity:0.3"></i><i style="left:125.4px;top:9.4px;height:9.7px;opacity:0.3"></i><i style="left:127.9px;top:9.5px;height:9.5px;opacity:0.3"></i><i style="left:130.5px;top:9.6px;height:9.3px;opacity:0.3"></i><i style="left:133.1px;top:9.6px;height:9.1px;opacity:0.3"></i><i style="left:135.6px;top:9.4px;height:9.6px;opacity:0.3"></i><i style="left:138.2px;top:9.7px;height:9.0px;opacity:0.3"></i><i style="left:140.8px;top:9.8px;height:8.8px;opacity:0.3"></i><i style="left:143.3px;top:9.7px;height:9.0px;opacity:0.3"></i><i style="left:145.9px;top:9.5px;height:9.4px;opacity:0.3"></i><i style="left:148.5px;top:9.9px;height:8.5px;opacity:0.3"></i><i style="left:151.1px;top:9.2px;height:10.0px;opacity:0.3"></i><i style="left:153.6px;top:10.0px;height:8.4px;opacity:0.3"></i><i style="left:156.2px;top:9.5px;height:9.5px;opacity:0.3"></i><i style="left:158.8px;top:9.4px;height:9.7px;opacity:0.3"></i><i style="left:161.3px;top:10.1px;height:8.3px;opacity:0.3"></i><i style="left:163.9px;top:9.4px;height:9.6px;opacity:0.3"></i><i style="left:166.5px;top:9.8px;height:8.7px;opacity:0.3"></i><i style="left:169.0px;top:8.8px;height:10.8px;opacity:0.3"></i><i style="left:171.6px;top:8.9px;height:10.5px;opacity:0.3"></i><i style="left:174.2px;top:9.1px;height:10.2px;opacity:0.3"></i><i style="left:176.8px;top:9.2px;height:9.9px;opacity:0.3"></i><i style="left:179.3px;top:9.2px;height:9.9px;opacity:0.3"></i><i style="left:181.9px;top:9.5px;height:9.5px;opacity:0.3"></i><i style="left:184.5px;top:9.4px;height:9.5px;opacity:0.3"></i><i style="left:187.0px;top:9.3px;height:9.9px;opacity:0.3"></i><i style="left:189.6px;top:9.3px;height:9.9px;opacity:0.3"></i><i style="left:192.2px;top:9.8px;height:8.9px;opacity:0.3"></i><i style="left:194.7px;top:9.8px;height:8.8px;opacity:0.3"></i><i style="left:197.3px;top:9.7px;height:9.0px;opacity:0.3"></i><i style="left:199.9px;top:9.4px;height:9.6px;opacity:0.3"></i><i style="left:202.5px;top:9.9px;height:8.5px;opacity:0.3"></i><i style="left:205.0px;top:9.5px;height:9.5px;opacity:0.3"></i><i style="left:207.6px;top:9.4px;height:9.6px;opacity:0.3"></i><i style="left:210.2px;top:9.3px;height:9.7px;opacity:0.3"></i><i style="left:212.7px;top:10.0px;height:8.3px;opacity:0.3"></i><i style="left:215.3px;top:9.3px;height:9.9px;opacity:0.3"></i><i style="left:217.9px;top:10.1px;height:8.2px;opacity:0.3"></i><i style="left:220.4px;top:9.9px;height:8.7px;opacity:0.3"></i><i style="left:223.0px;top:9.6px;height:9.2px;opacity:0.3"></i><i style="left:225.6px;top:7.8px;height:12.9px;opacity:0.3"></i><i style="left:228.2px;top:8.1px;height:12.3px;opacity:0.3"></i><i style="left:230.7px;top:8.3px;height:11.8px;opacity:0.3"></i><i style="left:233.3px;top:8.5px;height:11.3px;opacity:0.3"></i><i style="left:235.9px;top:8.7px;height:10.9px;opacity:0.3"></i><i style="left:238.4px;top:8.9px;height:10.6px;opacity:0.3"></i><i style="left:241.0px;top:9.1px;height:10.2px;opacity:0.3"></i><i style="left:243.6px;top:9.2px;height:10.0px;opacity:0.3"></i><i style="left:246.1px;top:9.3px;height:9.7px;opacity:0.3"></i><i style="left:248.7px;top:9.4px;height:9.5px;opacity:0.3"></i><i style="left:251.3px;top:9.2px;height:10.0px;opacity:0.3"></i><i style="left:253.9px;top:9.6px;height:9.2px;opacity:0.3"></i><i style="left:256.4px;top:9.7px;height:9.0px"></i><i style="left:259.0px;top:9.2px;height:10.0px"></i><i style="left:261.6px;top:9.7px;height:9.1px"></i><i style="left:264.1px;top:9.8px;height:8.8px"></i><i style="left:266.7px;top:9.9px;height:8.6px"></i><i style="left:269.3px;top:9.6px;height:9.2px"></i><i style="left:271.8px;top:9.4px;height:9.7px"></i><i style="left:274.4px;top:9.7px;height:8.9px"></i><i style="left:277.0px;top:9.8px;height:8.8px"></i><i style="left:279.6px;top:10.0px;height:8.3px"></i><i style="left:282.1px;top:9.3px;height:9.8px"></i><i style="left:284.7px;top:10.1px;height:8.3px"></i><i style="left:287.3px;top:9.7px;height:9.0px"></i><i style="left:289.8px;top:9.4px;height:9.7px"></i><i style="left:292.4px;top:10.1px;height:8.3px"></i><i style="left:295.0px;top:9.5px;height:9.5px"></i><i style="left:297.5px;top:9.3px;height:9.9px"></i><i style="left:300.1px;top:9.6px;height:9.3px"></i><i style="left:302.7px;top:9.4px;height:9.6px"></i><i style="left:305.3px;top:10.1px;height:8.2px"></i><i style="left:307.8px;top:9.8px;height:8.9px"></i><i style="left:310.4px;top:10.1px;height:8.3px"></i><i style="left:313.0px;top:9.4px;height:9.7px"></i><i style="left:315.5px;top:9.9px;height:8.6px"></i><i style="left:318.1px;top:9.7px;height:8.9px"></i><i style="left:320.7px;top:9.2px;height:10.0px"></i><i style="left:323.2px;top:9.3px;height:9.7px"></i><i style="left:325.8px;top:9.2px;height:10.0px"></i><i style="left:328.4px;top:9.7px;height:8.9px"></i><i style="left:331.0px;top:9.7px;height:9.0px"></i><i style="left:333.5px;top:7.4px;height:13.6px"></i><i style="left:336.1px;top:5.5px;height:17.5px"></i><i style="left:338.7px;top:6.0px;height:16.3px"></i><i style="left:341.2px;top:6.5px;height:15.3px"></i><i style="left:343.8px;top:7.0px;height:14.4px"></i><i style="left:346.4px;top:7.4px;height:13.7px"></i><i style="left:348.9px;top:7.7px;height:13.0px"></i><i style="left:351.5px;top:8.0px;height:12.4px"></i><i style="left:354.1px;top:8.3px;height:11.9px"></i><i style="left:356.7px;top:8.5px;height:11.4px"></i><i style="left:359.2px;top:8.7px;height:11.0px"></i><i style="left:361.8px;top:8.9px;height:10.6px"></i><i style="left:364.4px;top:9.0px;height:10.3px"></i><i style="left:366.9px;top:9.2px;height:10.0px"></i><i style="left:369.5px;top:9.3px;height:9.8px"></i><i style="left:372.1px;top:9.4px;height:9.6px"></i><i style="left:374.6px;top:9.4px;height:9.6px"></i><i style="left:377.2px;top:9.4px;height:9.5px"></i><i style="left:379.8px;top:9.5px;height:9.4px"></i><i style="left:382.4px;top:9.5px;height:9.3px"></i><i style="left:384.9px;top:9.4px;height:9.5px"></i><i style="left:387.5px;top:9.8px;height:8.7px"></i><i style="left:390.1px;top:11.1px;height:6.3px"></i><i style="left:392.6px;top:10.8px;height:6.8px"></i><i style="left:395.2px;top:11.1px;height:6.3px"></i><i style="left:397.8px;top:10.9px;height:6.6px"></i><i style="left:400.3px;top:11.2px;height:6.0px"></i><i style="left:402.9px;top:11.1px;height:6.3px"></i><i style="left:405.5px;top:11.0px;height:6.5px"></i><i style="left:408.1px;top:10.9px;height:6.6px"></i><i style="left:410.6px;top:11.0px;height:6.3px"></i><i style="left:413.2px;top:10.8px;height:6.7px"></i><i style="left:415.8px;top:11.0px;height:6.4px"></i><i style="left:418.3px;top:10.8px;height:6.9px"></i><i style="left:420.9px;top:10.7px;height:7.0px"></i><i style="left:423.5px;top:9.2px;height:9.9px"></i><i style="left:426.0px;top:9.7px;height:9.0px"></i><i style="left:428.6px;top:9.7px;height:9.1px"></i><i style="left:431.2px;top:10.0px;height:8.3px"></i><i style="left:433.8px;top:9.4px;height:9.7px"></i><i style="left:436.3px;top:9.3px;height:9.9px"></i><i style="left:438.9px;top:9.7px;height:9.0px"></i><i style="left:441.5px;top:7.9px;height:12.7px"></i><i style="left:444.0px;top:5.9px;height:16.5px"></i><i style="left:446.6px;top:6.4px;height:15.5px"></i><i style="left:449.2px;top:6.9px;height:14.6px"></i><i style="left:451.7px;top:7.3px;height:13.8px"></i><i style="left:454.3px;top:7.6px;height:13.1px"></i><i style="left:456.9px;top:8.0px;height:12.5px"></i><i style="left:459.5px;top:8.2px;height:12.0px"></i><i style="left:462.0px;top:8.5px;height:11.5px"></i><i style="left:464.6px;top:8.7px;height:11.1px"></i><i style="left:467.2px;top:8.9px;height:10.7px"></i><i style="left:469.7px;top:9.0px;height:10.4px"></i><i style="left:472.3px;top:9.2px;height:10.1px"></i><i style="left:474.9px;top:9.3px;height:9.8px"></i><i style="left:477.4px;top:9.4px;height:9.6px"></i><i style="left:480.0px;top:9.5px;height:9.4px"></i><i style="left:482.6px;top:9.6px;height:9.2px"></i><i style="left:485.2px;top:9.5px;height:9.4px"></i><i style="left:487.7px;top:9.6px;height:9.3px"></i><i style="left:490.3px;top:9.8px;height:8.8px"></i><i style="left:492.9px;top:9.7px;height:8.9px"></i><i style="left:495.4px;top:9.9px;height:8.7px"></i><i style="left:498.0px;top:9.9px;height:8.6px"></i><i style="left:500.6px;top:9.9px;height:8.5px"></i><i style="left:503.1px;top:8.7px;height:11.0px"></i><i style="left:505.7px;top:8.9px;height:10.6px"></i><i style="left:508.3px;top:9.0px;height:10.3px"></i><i style="left:510.9px;top:9.2px;height:10.0px"></i><i style="left:513.4px;top:9.3px;height:9.8px"></i><i style="left:516.0px;top:9.4px;height:9.6px"></i><i style="left:518.6px;top:9.5px;height:9.4px"></i><i style="left:521.1px;top:9.6px;height:9.2px"></i><i style="left:523.7px;top:9.7px;height:9.1px"></i><i style="left:526.3px;top:9.3px;height:9.8px"></i><i style="left:528.8px;top:9.8px;height:8.8px"></i><i style="left:531.4px;top:9.8px;height:8.8px"></i><i style="left:534.0px;top:9.9px;height:8.6px"></i><i style="left:536.6px;top:9.8px;height:8.8px"></i><i style="left:539.1px;top:10.0px;height:8.5px"></i><i style="left:541.7px;top:9.4px;height:9.7px"></i><i style="left:544.3px;top:9.8px;height:8.7px"></i><i style="left:546.8px;top:10.0px;height:8.3px"></i><i style="left:549.4px;top:9.6px;height:9.2px"></i><i style="left:552.0px;top:10.1px;height:8.3px"></i><i style="left:554.5px;top:6.8px;height:14.8px"></i><i style="left:557.1px;top:6.6px;height:15.2px"></i><i style="left:559.7px;top:7.0px;height:14.3px"></i><i style="left:562.3px;top:7.4px;height:13.6px"></i><i style="left:564.8px;top:7.8px;height:12.9px"></i><i style="left:567.4px;top:8.0px;height:12.3px"></i><i style="left:570.0px;top:8.3px;height:11.8px"></i><i style="left:572.5px;top:8.5px;height:11.3px"></i><i style="left:575.1px;top:8.7px;height:10.9px"></i><i style="left:577.7px;top:8.9px;height:10.6px"></i><i style="left:580.3px;top:9.1px;height:10.3px"></i><i style="left:582.8px;top:9.2px;height:10.0px"></i><i style="left:585.4px;top:9.2px;height:9.9px"></i><i style="left:588.0px;top:9.2px;height:9.9px"></i><i style="left:590.5px;top:9.5px;height:9.4px"></i><i style="left:593.1px;top:9.4px;height:9.6px"></i><i style="left:595.7px;top:7.3px;height:13.8px"></i><i style="left:598.2px;top:7.6px;height:13.1px"></i><i style="left:600.8px;top:8.0px;height:12.5px"></i><i style="left:603.4px;top:8.2px;height:11.9px"></i><i style="left:606.0px;top:8.5px;height:11.5px"></i><i style="left:608.5px;top:8.7px;height:11.1px"></i><i style="left:611.1px;top:8.9px;height:10.7px"></i><i style="left:613.7px;top:9.0px;height:10.4px"></i><i style="left:616.2px;top:9.2px;height:10.1px"></i><i style="left:618.8px;top:9.3px;height:9.8px"></i><i style="left:621.4px;top:9.4px;height:9.6px"></i><i style="left:623.9px;top:9.5px;height:9.4px"></i><i style="left:626.5px;top:9.2px;height:9.9px"></i><i style="left:629.1px;top:9.7px;height:9.1px"></i><i style="left:631.7px;top:9.0px;height:10.3px"></i><i style="left:634.2px;top:5.7px;height:16.9px"></i><i style="left:636.8px;top:6.3px;height:15.8px"></i><i style="left:639.4px;top:6.8px;height:14.9px"></i><i style="left:641.9px;top:7.2px;height:14.1px"></i><i style="left:644.5px;top:7.5px;height:13.3px"></i><i style="left:647.1px;top:7.9px;height:12.7px"></i><i style="left:649.6px;top:8.1px;height:12.1px"></i><i style="left:652.2px;top:8.4px;height:11.6px"></i><i style="left:654.8px;top:8.6px;height:11.2px"></i><i style="left:657.4px;top:8.8px;height:10.8px"></i><i style="left:659.9px;top:9.0px;height:10.5px"></i><i style="left:662.5px;top:9.1px;height:10.2px"></i><i style="left:665.1px;top:7.5px;height:13.5px"></i><i style="left:667.6px;top:6.5px;height:15.4px"></i><i style="left:670.2px;top:7.0px;height:14.5px"></i><i style="left:672.8px;top:7.3px;height:13.7px"></i><i style="left:675.3px;top:7.7px;height:13.0px"></i><i style="left:677.9px;top:8.0px;height:12.4px"></i><i style="left:680.5px;top:8.3px;height:11.9px"></i><i style="left:683.1px;top:8.5px;height:11.4px"></i><i style="left:685.6px;top:8.7px;height:11.0px"></i><i style="left:688.2px;top:8.9px;height:10.6px"></i><i style="left:690.8px;top:9.0px;height:10.3px"></i><i style="left:693.3px;top:9.2px;height:9.9px"></i><i style="left:695.9px;top:9.9px;height:8.7px"></i><i style="left:698.5px;top:10.3px;height:7.8px"></i><i style="left:701.0px;top:11.0px;height:6.4px"></i><i style="left:703.6px;top:11.5px;height:5.3px"></i><i style="left:706.2px;top:12.1px;height:4.3px"></i><i style="left:708.8px;top:12.5px;height:3.4px"></i><i style="left:711.3px;top:13.0px;height:2.5px"></i><i style="left:713.9px;top:13.2px;height:2.0px"></i><i style="left:716.5px;top:13.2px;height:2.0px"></i><i style="left:719.0px;top:13.2px;height:2.0px"></i><i style="left:721.6px;top:13.2px;height:2.0px"></i><i style="left:724.2px;top:13.2px;height:2.0px"></i><i style="left:726.7px;top:13.2px;height:2.0px"></i><i style="left:729.3px;top:13.2px;height:2.0px"></i><i style="left:731.9px;top:13.2px;height:2.0px"></i><i style="left:734.5px;top:13.2px;height:2.0px"></i><i style="left:737.0px;top:13.2px;height:2.0px"></i><i style="left:739.6px;top:13.2px;height:2.0px"></i><i style="left:742.2px;top:13.2px;height:2.0px"></i><i style="left:744.7px;top:13.2px;height:2.0px"></i><i style="left:747.3px;top:13.2px;height:2.0px"></i><i style="left:749.9px;top:13.2px;height:2.0px"></i><i style="left:752.4px;top:13.2px;height:2.0px"></i>
</div>
<svg style="left:91px;top:853px" width="12" height="13" viewBox="0 0 12 13">
  <path d="M3.5 11 V2.5 L11 0.8 V9" fill="none" stroke="#cfe0ff" stroke-width="1.3"/>
  <circle cx="2.5" cy="11" r="1.9" fill="#cfe0ff"/><circle cx="9.5" cy="9.5" r="1.9" fill="#cfe0ff"/>
  <path d="M3.5 4.5 L11 2.8" stroke="#cfe0ff" stroke-width="1.3"/>
</svg>
<div class="a" style="left:112.5px;top:853px;font-size:12px;line-height:15px;color:#fff;-webkit-text-stroke:0.25px #fff;letter-spacing:-0.07px;white-space:nowrap">Break From The Noise (30 Seconds Light)</div>

<!-- PLAYHEAD -->
<div class="a" style="left:108px;top:686px;width:50px;height:190px;background:linear-gradient(90deg,rgba(0,0,0,0),rgba(0,0,0,0.16) 50%,rgba(0,0,0,0))"></div>
<div class="a" style="left:131.4px;top:650px;width:2px;height:259px;background:#fff"></div>
<svg style="left:126px;top:641px" width="13" height="13" viewBox="0 0 13 13"><path d="M0 2 Q0 0 2 0 H11 Q13 0 13 2 V8 L6.5 13 L0 8 Z" fill="#fff"/></svg>

<!-- SCROLLBARS -->
<div class="a" style="left:68px;top:902px;width:1012px;height:6px;background:#4f4f5b;border-radius:3px"></div>
<div class="a" style="left:1592px;top:672px;width:6px;height:222px;background:#5a5a68;border-radius:3px"></div>

<!-- PREVIEW IMAGE placeholder -->
<div class="a" id="pv" style="left:589px;top:61px;width:488px;height:485px;overflow:hidden;background:linear-gradient(180deg,#c2cfe4 0%,#c9d4e6 40%,#d6dde9 60%)">
  <svg class="a" style="left:0;top:0" width="488" height="200" viewBox="589 61 488 200">
    <defs><filter id="bl" x="-30%" y="-30%" width="160%" height="160%"><feGaussianBlur stdDeviation="6"/></filter>
    <filter id="bl2" x="-30%" y="-30%" width="160%" height="160%"><feGaussianBlur stdDeviation="2.5"/></filter></defs>
    <rect x="589" y="61" width="488" height="200" fill="#bac5d9"/>
    <g filter="url(#bl)">
      <rect x="830" y="30" width="280" height="62" fill="#a3c0e8"/>
      <rect x="1000" y="80" width="100" height="36" fill="#a6c2e8"/>
      <ellipse cx="720" cy="150" rx="110" ry="22" fill="#b2bcd0"/>
      <ellipse cx="620" cy="150" rx="40" ry="14" fill="#d8dde6"/>
      <ellipse cx="940" cy="160" rx="160" ry="14" fill="#bcc6d8"/>
      <rect x="760" y="175" width="330" height="35" fill="#b7c3d7"/>
      <ellipse cx="1045" cy="190" rx="40" ry="12" fill="#aec5e6"/>
      <ellipse cx="940" cy="198" rx="110" ry="8" fill="#d2d9e6"/>
      <ellipse cx="930" cy="238" rx="170" ry="16" fill="#d6dce6"/>
      <ellipse cx="700" cy="238" rx="80" ry="14" fill="#cad3e2"/>
    </g>
    <g filter="url(#bl2)">
      <path d="M570 50 H800 Q830 60 826 90 Q815 110 790 112 Q770 135 730 130 Q700 140 660 128 Q630 135 600 125 L570 125 Z" fill="#dfe3ea"/>
      <path d="M600 60 H780 Q800 70 790 90 Q740 100 700 95 Q650 100 610 92 Z" fill="#e8ebf0"/>
      <path d="M790 120 Q800 98 830 100 Q845 85 875 92 Q895 80 915 88 Q945 82 965 92 Q990 86 1010 100 Q1040 96 1060 110 L1090 110 L1090 165 Q1000 172 930 168 Q860 172 800 160 Q785 140 790 120 Z" fill="#e6e9ef"/>
      <path d="M810 118 Q830 100 860 104 Q880 92 910 100 Q950 92 990 104 Q1020 106 1040 118 Q980 130 900 128 Q840 130 810 118 Z" fill="#f2f4f7"/>
      <ellipse cx="1040" cy="150" rx="40" ry="10" fill="#e4e8ee"/>
    </g>
  </svg>
  <svg class="a" style="left:0;top:0" width="488" height="485" viewBox="589 61 488 485">
  <defs><clipPath id="dc1"><rect x="960" y="300" width="120" height="61"/></clipPath><clipPath id="dc2"><rect x="930" y="420" width="110" height="81.5"/></clipPath><filter id="tb"><feGaussianBlur stdDeviation="0.6"/></filter></defs>
  <path d="M775 252 L860 250 L880 246 L1000 248 L1040 246 L1077 244 L1077 546 L775 546 Z" fill="#e9e8ea"/>
  <g filter="url(#tb)">
   <rect x="910" y="414" width="24" height="11" fill="#eaeaee"/>
   <rect x="828" y="400" width="19" height="15" fill="#f4f4f6"/>
   <rect x="831" y="410" width="2" height="3" fill="#7c8088"/>
   <rect x="983" y="260" width="26" height="18" fill="#dcdde2"/>
   <rect x="820" y="251" width="17" height="6" fill="#f4f4f6"/>
   <rect x="821" y="254" width="2" height="3" fill="#7c8088"/>
   <rect x="906" y="499" width="16" height="13" fill="#eaeaee"/>
   <rect x="911" y="330" width="26" height="18" fill="#dcccb4"/>
   <rect x="868" y="316" width="12" height="6" fill="#e8dccb"/>
   <rect x="1030" y="363" width="25" height="16" fill="#f4f4f6"/>
   <rect x="1050" y="369" width="2" height="3" fill="#7c8088"/>
   <rect x="1071" y="366" width="7" height="13" fill="#e8dccb"/>
   <rect x="1072" y="370" width="2" height="3" fill="#7c8088"/>
   <rect x="1066" y="474" width="8" height="8" fill="#f4f4f6"/>
   <rect x="1071" y="476" width="2" height="3" fill="#7c8088"/>
   <rect x="943" y="381" width="10" height="15" fill="#f4f4f6"/>
   <rect x="808" y="373" width="10" height="9" fill="#c4b8aa"/>
   <rect x="865" y="512" width="10" height="10" fill="#dcccb4"/>
   <rect x="803" y="543" width="10" height="8" fill="#e8dccb"/>
   <rect x="805" y="545" width="2" height="3" fill="#7c8088"/>
   <rect x="799" y="421" width="11" height="13" fill="#f4f4f6"/>
   <rect x="1065" y="392" width="17" height="16" fill="#f4f4f6"/>
   <rect x="1078" y="402" width="2" height="3" fill="#7c8088"/>
   <rect x="848" y="304" width="21" height="17" fill="#f4f4f6"/>
   <rect x="1041" y="427" width="14" height="6" fill="#f4f4f6"/>
   <rect x="845" y="458" width="11" height="16" fill="#dcdde2"/>
   <rect x="847" y="467" width="2" height="3" fill="#7c8088"/>
   <rect x="793" y="315" width="17" height="16" fill="#dcdde2"/>
   <rect x="806" y="319" width="2" height="3" fill="#7c8088"/>
   <rect x="777" y="327" width="15" height="6" fill="#f4f4f6"/>
   <rect x="947" y="286" width="13" height="17" fill="#c4b8aa"/>
   <rect x="983" y="422" width="9" height="5" fill="#f4f4f6"/>
   <rect x="986" y="535" width="6" height="13" fill="#eaeaee"/>
   <rect x="869" y="546" width="8" height="12" fill="#cdd0d6"/>
   <rect x="997" y="457" width="22" height="17" fill="#f4f4f6"/>
   <rect x="1047" y="507" width="14" height="15" fill="#dcccb4"/>
   <rect x="963" y="361" width="18" height="13" fill="#f4f4f6"/>
   <rect x="1075" y="510" width="21" height="10" fill="#cdd0d6"/>
   <rect x="906" y="498" width="8" height="15" fill="#f4f4f6"/>
   <rect x="919" y="316" width="20" height="11" fill="#dcdde2"/>
   <rect x="850" y="250" width="12" height="14" fill="#f4f4f6"/>
   <rect x="858" y="258" width="2" height="3" fill="#7c8088"/>
   <rect x="907" y="514" width="13" height="14" fill="#f4f4f6"/>
   <rect x="1018" y="520" width="24" height="10" fill="#eaeaee"/>
   <rect x="1021" y="524" width="2" height="3" fill="#7c8088"/>
   <rect x="1027" y="501" width="20" height="17" fill="#f4f4f6"/>
   <rect x="1036" y="506" width="2" height="3" fill="#7c8088"/>
   <rect x="837" y="371" width="19" height="11" fill="#f4f4f6"/>
   <rect x="1072" y="382" width="7" height="5" fill="#f0e8dc"/>
   <rect x="1075" y="385" width="2" height="3" fill="#7c8088"/>
   <rect x="866" y="484" width="6" height="7" fill="#eaeaee"/>
   <rect x="869" y="486" width="2" height="3" fill="#7c8088"/>
   <rect x="815" y="261" width="19" height="11" fill="#dcdde2"/>
   <rect x="1018" y="534" width="20" height="8" fill="#eaeaee"/>
   <rect x="1019" y="536" width="2" height="3" fill="#7c8088"/>
   <rect x="990" y="301" width="11" height="9" fill="#dcdde2"/>
   <rect x="959" y="473" width="14" height="15" fill="#f0e8dc"/>
   <rect x="970" y="482" width="2" height="3" fill="#7c8088"/>
   <rect x="812" y="383" width="19" height="17" fill="#f4f4f6"/>
   <rect x="1040" y="485" width="25" height="11" fill="#dcdde2"/>
   <rect x="1056" y="491" width="2" height="3" fill="#7c8088"/>
   <rect x="968" y="462" width="10" height="17" fill="#c4b8aa"/>
   <rect x="936" y="483" width="12" height="17" fill="#dcccb4"/>
   <rect x="937" y="490" width="2" height="3" fill="#7c8088"/>
   <rect x="940" y="477" width="16" height="5" fill="#e8dccb"/>
   <rect x="950" y="479" width="2" height="3" fill="#7c8088"/>
   <rect x="874" y="483" width="9" height="7" fill="#eaeaee"/>
   <rect x="1028" y="453" width="25" height="11" fill="#f0e8dc"/>
   <rect x="1034" y="458" width="2" height="3" fill="#7c8088"/>
   <rect x="861" y="465" width="19" height="12" fill="#dcccb4"/>
   <rect x="867" y="361" width="23" height="17" fill="#f4f4f6"/>
   <rect x="1067" y="404" width="17" height="8" fill="#eaeaee"/>
   <rect x="957" y="255" width="25" height="12" fill="#eaeaee"/>
   <rect x="944" y="394" width="20" height="6" fill="#eaeaee"/>
   <rect x="1064" y="523" width="11" height="11" fill="#f4f4f6"/>
   <rect x="1021" y="516" width="16" height="9" fill="#f4f4f6"/>
   <rect x="1054" y="286" width="22" height="5" fill="#f4f4f6"/>
   <rect x="1067" y="288" width="2" height="3" fill="#7c8088"/>
   <rect x="880" y="432" width="8" height="15" fill="#f4f4f6"/>
   <rect x="848" y="306" width="17" height="11" fill="#f4f4f6"/>
   <rect x="933" y="295" width="10" height="13" fill="#dcdde2"/>
   <rect x="1032" y="430" width="23" height="8" fill="#cdd0d6"/>
   <rect x="1047" y="341" width="12" height="17" fill="#f4f4f6"/>
   <rect x="1043" y="287" width="11" height="14" fill="#f4f4f6"/>
   <rect x="1049" y="293" width="2" height="3" fill="#7c8088"/>
   <rect x="1013" y="285" width="14" height="14" fill="#f4f4f6"/>
   <rect x="1021" y="294" width="2" height="3" fill="#7c8088"/>
   <rect x="1067" y="282" width="16" height="15" fill="#eaeaee"/>
   <rect x="830" y="268" width="8" height="5" fill="#eaeaee"/>
   <rect x="945" y="291" width="10" height="8" fill="#dcccb4"/>
   <rect x="1055" y="275" width="7" height="17" fill="#eaeaee"/>
   <rect x="872" y="387" width="16" height="11" fill="#dcdde2"/>
   <rect x="881" y="392" width="2" height="3" fill="#7c8088"/>
   <rect x="827" y="383" width="21" height="10" fill="#f4f4f6"/>
   <rect x="837" y="385" width="2" height="3" fill="#7c8088"/>
   <rect x="1044" y="487" width="20" height="16" fill="#dcdde2"/>
   <rect x="955" y="398" width="26" height="15" fill="#f4f4f6"/>
   <rect x="999" y="480" width="22" height="10" fill="#f0e8dc"/>
   <rect x="984" y="476" width="21" height="10" fill="#cdd0d6"/>
   <rect x="991" y="480" width="2" height="3" fill="#7c8088"/>
   <rect x="775" y="353" width="19" height="13" fill="#f4f4f6"/>
   <rect x="975" y="348" width="19" height="12" fill="#eaeaee"/>
   <rect x="1077" y="439" width="20" height="15" fill="#c4b8aa"/>
   <rect x="1088" y="448" width="2" height="3" fill="#7c8088"/>
   <rect x="850" y="367" width="7" height="8" fill="#f4f4f6"/>
   <rect x="852" y="370" width="2" height="3" fill="#7c8088"/>
   <rect x="940" y="399" width="25" height="12" fill="#aab0ba"/>
   <rect x="1019" y="270" width="18" height="15" fill="#f4f4f6"/>
   <rect x="821" y="388" width="9" height="11" fill="#dcdde2"/>
   <rect x="827" y="392" width="2" height="3" fill="#7c8088"/>
   <rect x="933" y="426" width="13" height="9" fill="#dcdde2"/>
   <rect x="858" y="461" width="12" height="5" fill="#f4f4f6"/>
   <rect x="861" y="464" width="2" height="3" fill="#7c8088"/>
   <rect x="891" y="515" width="21" height="6" fill="#c4b8aa"/>
   <rect x="794" y="518" width="15" height="11" fill="#c4b8aa"/>
   <rect x="801" y="525" width="2" height="3" fill="#7c8088"/>
   <rect x="992" y="387" width="26" height="16" fill="#dcdde2"/>
   <rect x="1007" y="393" width="2" height="3" fill="#7c8088"/>
   <rect x="834" y="263" width="17" height="7" fill="#eaeaee"/>
   <rect x="911" y="325" width="18" height="10" fill="#e8dccb"/>
   <rect x="1076" y="532" width="21" height="8" fill="#f4f4f6"/>
   <rect x="1011" y="434" width="13" height="9" fill="#dcdde2"/>
   <rect x="952" y="436" width="21" height="7" fill="#f4f4f6"/>
   <rect x="1051" y="510" width="7" height="6" fill="#f4f4f6"/>
   <rect x="962" y="278" width="17" height="6" fill="#f4f4f6"/>
   <rect x="940" y="436" width="13" height="11" fill="#f4f4f6"/>
   <rect x="948" y="442" width="2" height="3" fill="#7c8088"/>
   <rect x="795" y="283" width="22" height="13" fill="#e8dccb"/>
   <rect x="803" y="287" width="2" height="3" fill="#7c8088"/>
   <rect x="1019" y="357" width="19" height="18" fill="#f4f4f6"/>
   <rect x="1000" y="522" width="15" height="10" fill="#f4f4f6"/>
   <rect x="796" y="272" width="17" height="11" fill="#dcdde2"/>
   <rect x="807" y="274" width="2" height="3" fill="#7c8088"/>
   <rect x="837" y="445" width="8" height="9" fill="#cdd0d6"/>
   <rect x="858" y="290" width="13" height="14" fill="#f4f4f6"/>
   <rect x="866" y="297" width="2" height="3" fill="#7c8088"/>
   <rect x="1052" y="528" width="24" height="11" fill="#e8dccb"/>
   <rect x="1060" y="532" width="2" height="3" fill="#7c8088"/>
   <rect x="1057" y="515" width="11" height="10" fill="#f4f4f6"/>
   <rect x="893" y="363" width="10" height="12" fill="#e8dccb"/>
   <rect x="1027" y="415" width="10" height="15" fill="#f0e8dc"/>
   <rect x="1028" y="422" width="2" height="3" fill="#7c8088"/>
   <rect x="938" y="417" width="25" height="13" fill="#e8dccb"/>
   <rect x="951" y="425" width="2" height="3" fill="#7c8088"/>
   <rect x="798" y="271" width="21" height="17" fill="#f4f4f6"/>
   <rect x="816" y="470" width="19" height="8" fill="#f4f4f6"/>
   <rect x="931" y="476" width="14" height="9" fill="#d8bca8"/>
   <rect x="923" y="408" width="20" height="14" fill="#f0e8dc"/>
   <rect x="1024" y="446" width="23" height="15" fill="#dcccb4"/>
   <rect x="1064" y="438" width="16" height="14" fill="#e8dccb"/>
   <rect x="900" y="291" width="21" height="18" fill="#f4f4f6"/>
   <rect x="905" y="298" width="2" height="3" fill="#7c8088"/>
   <rect x="861" y="537" width="7" height="9" fill="#f4f4f6"/>
   <rect x="1009" y="301" width="7" height="11" fill="#eaeaee"/>
   <rect x="783" y="279" width="10" height="8" fill="#f4f4f6"/>
   <rect x="953" y="314" width="10" height="9" fill="#f4f4f6"/>
   <rect x="867" y="411" width="22" height="11" fill="#f4f4f6"/>
   <rect x="1051" y="349" width="17" height="17" fill="#eaeaee"/>
   <rect x="1052" y="362" width="2" height="3" fill="#7c8088"/>
   <rect x="1016" y="362" width="17" height="12" fill="#f4f4f6"/>
   <rect x="973" y="318" width="6" height="11" fill="#f4f4f6"/>
   <rect x="990" y="428" width="9" height="7" fill="#f4f4f6"/>
   <rect x="995" y="431" width="2" height="3" fill="#7c8088"/>
   <rect x="966" y="544" width="11" height="12" fill="#f4f4f6"/>
   <rect x="772" y="493" width="23" height="16" fill="#f4f4f6"/>
   <rect x="787" y="496" width="2" height="3" fill="#7c8088"/>
   <rect x="918" y="387" width="25" height="13" fill="#dcccb4"/>
   <rect x="936" y="392" width="2" height="3" fill="#7c8088"/>
   <rect x="1052" y="274" width="23" height="8" fill="#eaeaee"/>
   <rect x="820" y="496" width="12" height="9" fill="#f4f4f6"/>
   <rect x="825" y="500" width="2" height="3" fill="#7c8088"/>
   <rect x="882" y="452" width="8" height="10" fill="#eaeaee"/>
   <rect x="1025" y="443" width="6" height="10" fill="#dcdde2"/>
   <rect x="1027" y="446" width="2" height="3" fill="#7c8088"/>
   <rect x="775" y="543" width="22" height="8" fill="#dcdde2"/>
   <rect x="783" y="546" width="2" height="3" fill="#7c8088"/>
   <rect x="863" y="348" width="14" height="14" fill="#f4f4f6"/>
   <rect x="871" y="352" width="2" height="3" fill="#7c8088"/>
   <rect x="1060" y="415" width="20" height="9" fill="#e8dccb"/>
   <rect x="1064" y="418" width="2" height="3" fill="#7c8088"/>
   <rect x="979" y="459" width="10" height="10" fill="#dcccb4"/>
   <rect x="799" y="315" width="9" height="7" fill="#eaeaee"/>
   <rect x="805" y="317" width="2" height="3" fill="#7c8088"/>
   <rect x="928" y="441" width="21" height="16" fill="#f4f4f6"/>
   <rect x="936" y="443" width="2" height="3" fill="#7c8088"/>
   <rect x="894" y="456" width="26" height="15" fill="#dcdde2"/>
   <rect x="778" y="346" width="13" height="13" fill="#f4f4f6"/>
   <rect x="927" y="483" width="23" height="13" fill="#f4f4f6"/>
   <rect x="1047" y="411" width="13" height="12" fill="#f4f4f6"/>
   <rect x="1073" y="401" width="20" height="16" fill="#f4f4f6"/>
   <rect x="963" y="306" width="8" height="8" fill="#eaeaee"/>
   <rect x="872" y="525" width="13" height="11" fill="#f4f4f6"/>
   <rect x="813" y="517" width="17" height="12" fill="#eaeaee"/>
   <rect x="826" y="526" width="2" height="3" fill="#7c8088"/>
   <rect x="1021" y="427" width="8" height="16" fill="#f4f4f6"/>
   <rect x="845" y="419" width="23" height="7" fill="#eaeaee"/>
   <rect x="847" y="421" width="2" height="3" fill="#7c8088"/>
   <rect x="1073" y="528" width="19" height="9" fill="#dcdde2"/>
   <rect x="888" y="424" width="22" height="5" fill="#f4f4f6"/>
   <rect x="816" y="363" width="17" height="7" fill="#eaeaee"/>
   <rect x="824" y="365" width="2" height="3" fill="#7c8088"/>
   <rect x="968" y="258" width="19" height="7" fill="#d8bca8"/>
   <rect x="915" y="370" width="18" height="14" fill="#cdd0d6"/>
   <rect x="920" y="544" width="23" height="16" fill="#eaeaee"/>
   <rect x="945" y="518" width="17" height="12" fill="#eaeaee"/>
   <rect x="870" y="263" width="21" height="17" fill="#cdd0d6"/>
   <rect x="1001" y="338" width="18" height="6" fill="#f4f4f6"/>
   <rect x="925" y="366" width="7" height="14" fill="#eaeaee"/>
   <rect x="927" y="371" width="2" height="3" fill="#7c8088"/>
   <rect x="844" y="267" width="24" height="18" fill="#dcdde2"/>
   <rect x="901" y="488" width="10" height="15" fill="#eaeaee"/>
   <rect x="802" y="484" width="8" height="12" fill="#d8bca8"/>
   <rect x="804" y="488" width="2" height="3" fill="#7c8088"/>
   <rect x="871" y="266" width="24" height="16" fill="#eaeaee"/>
   <rect x="951" y="261" width="7" height="17" fill="#f4f4f6"/>
   <rect x="1057" y="539" width="15" height="8" fill="#f4f4f6"/>
   <rect x="1046" y="305" width="23" height="10" fill="#eaeaee"/>
   <rect x="1063" y="311" width="2" height="3" fill="#7c8088"/>
   <rect x="834" y="436" width="10" height="16" fill="#f4f4f6"/>
   <rect x="839" y="441" width="2" height="3" fill="#7c8088"/>
   <rect x="1047" y="507" width="20" height="7" fill="#dcdde2"/>
   <rect x="908" y="271" width="10" height="9" fill="#dcdde2"/>
   <rect x="910" y="273" width="2" height="3" fill="#7c8088"/>
   <rect x="975" y="483" width="13" height="14" fill="#f0e8dc"/>
   <rect x="842" y="337" width="25" height="14" fill="#f4f4f6"/>
   <rect x="799" y="541" width="15" height="12" fill="#eaeaee"/>
   <rect x="807" y="545" width="2" height="3" fill="#7c8088"/>
   <rect x="849" y="487" width="8" height="9" fill="#cdd0d6"/>
   <rect x="851" y="491" width="2" height="3" fill="#7c8088"/>
   <rect x="829" y="515" width="26" height="5" fill="#eaeaee"/>
   <rect x="889" y="525" width="16" height="7" fill="#eaeaee"/>
   <rect x="882" y="444" width="22" height="12" fill="#eaeaee"/>
   <rect x="981" y="403" width="25" height="7" fill="#e8dccb"/>
   <rect x="994" y="405" width="2" height="3" fill="#7c8088"/>
   <rect x="906" y="478" width="22" height="15" fill="#f4f4f6"/>
   <rect x="839" y="420" width="16" height="5" fill="#dcdde2"/>
   <rect x="947" y="508" width="10" height="7" fill="#f4f4f6"/>
   <rect x="905" y="379" width="11" height="15" fill="#f4f4f6"/>
   <rect x="946" y="409" width="22" height="8" fill="#f4f4f6"/>
   <rect x="947" y="412" width="2" height="3" fill="#7c8088"/>
   <rect x="961" y="404" width="11" height="13" fill="#f4f4f6"/>
   <rect x="824" y="323" width="9" height="14" fill="#e8dccb"/>
   <rect x="791" y="370" width="13" height="8" fill="#c4b8aa"/>
   <rect x="796" y="373" width="2" height="3" fill="#7c8088"/>
   <rect x="1073" y="290" width="15" height="15" fill="#f4f4f6"/>
   <rect x="1084" y="293" width="2" height="3" fill="#7c8088"/>
   <rect x="892" y="336" width="14" height="6" fill="#f4f4f6"/>
   <rect x="1005" y="466" width="11" height="8" fill="#eaeaee"/>
   <rect x="1009" y="471" width="2" height="3" fill="#7c8088"/>
   <rect x="883" y="348" width="26" height="13" fill="#f4f4f6"/>
   <rect x="970" y="264" width="13" height="14" fill="#dcccb4"/>
   <rect x="1042" y="385" width="14" height="16" fill="#f4f4f6"/>
   <rect x="838" y="351" width="10" height="12" fill="#f4f4f6"/>
   <rect x="840" y="356" width="2" height="3" fill="#7c8088"/>
   <rect x="866" y="381" width="26" height="14" fill="#dcccb4"/>
   <rect x="875" y="383" width="2" height="3" fill="#7c8088"/>
   <rect x="983" y="355" width="11" height="5" fill="#f4f4f6"/>
   <rect x="987" y="358" width="2" height="3" fill="#7c8088"/>
   <rect x="990" y="327" width="13" height="7" fill="#f0e8dc"/>
   <rect x="1006" y="463" width="24" height="5" fill="#f4f4f6"/>
   <rect x="797" y="511" width="13" height="15" fill="#eaeaee"/>
   <rect x="802" y="515" width="2" height="3" fill="#7c8088"/>
   <rect x="784" y="292" width="18" height="5" fill="#f4f4f6"/>
   <rect x="938" y="288" width="20" height="8" fill="#cdd0d6"/>
   <rect x="817" y="308" width="12" height="14" fill="#eaeaee"/>
   <rect x="1036" y="315" width="12" height="9" fill="#f4f4f6"/>
   <rect x="1037" y="319" width="2" height="3" fill="#7c8088"/>
   <rect x="945" y="489" width="26" height="9" fill="#dcdde2"/>
   <rect x="838" y="453" width="19" height="17" fill="#dcccb4"/>
   <rect x="849" y="456" width="2" height="3" fill="#7c8088"/>
   <rect x="902" y="364" width="7" height="10" fill="#f4f4f6"/>
   <rect x="857" y="294" width="14" height="11" fill="#f4f4f6"/>
   <rect x="845" y="275" width="13" height="10" fill="#f4f4f6"/>
   <rect x="986" y="412" width="20" height="5" fill="#f4f4f6"/>
   <rect x="791" y="368" width="7" height="11" fill="#eaeaee"/>
   <rect x="871" y="323" width="6" height="10" fill="#f0e8dc"/>
   <rect x="852" y="447" width="10" height="11" fill="#dcdde2"/>
   <rect x="883" y="419" width="25" height="15" fill="#dcdde2"/>
   <rect x="897" y="371" width="12" height="16" fill="#f0e8dc"/>
   <rect x="1049" y="258" width="9" height="12" fill="#f4f4f6"/>
   <rect x="1070" y="292" width="10" height="8" fill="#dcdde2"/>
   <rect x="1071" y="295" width="2" height="3" fill="#7c8088"/>
   <rect x="892" y="319" width="16" height="13" fill="#eaeaee"/>
   <rect x="943" y="495" width="25" height="9" fill="#f4f4f6"/>
   <rect x="868" y="461" width="20" height="14" fill="#d8bca8"/>
   <rect x="821" y="433" width="16" height="12" fill="#f4f4f6"/>
   <rect x="830" y="438" width="2" height="3" fill="#7c8088"/>
   <rect x="844" y="322" width="12" height="7" fill="#eaeaee"/>
   <rect x="846" y="324" width="2" height="3" fill="#7c8088"/>
   <rect x="803" y="458" width="8" height="11" fill="#e8dccb"/>
   <rect x="822" y="506" width="23" height="6" fill="#f4f4f6"/>
   <rect x="1015" y="364" width="20" height="8" fill="#cdd0d6"/>
   <rect x="1021" y="368" width="2" height="3" fill="#7c8088"/>
   <rect x="1029" y="495" width="17" height="10" fill="#dcdde2"/>
   <rect x="1025" y="487" width="9" height="10" fill="#dcdde2"/>
   <rect x="1027" y="489" width="2" height="3" fill="#7c8088"/>
   <rect x="951" y="528" width="25" height="7" fill="#dcdde2"/>
   <rect x="965" y="366" width="25" height="18" fill="#f4f4f6"/>
   <rect x="808" y="260" width="12" height="15" fill="#aab0ba"/>
   <rect x="812" y="262" width="2" height="3" fill="#7c8088"/>
   <rect x="937" y="391" width="13" height="9" fill="#e8dccb"/>
   <rect x="859" y="364" width="18" height="15" fill="#c4b8aa"/>
   <rect x="984" y="410" width="22" height="7" fill="#f4f4f6"/>
   <rect x="1001" y="412" width="2" height="3" fill="#7c8088"/>
   <rect x="921" y="283" width="12" height="5" fill="#eaeaee"/>
   <rect x="927" y="285" width="2" height="3" fill="#7c8088"/>
   <rect x="841" y="391" width="13" height="8" fill="#f4f4f6"/>
   <rect x="851" y="394" width="2" height="3" fill="#7c8088"/>
   <rect x="796" y="302" width="16" height="18" fill="#f4f4f6"/>
   <rect x="920" y="371" width="22" height="10" fill="#f4f4f6"/>
   <rect x="972" y="433" width="12" height="17" fill="#dcccb4"/>
   <rect x="907" y="496" width="20" height="7" fill="#f4f4f6"/>
   <rect x="910" y="498" width="2" height="3" fill="#7c8088"/>
   <rect x="881" y="472" width="12" height="12" fill="#f4f4f6"/>
   <rect x="890" y="474" width="2" height="3" fill="#7c8088"/>
   <rect x="933" y="489" width="22" height="15" fill="#eaeaee"/>
   <rect x="1024" y="477" width="26" height="6" fill="#f0e8dc"/>
   <rect x="987" y="322" width="24" height="5" fill="#eaeaee"/>
   <rect x="996" y="324" width="2" height="3" fill="#7c8088"/>
   <rect x="972" y="489" width="13" height="13" fill="#f4f4f6"/>
   <rect x="982" y="494" width="2" height="3" fill="#7c8088"/>
   <rect x="801" y="347" width="21" height="8" fill="#cdd0d6"/>
   <rect x="979" y="300" width="8" height="7" fill="#f4f4f6"/>
   <rect x="775" y="397" width="14" height="9" fill="#eaeaee"/>
   <rect x="834" y="510" width="12" height="15" fill="#f4f4f6"/>
   <rect x="903" y="535" width="10" height="10" fill="#dcdde2"/>
   <rect x="906" y="540" width="2" height="3" fill="#7c8088"/>
   <rect x="1061" y="343" width="10" height="10" fill="#c4b8aa"/>
   <rect x="1066" y="347" width="2" height="3" fill="#7c8088"/>
   <rect x="968" y="310" width="18" height="17" fill="#dcccb4"/>
   <rect x="926" y="417" width="8" height="16" fill="#dcdde2"/>
   <rect x="975" y="372" width="14" height="8" fill="#dcdde2"/>
   <rect x="929" y="257" width="19" height="11" fill="#eaeaee"/>
   <rect x="1056" y="292" width="15" height="18" fill="#cdd0d6"/>
   <rect x="1066" y="306" width="2" height="3" fill="#7c8088"/>
   <rect x="895" y="506" width="9" height="18" fill="#eaeaee"/>
   <rect x="899" y="516" width="2" height="3" fill="#7c8088"/>
   <rect x="1058" y="495" width="22" height="12" fill="#aab0ba"/>
   <rect x="1075" y="501" width="2" height="3" fill="#7c8088"/>
   <rect x="848" y="488" width="15" height="12" fill="#dcccb4"/>
   <rect x="853" y="494" width="2" height="3" fill="#7c8088"/>
   <rect x="794" y="413" width="22" height="11" fill="#f4f4f6"/>
   <rect x="1033" y="477" width="17" height="17" fill="#e8dccb"/>
   <rect x="1039" y="481" width="2" height="3" fill="#7c8088"/>
   <rect x="783" y="350" width="23" height="16" fill="#f4f4f6"/>
   <rect x="792" y="361" width="2" height="3" fill="#7c8088"/>
   <rect x="960" y="517" width="7" height="18" fill="#f4f4f6"/>
   <rect x="1039" y="465" width="10" height="14" fill="#eaeaee"/>
   <rect x="1042" y="469" width="2" height="3" fill="#7c8088"/>
   <rect x="964" y="330" width="18" height="14" fill="#f4f4f6"/>
   <rect x="975" y="336" width="2" height="3" fill="#7c8088"/>
   <rect x="811" y="282" width="25" height="13" fill="#f4f4f6"/>
   <rect x="833" y="288" width="2" height="3" fill="#7c8088"/>
   <rect x="997" y="355" width="12" height="10" fill="#f4f4f6"/>
   <rect x="902" y="492" width="14" height="11" fill="#eaeaee"/>
   <rect x="878" y="457" width="11" height="13" fill="#f4f4f6"/>
   <rect x="859" y="502" width="20" height="11" fill="#f0e8dc"/>
   <rect x="999" y="427" width="15" height="6" fill="#eaeaee"/>
   <rect x="1005" y="430" width="2" height="3" fill="#7c8088"/>
   <rect x="861" y="455" width="19" height="8" fill="#eaeaee"/>
   <rect x="876" y="457" width="2" height="3" fill="#7c8088"/>
   <rect x="900" y="349" width="22" height="16" fill="#eaeaee"/>
   <rect x="802" y="515" width="8" height="10" fill="#f4f4f6"/>
   <rect x="976" y="350" width="24" height="17" fill="#f4f4f6"/>
   <rect x="915" y="355" width="15" height="9" fill="#dcdde2"/>
   <rect x="1068" y="539" width="26" height="10" fill="#e8dccb"/>
   <rect x="986" y="545" width="7" height="11" fill="#eaeaee"/>
   <rect x="839" y="543" width="10" height="10" fill="#f4f4f6"/>
   <rect x="998" y="272" width="9" height="13" fill="#dcdde2"/>
   <rect x="849" y="490" width="21" height="15" fill="#f4f4f6"/>
   <rect x="777" y="504" width="25" height="17" fill="#f4f4f6"/>
   <rect x="935" y="407" width="8" height="15" fill="#f4f4f6"/>
   <rect x="810" y="417" width="9" height="6" fill="#eaeaee"/>
   <rect x="815" y="419" width="2" height="3" fill="#7c8088"/>
   <rect x="898" y="263" width="10" height="11" fill="#eaeaee"/>
   <rect x="1031" y="278" width="23" height="7" fill="#c4b8aa"/>
   <rect x="896" y="430" width="23" height="18" fill="#eaeaee"/>
   <rect x="900" y="441" width="2" height="3" fill="#7c8088"/>
   <rect x="996" y="460" width="9" height="12" fill="#f4f4f6"/>
   <rect x="999" y="468" width="2" height="3" fill="#7c8088"/>
   <rect x="968" y="500" width="7" height="10" fill="#f4f4f6"/>
   <rect x="969" y="507" width="2" height="3" fill="#7c8088"/>
   <rect x="872" y="393" width="19" height="17" fill="#f0e8dc"/>
   <rect x="925" y="517" width="14" height="9" fill="#cdd0d6"/>
   <rect x="929" y="520" width="2" height="3" fill="#7c8088"/>
   <rect x="917" y="354" width="15" height="11" fill="#f4f4f6"/>
   <rect x="791" y="405" width="17" height="10" fill="#f4f4f6"/>
   <rect x="797" y="408" width="2" height="3" fill="#7c8088"/>
   <rect x="920" y="316" width="21" height="11" fill="#f4f4f6"/>
   <rect x="1067" y="249" width="18" height="17" fill="#f4f4f6"/>
   <rect x="885" y="337" width="18" height="13" fill="#f4f4f6"/>
   <rect x="929" y="472" width="7" height="6" fill="#f4f4f6"/>
   <rect x="933" y="475" width="2" height="3" fill="#7c8088"/>
   <rect x="1034" y="367" width="12" height="14" fill="#f4f4f6"/>
   <rect x="1026" y="345" width="12" height="16" fill="#e8dccb"/>
   <rect x="789" y="475" width="7" height="13" fill="#eaeaee"/>
   <rect x="967" y="254" width="25" height="15" fill="#eaeaee"/>
   <rect x="983" y="259" width="2" height="3" fill="#7c8088"/>
   <rect x="979" y="541" width="24" height="6" fill="#e8dccb"/>
   <rect x="1001" y="360" width="15" height="11" fill="#f4f4f6"/>
   <rect x="1010" y="362" width="2" height="3" fill="#7c8088"/>
   <rect x="807" y="496" width="19" height="12" fill="#f4f4f6"/>
   <rect x="813" y="504" width="2" height="3" fill="#7c8088"/>
   <rect x="943" y="523" width="10" height="10" fill="#eaeaee"/>
   <rect x="810" y="508" width="15" height="5" fill="#eaeaee"/>
   <rect x="978" y="525" width="16" height="14" fill="#f4f4f6"/>
   <rect x="804" y="469" width="9" height="13" fill="#f4f4f6"/>
   <rect x="806" y="473" width="2" height="3" fill="#7c8088"/>
   <rect x="952" y="402" width="14" height="12" fill="#dcccb4"/>
   <rect x="950" y="391" width="26" height="9" fill="#dcdde2"/>
   <rect x="957" y="395" width="2" height="3" fill="#7c8088"/>
   <rect x="947" y="324" width="7" height="16" fill="#f4f4f6"/>
   <rect x="904" y="432" width="17" height="18" fill="#f0e8dc"/>
   <rect x="920" y="316" width="21" height="6" fill="#f4f4f6"/>
   <rect x="783" y="456" width="17" height="12" fill="#f4f4f6"/>
   <rect x="796" y="463" width="2" height="3" fill="#7c8088"/>
   <rect x="1018" y="276" width="22" height="8" fill="#f4f4f6"/>
   <rect x="958" y="283" width="21" height="13" fill="#f0e8dc"/>
   <rect x="982" y="356" width="25" height="14" fill="#f4f4f6"/>
   <rect x="994" y="326" width="11" height="5" fill="#eaeaee"/>
   <rect x="997" y="328" width="2" height="3" fill="#7c8088"/>
   <rect x="812" y="392" width="11" height="9" fill="#f4f4f6"/>
   <rect x="1039" y="295" width="23" height="16" fill="#dcdde2"/>
   <rect x="996" y="407" width="19" height="17" fill="#e8dccb"/>
   <rect x="998" y="419" width="2" height="3" fill="#7c8088"/>
   <rect x="883" y="482" width="11" height="11" fill="#f4f4f6"/>
   <rect x="1060" y="398" width="17" height="10" fill="#f4f4f6"/>
   <rect x="806" y="528" width="19" height="6" fill="#f0e8dc"/>
   <rect x="815" y="530" width="2" height="3" fill="#7c8088"/>
   <rect x="1074" y="339" width="23" height="6" fill="#dcdde2"/>
   <rect x="1075" y="342" width="2" height="3" fill="#7c8088"/>
   <rect x="1072" y="452" width="23" height="15" fill="#eaeaee"/>
   <rect x="1083" y="456" width="2" height="3" fill="#7c8088"/>
   <rect x="933" y="353" width="16" height="8" fill="#dcdde2"/>
   <rect x="920" y="271" width="16" height="12" fill="#c4b8aa"/>
   <rect x="813" y="337" width="13" height="14" fill="#f0e8dc"/>
   <rect x="1062" y="524" width="23" height="17" fill="#f4f4f6"/>
   <rect x="952" y="452" width="18" height="13" fill="#f0e8dc"/>
   <rect x="961" y="461" width="2" height="3" fill="#7c8088"/>
   <rect x="782" y="280" width="23" height="17" fill="#f4f4f6"/>
   <rect x="799" y="290" width="2" height="3" fill="#7c8088"/>
   <rect x="931" y="420" width="21" height="16" fill="#f4f4f6"/>
   <rect x="945" y="432" width="2" height="3" fill="#7c8088"/>
   <rect x="1026" y="369" width="13" height="10" fill="#f4f4f6"/>
   <rect x="852" y="422" width="17" height="9" fill="#dcdde2"/>
   <rect x="843" y="511" width="10" height="7" fill="#f4f4f6"/>
   <rect x="1011" y="347" width="11" height="14" fill="#f4f4f6"/>
   <rect x="850" y="509" width="10" height="8" fill="#f4f4f6"/>
   <rect x="855" y="513" width="2" height="3" fill="#7c8088"/>
   <rect x="1013" y="408" width="8" height="15" fill="#f4f4f6"/>
   <rect x="1016" y="419" width="2" height="3" fill="#7c8088"/>
  </g>
  <rect x="878" y="248" width="60" height="14" fill="#e2ceb4"/><rect x="940" y="252" width="50" height="12" fill="#eadfd2"/>
  <rect x="1040" y="246" width="37" height="44" fill="#dcc4a8"/><rect x="1046" y="256" width="4" height="6" fill="#8a7a68"/><rect x="1060" y="256" width="4" height="6" fill="#8a7a68"/>
  <rect x="850" y="318" width="75" height="40" fill="#dcc8a8"/><rect x="895" y="322" width="45" height="12" fill="#c88676"/><rect x="870" y="336" width="4" height="6" fill="#6a6e78"/>
  <rect x="935" y="312" width="32" height="45" fill="#f3f3f5"/><rect x="945" y="320" width="3" height="8" fill="#8890a0"/><rect x="953" y="320" width="3" height="8" fill="#8890a0"/>
  <rect x="800" y="372" width="45" height="20" fill="#f3f3f5"/><rect x="860" y="370" width="40" height="28" fill="#f4f4f6"/>
  <rect x="822" y="425" width="35" height="45" fill="#ddd4c4"/><rect x="800" y="481" width="30" height="22" fill="#e2e5ec"/><rect x="836" y="400" width="34" height="40" fill="#f2f2f4"/>
  <path d="M788 342 A12 8 0 0 1 812 342 Z" fill="#4a7ac8"/>
  <path d="M816 366 A13 9 0 0 1 842 366 Z" fill="#4a7ac8"/>
  <path d="M802 350 A6 4 0 0 1 814 350 Z" fill="#4a7ac8"/>
  <path d="M790 400 A5 4 0 0 1 800 400 Z" fill="#4a7ac8"/>
  <path d="M1000 418 L1077 412 L1077 546 L1016 546 L1027 436 Z" fill="#dcd8d2"/>
  <path d="M1040 440 Q1060 430 1077 450 L1077 520 Q1055 500 1040 470 Z" fill="#cfcac3"/>
  <rect x="967" y="360" width="106" height="62" fill="#f3f4f7"/><rect x="967" y="400" width="106" height="22" fill="#e4e6ea"/>
  <circle cx="1017.5" cy="368" r="47" fill="#4274c6" clip-path="url(#dc1)"/>
  <rect x="965" y="358" width="110" height="4" fill="#eef0f4"/>
  <rect x="980" y="373" width="11" height="31" rx="5.5" fill="#f8f8fa"/><rect x="982.5" y="378" width="6" height="25" fill="#5678b0"/>
  <rect x="1016" y="373" width="13" height="31" rx="6.5" fill="#f8f8fa"/><rect x="1018.5" y="378" width="9" height="25" fill="#4e70a8"/>
  <rect x="1052" y="373" width="10" height="31" rx="5" fill="#f8f8fa"/><rect x="1054.5" y="378" width="5" height="25" fill="#5678b0"/>
  <rect x="818" y="324" width="20" height="26" rx="6" fill="#a8a290"/><rect x="872" y="326" width="28" height="34" fill="#e4d0a8"/>
  <rect x="944" y="500" width="76" height="46" fill="#f2f3f5"/><rect x="1000" y="505" width="16" height="41" fill="#e6e6ea"/>
  <path d="M947 501 Q942 458 972 440 Q992 429 1027.5 434 L1016 501 Z" fill="#3f73ca"/>
  <path d="M960 470 Q975 455 990 465 Q980 480 965 478 Z" fill="#5a88d4" opacity="0.6"/>
  <rect x="956" y="489" width="2" height="57" fill="#4a4a4a"/>
  <rect x="886" y="494" width="60" height="52" fill="#f0f0f2"/><rect x="886" y="494" width="5" height="52" fill="#dcdce0"/>
  <rect x="907" y="505" width="14" height="41" rx="6" fill="#d8b4a0"/>
  <rect x="900" y="494" width="2" height="52" fill="#6a5a50"/><rect x="927" y="494" width="2" height="52" fill="#6a5a50"/>
  <path d="M884 487 L948 487 L946 495 L886 495 Z" fill="#3f70c4"/>
  <path d="M890 488 Q892 465 915 464 Q939 465 941 488 L935 488 Q933 472 915 471 Q897 472 896 488 Z" fill="#4678cc"/>
  <path d="M907 488 Q906 462 915 456 Q924 462 923 488 Z" fill="#3f6ec4"/>
    <path d="M589 186 Q600 160 625 148 Q650 140 680 148 Q708 160 715 183 L720 195 L775 195 L775 420 L589 420 Z" fill="#e6e9ef"/>
    <path d="M589 185 Q600 160 625 148 Q650 140 672 144" fill="none" stroke="#d2cab8" stroke-width="2.5"/>
    <path d="M717 190 Q720 170 735 156 Q748 147 763 149 Q756 162 753 194 Z" fill="#bab5ab"/>
    <path d="M717 190 Q720 170 735 156 Q741 152 746 151 Q728 165 724 192 Z" fill="#d8d0c0"/>
    <path d="M622 420 L622 225 Q622 188 643 187 Q662 188 669 245 L669 420 Z" fill="#c6d3ea"/>
    <path d="M643 187 Q662 188 669 245 L669 262 L690 262 Q690 215 672 196 Q660 186 643 187 Z" fill="#f6f7f9"/>
    <rect x="670" y="260" width="18" height="162" fill="#f4f5f8"/>
    <rect x="622" y="237" width="58" height="3.5" fill="#a89a86"/>
    <path d="M630 266 Q631 250 636 246 L636 242 L649 242 L649 246 Q654 250 655 266 Z" fill="#3e5048"/>
    <ellipse cx="642" cy="239" rx="5" ry="5" fill="#7a7060"/>
    <rect x="640" y="97.5" width="11" height="45" fill="#b6b2aa"/>
    <rect x="615" y="113" width="60" height="15" fill="#b6b2aa"/>
    <rect x="597" y="247" width="20" height="180" fill="#a8a298"/>
    <rect x="687" y="247" width="24" height="176" fill="#b0aaa0"/>
    <rect x="753" y="247" width="16" height="176" fill="#a6a096"/><rect x="755" y="247" width="21" height="16" fill="#a6a096"/>
    <rect x="617" y="312" width="53" height="104" fill="#e4dcd0"/>
    <rect x="617" y="312" width="53" height="12" fill="#405070"/>
    <rect x="617" y="324" width="53" height="8" fill="#8a8e90"/>
    <rect x="622" y="334" width="26" height="28" fill="#d8a070"/>
    <rect x="648" y="330" width="22" height="35" fill="#f0eeec"/>
    <rect x="620" y="368" width="40" height="24" fill="#dccab4"/>
    <rect x="617" y="392" width="53" height="24" fill="#e8e0d4"/>
    <rect x="589" y="415" width="215" height="15" fill="#f2f3f6"/>
    <rect x="589" y="429" width="211" height="52" fill="#e4e6ec"/>
    <path d="M589 457 Q700 452 790 488 Q850 512 910 546 L589 546 Z" fill="#f4f5f8"/>
    <path d="M589 457 Q700 452 790 488 Q850 512 910 546" fill="none" stroke="#d8dce4" stroke-width="2"/>
  </svg>
</div>
<div class="a" style="left:589px;top:546px;width:488px;height:2px;background:#0a0a0e"></div>

<!-- SEARCH BAR OVERLAY -->
<div class="a" style="left:619px;top:261px;width:423px;height:51px;background:#fff;border-radius:26px;box-shadow:0 1px 3px rgba(0,0,0,0.25)"></div>
<div class="a" style="left:635.5px;top:270px;font-size:25.5px;line-height:30px;font-weight:bold;color:#1b1b1b;letter-spacing:-0.9px;white-space:nowrap">Santorini, Greece</div>
<div class="a" style="left:832.5px;top:276px;width:1.6px;height:26px;background:#222"></div>
<svg style="left:963px;top:275px" width="19" height="25" viewBox="0 0 19 25">
  <rect x="5.3" y="1.2" width="8.4" height="14.5" rx="4.2" fill="none" stroke="#151515" stroke-width="2.3"/>
  <path d="M1 13.8 Q9.5 19.8 18 13.8 L18 16 Q9.5 23.5 1 16 Z" fill="#151515"/>
  <rect x="7.6" y="18.5" width="3.8" height="5.5" fill="#151515"/>
</svg>
<svg style="left:995px;top:276px" width="26" height="25" viewBox="0 0 26 25">
  <circle cx="9.6" cy="9.6" r="7.2" fill="none" stroke="#111" stroke-width="3"/>
  <path d="M14.8 14.8 L23.5 23.3" stroke="#111" stroke-width="3.4"/>
</svg>

<!-- PLAYBACK CONTROLS -->
<svg style="left:751px;top:567px" width="16" height="15" viewBox="0 0 16 15">
  <path d="M1 0.5 V14.5 M14.8 1 V14 L4.5 7.5 Z" fill="none" stroke="#a6a6ba" stroke-width="1.2" stroke-linejoin="round"/>
</svg>
<svg style="left:786px;top:564px" width="18" height="20" viewBox="0 0 18 20">
  <path d="M4.2 7.5 A7 7 0 1 0 9 5.3" fill="none" stroke="#a6a6ba" stroke-width="1.2"/>
  <path d="M6.2 5.3 L9.8 2.2 L9.8 8.4 Z" fill="#a6a6ba"/>
  <text x="9" y="16.5" text-anchor="middle" font-family="Liberation Sans" font-weight="bold" font-size="8.5" fill="#a6a6ba">5</text>
</svg>
<svg style="left:825px;top:565px" width="19" height="20" viewBox="0 0 19 20">
  <path d="M2.2 2.2 Q2.2 0.4 4 1.2 L17.2 8.4 Q18.8 9.5 17.2 10.6 L4 17.8 Q2.2 18.8 2.2 16.8 Z" fill="#a6a6ba"/>
</svg>
<svg style="left:862px;top:564px" width="18" height="20" viewBox="0 0 18 20">
  <path d="M13.8 7.5 A7 7 0 1 1 9 5.3" fill="none" stroke="#a6a6ba" stroke-width="1.2"/>
  <path d="M11.8 5.3 L8.2 2.2 L8.2 8.4 Z" fill="#a6a6ba"/>
  <text x="9" y="16.5" text-anchor="middle" font-family="Liberation Sans" font-weight="bold" font-size="8.5" fill="#a6a6ba">5</text>
</svg>
<svg style="left:899px;top:567px" width="16" height="15" viewBox="0 0 16 15">
  <path d="M15 0.5 V14.5 M1.2 1 V14 L11.5 7.5 Z" fill="none" stroke="#a6a6ba" stroke-width="1.2" stroke-linejoin="round"/>
</svg>
<svg style="left:1051px;top:567px" width="16" height="15" viewBox="0 0 16 15">
  <path d="M1 4.5 V1 H4.5 M11.5 1 H15 V4.5 M15 10.5 V14 H11.5 M4.5 14 H1 V10.5" fill="none" stroke="#a6a6ba" stroke-width="1.3"/>
</svg>

<!-- DROPDOWN -->
<div class="a" style="left:1258px;top:61px;width:328px;height:401px;background:#fff;border-radius:3px;box-shadow:0 2px 8px rgba(0,0,0,0.3)"></div>
<div class="a" style="left:1258px;top:263px;width:327px;height:61px;background:#f3f3f4"></div>
<div class="a" style="left:1271px;top:86px;font-size:15px;line-height:18px;color:#55556d;-webkit-text-stroke:0.3px #55556d;letter-spacing:-0.2px;white-space:nowrap">Video quality</div>
<div class="a" style="left:1271px;top:119px;font-size:14px;line-height:18px;color:#5c5c72;letter-spacing:-0.08px;white-space:nowrap">Your video will export as an MP4 file</div>

<div class="a" style="left:1270.5px;top:154px;font-size:16px;line-height:18px;color:#4e4e66;-webkit-text-stroke:0.3px #4e4e66;letter-spacing:0.9px;white-space:nowrap">480p</div>
<div class="a" style="left:1271px;top:177px;font-size:12px;line-height:14px;color:#5c5c72;letter-spacing:-0.1px;white-space:nowrap">For drafts</div>

<div class="a" style="left:1270.5px;top:215.5px;font-size:16px;line-height:18px;color:#4e4e66;-webkit-text-stroke:0.3px #4e4e66;letter-spacing:0.9px;white-space:nowrap">720p</div>
<div class="a" style="left:1271px;top:237.5px;font-size:12px;line-height:14px;color:#5c5c72;letter-spacing:-0.1px;white-space:nowrap">Smaller file, faster export</div>

<div class="a" style="left:1270.5px;top:276.5px;font-size:16px;line-height:18px;color:#4e4e66;-webkit-text-stroke:0.3px #4e4e66;letter-spacing:0.2px;white-space:nowrap">1080p</div>
<div class="a" style="left:1317px;top:274px;font-size:9px;line-height:10px;font-weight:bold;color:#4b3ddf;letter-spacing:0.6px;white-space:nowrap">HD</div>
<div class="a" style="left:1271px;top:299px;font-size:12px;line-height:14px;color:#5c5c72;letter-spacing:-0.1px;white-space:nowrap">High quality</div>

<div class="a" style="left:1270.5px;top:339px;font-size:16px;line-height:18px;color:#4e4e66;-webkit-text-stroke:0.3px #4e4e66;letter-spacing:-0.2px;white-space:nowrap">4K</div>
<div class="a" style="left:1293.5px;top:334.5px;font-size:9px;line-height:10px;font-weight:bold;color:#4b3ddf;letter-spacing:0.6px;white-space:nowrap">UHD</div>
<div class="a" style="left:1320px;top:337px;width:82px;height:20px;background:#e7e4fa;border-radius:3px"></div>
<div class="a" style="left:1326px;top:340.5px;font-size:11px;line-height:14px;font-weight:bold;color:#3d31a8;letter-spacing:-0.2px;white-space:nowrap">PREVIEW</div>
<svg style="left:1381px;top:340px" width="13" height="13" viewBox="0 0 13 13"><circle cx="6.5" cy="6.5" r="5.3" fill="none" stroke="#3d31a8" stroke-width="1.3"/></svg>
<div class="a" style="left:1271px;top:363px;font-size:12px;line-height:14px;color:#5c5c72;letter-spacing:-0.1px;white-space:nowrap">Make the most of your 4K content</div>

<div class="a" style="left:1270.5px;top:402px;font-size:16px;line-height:18px;color:#a9a9b8;-webkit-text-stroke:0.3px #a9a9b8;letter-spacing:-0.1px;white-space:nowrap">GIF</div>
<div class="a" style="left:1271px;top:424.5px;font-size:12px;line-height:14px;color:#b4b4c2;letter-spacing:-0.25px;white-space:nowrap">For videos 15 seconds or less</div>

<!-- RIGHT COLLAPSE TAB -->
<svg style="left:1584px;top:420px" width="19" height="68" viewBox="0 0 19 68"><path d="M18.5 0 Q18.5 6 12 8 Q2.5 10 2.5 18 V50 Q2.5 58 12 60 Q18.5 62 18.5 68 Z" fill="#262631"/></svg>
<svg style="left:1590px;top:449px" width="7" height="11" viewBox="0 0 7 11"><path d="M5.5 1.5 L1.8 5.5 L5.5 9.5" fill="none" stroke="#8a8a9e" stroke-width="1.3" stroke-linecap="round"/></svg>
<!-- LEFT COLLAPSE TAB -->
<svg style="left:64px;top:420px" width="19" height="68" viewBox="0 0 19 68"><path d="M0.5 0 Q0.5 6 7 8 Q16.5 10 16.5 18 V50 Q16.5 58 7 60 Q0.5 62 0.5 68 Z" fill="#262631"/></svg>
<svg style="left:69px;top:449.5px" width="7" height="11" viewBox="0 0 7 11"><path d="M1.8 1.8 L5 5.3 L1.8 8.8" fill="none" stroke="#8a8a9e" stroke-width="1.3" stroke-linecap="round"/></svg>

<!-- HELP BUTTON -->
<div class="a" style="left:1531px;top:537px;width:40.5px;height:40.5px;background:#fff;border-radius:50%"></div>
<svg style="left:1531px;top:537px" width="41" height="41" viewBox="1531 537 41 41">
  <defs><linearGradient id="qg" x1="0" y1="0" x2="1" y2="0"><stop offset="0" stop-color="#5a48e4"/><stop offset="1" stop-color="#4a80ea"/></linearGradient></defs>
  <path d="M1545.5 552.5 A5.6 5.6 0 1 1 1551.2 558 V561.5" fill="none" stroke="url(#qg)" stroke-width="3.8"/>
  <circle cx="1550.2" cy="566.2" r="2.7" fill="#8a3ad6"/>
</svg>
<!-- TOUCH 1 -->
<div class="a" style="left:1526px;top:2px;width:72px;height:72px;border-radius:50%;background:rgba(242,102,88,0.42)"></div>
<div class="a" style="left:1542px;top:18px;width:40px;height:40px;border-radius:50%;background:rgba(250,120,105,0.6)"></div>
<!-- TOUCH 2 -->
<div class="a" style="left:1377px;top:259px;width:72px;height:72px;border-radius:50%;background:rgba(242,102,88,0.35)"></div>
<div class="a" style="left:1393px;top:275px;width:40px;height:40px;border-radius:50%;background:rgba(250,110,95,0.65)"></div>

<!-- HANDS -->
<svg style="left:0;top:0;overflow:visible" width="1664" height="909" viewBox="0 0 1664 909">
  <defs>
    <filter id="hs" x="-40%" y="-40%" width="180%" height="180%"><feDropShadow dx="-2" dy="5" stdDeviation="5" flood-color="#000" flood-opacity="0.28"/></filter>
    <g id="hand">
      <circle cx="1613.5" cy="120.4" r="21.3" fill="#fff" stroke="#f36a5a" stroke-width="3.8"/>
      <path d="M1557.2 94 V50.4 A5.4 5.4 0 0 1 1568 50.4 V70.7 A5.4 5.4 0 0 1 1578.8 70.7 V74.45 A5.35 5.35 0 0 1 1589.5 74.45 V75.4 A5.1 5.1 0 0 1 1599.7 75.4 V103 Q1599.7 126.8 1576 126.8 Q1566 126.8 1559 119.5 L1538.5 98 Q1533.5 92 1538.5 87.8 Q1543.5 84 1548.5 88.5 L1557.2 96 Z" fill="#fdfdfb" stroke="#f36a5a" stroke-width="3.7" stroke-linejoin="round" filter="url(#hs)"/>
      <path d="M1568 70.7 V86 M1578.8 74.45 V86 M1589.5 75.4 V86" stroke="#f36a5a" stroke-width="3.7" stroke-linecap="butt"/>
    </g>
  </defs>
  <use href="#hand"/>
  <path d="M1611.9 130.6 V118.6 L1607.8 121 V117.2 L1612.4 114.6 H1615.7 V130.6 Z" fill="#f36a5a"/>
  <use href="#hand" transform="translate(-149.2,258.3)"/>
  <text x="1464" y="387.8" text-anchor="middle" font-family="Liberation Sans" font-weight="bold" font-size="22" fill="#f36a5a">2</text>
</svg>
</body></html>
